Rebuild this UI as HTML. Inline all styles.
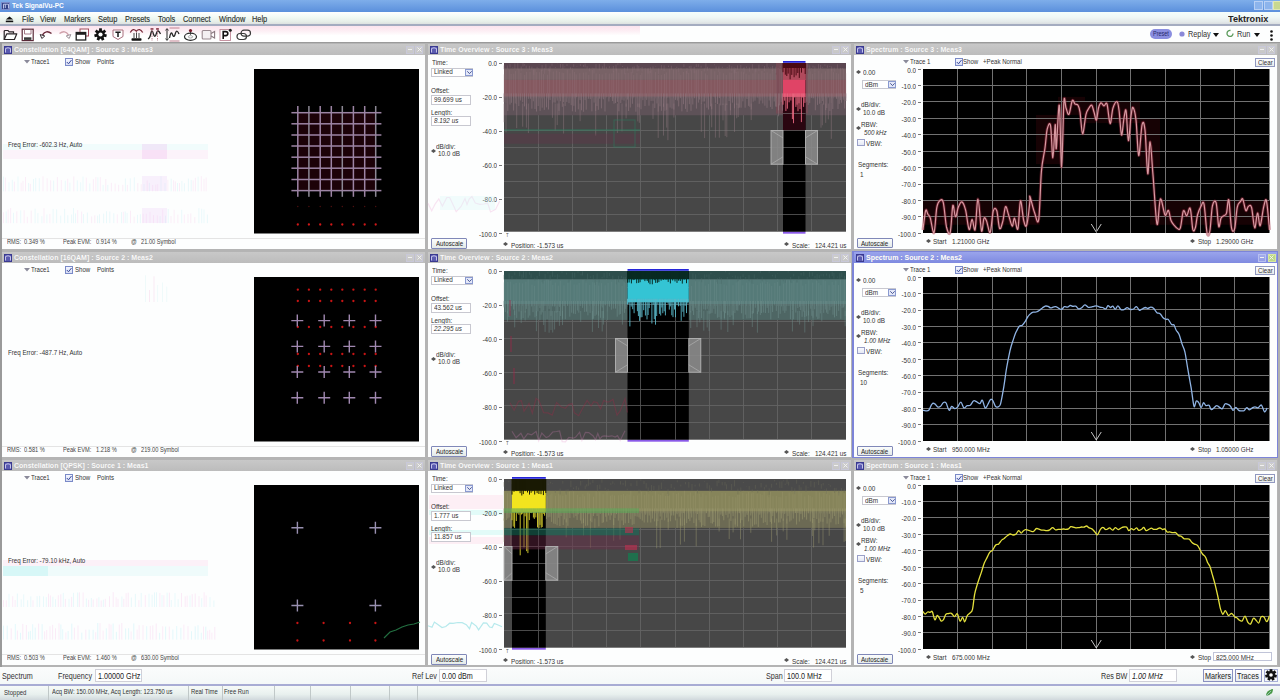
<!DOCTYPE html><html><head><meta charset="utf-8"><style>
*{margin:0;padding:0;box-sizing:border-box}
html,body{width:1280px;height:700px;overflow:hidden;background:#b4b4b4;font-family:"Liberation Sans", sans-serif}
.t{position:absolute;white-space:nowrap;line-height:1;transform:scaleX(.86);transform-origin:0 0}
.tr{transform-origin:100% 0 !important}
.b{position:absolute}
svg{position:absolute;overflow:visible}
</style></head><body><div class="b" style="left:0px;top:0px;width:1280px;height:12px;background:linear-gradient(#7eaeea,#5b90dc)"></div>
<div class="t" style="left:11.5px;top:1.8px;font-size:8px;color:#fff;font-weight:bold;transform:scaleX(.82)">Tek SignalVu-PC</div>
<div class="b" style="left:1px;top:1.5px;width:9px;height:8.5px;background:#34448a;border:1px solid #7a8ac8"></div>
<svg style="left:2.5px;top:3px" width="6" height="6"><path d="M0.5 5.5 V1.2 H5.5 V5.5 M2.3 1.2 V5" fill="none" stroke="#c8d0f0" stroke-width="0.9"/></svg>
<div class="b" style="left:1254px;top:1px;width:9px;height:9px;background:#8cb4ec;border:1px solid #b8d0f4"></div>
<div class="b" style="left:1264px;top:1px;width:9px;height:9px;background:#8cb4ec;border:1px solid #b8d0f4"></div>
<div class="b" style="left:1273px;top:1px;width:8px;height:9px;background:#c8d890;border:1px solid #e0e8b0"></div>
<div class="b" style="left:0px;top:12px;width:1280px;height:13px;background:linear-gradient(#f4fefc,#f0f8f6 40%,#e4eaea 75%,#d4d8dc)"></div>
<div class="b" style="left:0px;top:12px;width:640px;height:13px;background:linear-gradient(#ffffff,#f2faf4 40%,#e6eee8 75%,#d8dcdc)"></div>
<div class="b" style="left:0px;top:24px;width:1280px;height:2px;background:#a4acc0"></div>
<svg style="left:5px;top:15.5px" width="10" height="7"><path d="M0.8 3.6 L4.5 0.5 L8.2 3.6 Z" fill="#111"/><rect x="0.8" y="4.6" width="7.4" height="1.6" fill="#111"/></svg>
<div class="t" style="left:22px;top:14.5px;font-size:8.6px;color:#2e3430;-webkit-text-stroke:0.15px #2e3430">File</div>
<div class="t" style="left:40px;top:14.5px;font-size:8.6px;color:#2e3430;-webkit-text-stroke:0.15px #2e3430">View</div>
<div class="t" style="left:64px;top:14.5px;font-size:8.6px;color:#2e3430;-webkit-text-stroke:0.15px #2e3430">Markers</div>
<div class="t" style="left:98px;top:14.5px;font-size:8.6px;color:#2e3430;-webkit-text-stroke:0.15px #2e3430">Setup</div>
<div class="t" style="left:125px;top:14.5px;font-size:8.6px;color:#2e3430;-webkit-text-stroke:0.15px #2e3430">Presets</div>
<div class="t" style="left:158px;top:14.5px;font-size:8.6px;color:#2e3430;-webkit-text-stroke:0.15px #2e3430">Tools</div>
<div class="t" style="left:183px;top:14.5px;font-size:8.6px;color:#2e3430;-webkit-text-stroke:0.15px #2e3430">Connect</div>
<div class="t" style="left:219px;top:14.5px;font-size:8.6px;color:#2e3430;-webkit-text-stroke:0.15px #2e3430">Window</div>
<div class="t" style="left:252px;top:14.5px;font-size:8.6px;color:#2e3430;-webkit-text-stroke:0.15px #2e3430">Help</div>
<div class="t" style="left:1227.5px;top:13.6px;font-size:9.8px;color:#262626;font-weight:bold;transform:scaleX(.93)">Tektronix</div>
<div class="b" style="left:0px;top:26px;width:1280px;height:16px;background:#fdfefe"></div>
<div class="b" style="left:0px;top:26px;width:640px;height:16px;background:linear-gradient(#fbe4ee,#fdeef4 30%,#ffffff 60%,#ffffff)"></div>
<div class="b" style="left:0px;top:41.5px;width:1280px;height:1.8px;background:#9a9a9a"></div>
<svg style="left:3px;top:29px" width="15" height="12"><path d="M1.2 10.5 V2.5 Q1.2 1.5 2.2 1.5 H5 L6.2 2.8 H10.5 V4.8" fill="none" stroke="#2a2226" stroke-width="1.2"/><path d="M1.2 10.5 L3.8 4.8 H13.8 L11.4 10.5 Z" fill="#fff" stroke="#2a2226" stroke-width="1.2" stroke-linejoin="round"/></svg>
<svg style="left:21px;top:28px" width="14" height="14"><rect x="1.2" y="1.2" width="11" height="11.4" fill="#fff" stroke="#5a2a38" stroke-width="1.2"/><path d="M3.5 1.5 V6 H10 V1.5" fill="none" stroke="#9a6a78" stroke-width="0.9"/><rect x="3" y="9.3" width="7.4" height="2.6" fill="#3a3a3a"/></svg>
<svg style="left:39px;top:29px" width="15" height="11"><path d="M3.5 6 Q7 0.5 12.5 4.5" fill="none" stroke="#6a2a3a" stroke-width="1.5"/><path d="M1.2 5.5 L2.8 9.5 L5.8 7 Z" fill="#fff" stroke="#3a3036" stroke-width="1"/></svg>
<svg style="left:57px;top:29px" width="15" height="11"><path d="M2.5 4.5 Q8 0.5 11.5 6" fill="none" stroke="#d0a0aa" stroke-width="1.5"/><path d="M13.8 5.5 L12.2 9.5 L9.2 7 Z" fill="#fff" stroke="#9a9098" stroke-width="1"/></svg>
<svg style="left:75px;top:28px" width="15" height="13"><rect x="5" y="1" width="8.5" height="7" fill="#fff" stroke="#a04a5a" stroke-width="1"/><rect x="1.2" y="4.5" width="9.5" height="7.5" fill="#fff" stroke="#1e1e1e" stroke-width="1.3"/><rect x="1.2" y="4.5" width="9.5" height="2.3" fill="#1e1e1e"/></svg>
<svg style="left:93.5px;top:28px" width="13" height="13"><rect x="5.1" y="0.3" width="2.8" height="3" fill="#111" transform="rotate(0.0 6.5 6.5)"/><rect x="5.1" y="0.3" width="2.8" height="3" fill="#111" transform="rotate(51.4 6.5 6.5)"/><rect x="5.1" y="0.3" width="2.8" height="3" fill="#111" transform="rotate(102.9 6.5 6.5)"/><rect x="5.1" y="0.3" width="2.8" height="3" fill="#111" transform="rotate(154.3 6.5 6.5)"/><rect x="5.1" y="0.3" width="2.8" height="3" fill="#111" transform="rotate(205.7 6.5 6.5)"/><rect x="5.1" y="0.3" width="2.8" height="3" fill="#111" transform="rotate(257.1 6.5 6.5)"/><rect x="5.1" y="0.3" width="2.8" height="3" fill="#111" transform="rotate(308.6 6.5 6.5)"/><circle cx="6.5" cy="6.5" r="4.3" fill="#111"/><circle cx="6.5" cy="6.5" r="2.1" fill="#fff"/></svg>
<svg style="left:112px;top:28.5px" width="12" height="12"><path d="M1 1 H11 V7.5 L6 10.5 L1 7.5 Z" fill="#fff" stroke="#a06070" stroke-width="0.9"/><path d="M3.4 3.2 H8.6 M6 3.2 V8" stroke="#1a1a1a" stroke-width="1.5"/></svg>
<svg style="left:129px;top:27px" width="15" height="15"><path d="M1.3 5.5 Q4 0.3 7.3 4.2 Q10.6 0.3 13.7 5.5" fill="none" stroke="#7a2a3a" stroke-width="1.3"/><path d="M5 6 v5 M7.5 5.5 v5.5 M10 6 v5" stroke="#333" stroke-width="0.9"/><rect x="2.5" y="11.2" width="10" height="2.6" rx="0.8" fill="#111"/></svg>
<svg style="left:147px;top:27px" width="15" height="15"><path d="M1 12 Q3 11 4 6 Q5 1.5 6.5 7 Q8 12 9.5 6 Q11 1.5 13.5 7" fill="none" stroke="#262626" stroke-width="1.3"/><path d="M5 1 v13 M10.5 1 v13" stroke="#a05060" stroke-width="0.7" stroke-dasharray="1.5 1"/><rect x="3.5" y="1.2" width="3" height="1.5" fill="#8a3a4a"/><rect x="9" y="1.2" width="3" height="1.5" fill="#8a3a4a"/></svg>
<svg style="left:165px;top:27px" width="15" height="15"><path d="M4.5 11 Q6 3 7.5 7.5 Q9 12 10.5 6 Q12 2 14 7" fill="none" stroke="#262626" stroke-width="1.3"/><path d="M2 2 v11" stroke="#222" stroke-width="1"/><path d="M0.5 3.5 L2 1.5 L3.5 3.5 M0.5 11.5 L2 13.5 L3.5 11.5" fill="none" stroke="#222" stroke-width="0.8"/><path d="M4.5 1 h10 M4.5 14 h10" stroke="#c08090" stroke-width="1"/></svg>
<svg style="left:183px;top:28px" width="15" height="14"><ellipse cx="7.5" cy="8.8" rx="6" ry="3.6" fill="#fff" stroke="#2a2a2a" stroke-width="1.2"/><ellipse cx="7.5" cy="8.8" rx="2.2" ry="1.2" fill="none" stroke="#888" stroke-width="0.7"/><circle cx="7.5" cy="2.6" r="1.6" fill="#7a1a2a"/><path d="M7.5 3.8 v3" stroke="#333" stroke-width="0.9"/></svg>
<svg style="left:201px;top:29px" width="15" height="12"><rect x="1.2" y="1.5" width="8.8" height="8.5" rx="1" fill="#f4f0f2" stroke="#9a8a90" stroke-width="1.1"/><path d="M10 4.5 L13.6 2.5 V9 L10 7" fill="none" stroke="#8a7a80" stroke-width="1.1"/></svg>
<svg style="left:219px;top:28px" width="14" height="14"><rect x="1" y="1.5" width="10.5" height="11" fill="#fff" stroke="#c08898" stroke-width="0.9"/><path d="M4.2 11 V3.6 H6.8 Q8.8 3.6 8.8 5.6 Q8.8 7.6 6.8 7.6 H4.2" fill="none" stroke="#111" stroke-width="1.6"/><circle cx="11.3" cy="2.2" r="1.5" fill="#222"/></svg>
<svg style="left:236px;top:29px" width="16" height="12"><rect x="1" y="4.5" width="9.5" height="6" rx="3" fill="#fff" stroke="#3a3a3a" stroke-width="1.2"/><rect x="5" y="1.2" width="9.5" height="6" rx="3" fill="none" stroke="#3a3a3a" stroke-width="1.2"/></svg>
<div class="b" style="left:1150px;top:29px;width:22px;height:10px;background:#8a8ee0;border-radius:5px"></div>
<div class="t" style="left:1152.5px;top:30.8px;font-size:6.8px;color:#26286a;transform:scaleX(.8)">Preset</div>
<svg style="left:1179px;top:31px" width="6" height="6"><circle cx="3" cy="3" r="2.6" fill="#8a88d8"/></svg>
<div class="t" style="left:1188px;top:29.5px;font-size:8.5px;color:#333;">Replay</div>
<svg style="left:1213px;top:33px" width="6" height="4"><path d="M0 0 H6 L3 4 Z" fill="#111"/></svg>
<svg style="left:1226px;top:29px" width="9" height="9"><path d="M7 4.5 A3 3 0 1 1 4.5 1.5" fill="none" stroke="#5a9a5a" stroke-width="1.3"/></svg>
<div class="t" style="left:1237px;top:29.5px;font-size:8.5px;color:#333;">Run</div>
<svg style="left:1254px;top:33px" width="6" height="4"><path d="M0 0 H6 L3 4 Z" fill="#111"/></svg>
<svg style="left:1270px;top:30px" width="3" height="3"><circle cx="1.5" cy="1.5" r="1.3" fill="#111"/></svg>
<svg style="left:1270px;top:34px" width="3" height="3"><circle cx="1.5" cy="1.5" r="1.3" fill="#111"/></svg>
<svg style="left:1270px;top:38px" width="3" height="3"><circle cx="1.5" cy="1.5" r="1.3" fill="#111"/></svg>
<div class="b" style="left:2px;top:44px;width:423px;height:11px;background:linear-gradient(#c8c8c8,#bcbcbc)"></div>
<div class="b" style="left:2px;top:55px;width:423px;height:194px;background:#fdfefe"></div>
<div class="b" style="left:4px;top:45.5px;width:8px;height:8px;background:#5a5ab0;border:1px solid #3a3a90"></div>
<svg style="left:5px;top:47px" width="6" height="6"><path d="M0.5 5.5 V1.5 Q3 0 5.5 1.5 V5.5" fill="none" stroke="#d0d0f0" stroke-width="0.9"/></svg>
<div class="t" style="left:14px;top:46px;font-size:7.8px;color:#fbfbfb;font-weight:bold;transform:scaleX(.9);text-shadow:0 0 0.6px rgba(150,150,150,0.5)">Constellation [64QAM] : Source 3 : Meas3</div>
<div class="b" style="left:406px;top:45.5px;width:8px;height:8px;border:1px solid #c8c8d8;background:rgba(255,255,255,0.15)"></div>
<div class="b" style="left:408px;top:49px;width:4px;height:1.3px;background:#f0f0f0"></div>
<div class="b" style="left:415px;top:45.5px;width:8px;height:8px;border:1px solid #c8c8d8;background:rgba(255,255,255,0.15)"></div>
<svg style="left:416.5px;top:47px" width="5" height="5"><path d="M0.5 0.5 L4.5 4.5 M4.5 0.5 L0.5 4.5" stroke="#f4f4f4" stroke-width="0.9"/></svg>
<div class="b" style="left:428px;top:44px;width:423px;height:11px;background:linear-gradient(#c8c8c8,#bcbcbc)"></div>
<div class="b" style="left:428px;top:55px;width:423px;height:194px;background:#fdfefe"></div>
<div class="b" style="left:430px;top:45.5px;width:8px;height:8px;background:#5a5ab0;border:1px solid #3a3a90"></div>
<svg style="left:431px;top:47px" width="6" height="6"><path d="M0.5 5.5 V1.5 Q3 0 5.5 1.5 V5.5" fill="none" stroke="#d0d0f0" stroke-width="0.9"/></svg>
<div class="t" style="left:440px;top:46px;font-size:7.8px;color:#fbfbfb;font-weight:bold;transform:scaleX(.9);text-shadow:0 0 0.6px rgba(150,150,150,0.5)">Time Overview : Source 3 : Meas3</div>
<div class="b" style="left:832px;top:45.5px;width:8px;height:8px;border:1px solid #c8c8d8;background:rgba(255,255,255,0.15)"></div>
<div class="b" style="left:834px;top:49px;width:4px;height:1.3px;background:#f0f0f0"></div>
<div class="b" style="left:841px;top:45.5px;width:8px;height:8px;border:1px solid #c8c8d8;background:rgba(255,255,255,0.15)"></div>
<svg style="left:842.5px;top:47px" width="5" height="5"><path d="M0.5 0.5 L4.5 4.5 M4.5 0.5 L0.5 4.5" stroke="#f4f4f4" stroke-width="0.9"/></svg>
<div class="b" style="left:854px;top:44px;width:423px;height:11px;background:linear-gradient(#c8c8c8,#bcbcbc)"></div>
<div class="b" style="left:854px;top:55px;width:423px;height:194px;background:#fdfefe"></div>
<div class="b" style="left:856px;top:45.5px;width:8px;height:8px;background:#5a5ab0;border:1px solid #3a3a90"></div>
<svg style="left:857px;top:47px" width="6" height="6"><path d="M0.5 5.5 V1.5 Q3 0 5.5 1.5 V5.5" fill="none" stroke="#d0d0f0" stroke-width="0.9"/></svg>
<div class="t" style="left:866px;top:46px;font-size:7.8px;color:#fbfbfb;font-weight:bold;transform:scaleX(.9);text-shadow:0 0 0.6px rgba(150,150,150,0.5)">Spectrum : Source 3 : Meas3</div>
<div class="b" style="left:1258px;top:45.5px;width:8px;height:8px;border:1px solid #c8c8d8;background:rgba(255,255,255,0.15)"></div>
<div class="b" style="left:1260px;top:49px;width:4px;height:1.3px;background:#f0f0f0"></div>
<div class="b" style="left:1267px;top:45.5px;width:8px;height:8px;border:1px solid #c8c8d8;background:rgba(255,255,255,0.15)"></div>
<svg style="left:1268.5px;top:47px" width="5" height="5"><path d="M0.5 0.5 L4.5 4.5 M4.5 0.5 L0.5 4.5" stroke="#f4f4f4" stroke-width="0.9"/></svg>
<div class="b" style="left:2px;top:252px;width:423px;height:11px;background:linear-gradient(#c8c8c8,#bcbcbc)"></div>
<div class="b" style="left:2px;top:263px;width:423px;height:194px;background:#fdfefe"></div>
<div class="b" style="left:4px;top:253.5px;width:8px;height:8px;background:#5a5ab0;border:1px solid #3a3a90"></div>
<svg style="left:5px;top:255px" width="6" height="6"><path d="M0.5 5.5 V1.5 Q3 0 5.5 1.5 V5.5" fill="none" stroke="#d0d0f0" stroke-width="0.9"/></svg>
<div class="t" style="left:14px;top:254px;font-size:7.8px;color:#fbfbfb;font-weight:bold;transform:scaleX(.9);text-shadow:0 0 0.6px rgba(150,150,150,0.5)">Constellation [16QAM] : Source 2 : Meas2</div>
<div class="b" style="left:406px;top:253.5px;width:8px;height:8px;border:1px solid #c8c8d8;background:rgba(255,255,255,0.15)"></div>
<div class="b" style="left:408px;top:257px;width:4px;height:1.3px;background:#f0f0f0"></div>
<div class="b" style="left:415px;top:253.5px;width:8px;height:8px;border:1px solid #c8c8d8;background:rgba(255,255,255,0.15)"></div>
<svg style="left:416.5px;top:255px" width="5" height="5"><path d="M0.5 0.5 L4.5 4.5 M4.5 0.5 L0.5 4.5" stroke="#f4f4f4" stroke-width="0.9"/></svg>
<div class="b" style="left:428px;top:252px;width:423px;height:11px;background:linear-gradient(#c8c8c8,#bcbcbc)"></div>
<div class="b" style="left:428px;top:263px;width:423px;height:194px;background:#fdfefe"></div>
<div class="b" style="left:430px;top:253.5px;width:8px;height:8px;background:#5a5ab0;border:1px solid #3a3a90"></div>
<svg style="left:431px;top:255px" width="6" height="6"><path d="M0.5 5.5 V1.5 Q3 0 5.5 1.5 V5.5" fill="none" stroke="#d0d0f0" stroke-width="0.9"/></svg>
<div class="t" style="left:440px;top:254px;font-size:7.8px;color:#fbfbfb;font-weight:bold;transform:scaleX(.9);text-shadow:0 0 0.6px rgba(150,150,150,0.5)">Time Overview : Source 2 : Meas2</div>
<div class="b" style="left:832px;top:253.5px;width:8px;height:8px;border:1px solid #c8c8d8;background:rgba(255,255,255,0.15)"></div>
<div class="b" style="left:834px;top:257px;width:4px;height:1.3px;background:#f0f0f0"></div>
<div class="b" style="left:841px;top:253.5px;width:8px;height:8px;border:1px solid #c8c8d8;background:rgba(255,255,255,0.15)"></div>
<svg style="left:842.5px;top:255px" width="5" height="5"><path d="M0.5 0.5 L4.5 4.5 M4.5 0.5 L0.5 4.5" stroke="#f4f4f4" stroke-width="0.9"/></svg>
<div class="b" style="left:852px;top:251px;width:427px;height:207px;background:#7c84d8"></div>
<div class="b" style="left:854px;top:252px;width:423px;height:11px;background:linear-gradient(#9aa4ec,#7e8ae0)"></div>
<div class="b" style="left:854px;top:263px;width:423px;height:194px;background:#fdfefe"></div>
<div class="b" style="left:856px;top:253.5px;width:8px;height:8px;background:#5a5ab0;border:1px solid #3a3a90"></div>
<svg style="left:857px;top:255px" width="6" height="6"><path d="M0.5 5.5 V1.5 Q3 0 5.5 1.5 V5.5" fill="none" stroke="#d0d0f0" stroke-width="0.9"/></svg>
<div class="t" style="left:866px;top:254px;font-size:7.8px;color:#ffffff;font-weight:bold;transform:scaleX(.9);text-shadow:0 0 0.6px rgba(150,150,150,0.5)">Spectrum : Source 2 : Meas2</div>
<div class="b" style="left:1258px;top:253.5px;width:8px;height:8px;border:1px solid #b8c0f0;background:rgba(255,255,255,0.15)"></div>
<div class="b" style="left:1260px;top:257px;width:4px;height:1.3px;background:#f0f0f0"></div>
<div class="b" style="left:1267.5px;top:253.5px;width:8px;height:8px;border:1px solid #d8e8a0;background:#bcd888"></div>
<svg style="left:1268.5px;top:255px" width="5" height="5"><path d="M0.5 0.5 L4.5 4.5 M4.5 0.5 L0.5 4.5" stroke="#f4f4f4" stroke-width="0.9"/></svg>
<div class="b" style="left:2px;top:460px;width:423px;height:11px;background:linear-gradient(#c8c8c8,#bcbcbc)"></div>
<div class="b" style="left:2px;top:471px;width:423px;height:194px;background:#fdfefe"></div>
<div class="b" style="left:4px;top:461.5px;width:8px;height:8px;background:#5a5ab0;border:1px solid #3a3a90"></div>
<svg style="left:5px;top:463px" width="6" height="6"><path d="M0.5 5.5 V1.5 Q3 0 5.5 1.5 V5.5" fill="none" stroke="#d0d0f0" stroke-width="0.9"/></svg>
<div class="t" style="left:14px;top:462px;font-size:7.8px;color:#fbfbfb;font-weight:bold;transform:scaleX(.9);text-shadow:0 0 0.6px rgba(150,150,150,0.5)">Constellation [QPSK] : Source 1 : Meas1</div>
<div class="b" style="left:406px;top:461.5px;width:8px;height:8px;border:1px solid #c8c8d8;background:rgba(255,255,255,0.15)"></div>
<div class="b" style="left:408px;top:465px;width:4px;height:1.3px;background:#f0f0f0"></div>
<div class="b" style="left:415px;top:461.5px;width:8px;height:8px;border:1px solid #c8c8d8;background:rgba(255,255,255,0.15)"></div>
<svg style="left:416.5px;top:463px" width="5" height="5"><path d="M0.5 0.5 L4.5 4.5 M4.5 0.5 L0.5 4.5" stroke="#f4f4f4" stroke-width="0.9"/></svg>
<div class="b" style="left:428px;top:460px;width:423px;height:11px;background:linear-gradient(#c8c8c8,#bcbcbc)"></div>
<div class="b" style="left:428px;top:471px;width:423px;height:194px;background:#fdfefe"></div>
<div class="b" style="left:430px;top:461.5px;width:8px;height:8px;background:#5a5ab0;border:1px solid #3a3a90"></div>
<svg style="left:431px;top:463px" width="6" height="6"><path d="M0.5 5.5 V1.5 Q3 0 5.5 1.5 V5.5" fill="none" stroke="#d0d0f0" stroke-width="0.9"/></svg>
<div class="t" style="left:440px;top:462px;font-size:7.8px;color:#fbfbfb;font-weight:bold;transform:scaleX(.9);text-shadow:0 0 0.6px rgba(150,150,150,0.5)">Time Overview : Source 1 : Meas1</div>
<div class="b" style="left:832px;top:461.5px;width:8px;height:8px;border:1px solid #c8c8d8;background:rgba(255,255,255,0.15)"></div>
<div class="b" style="left:834px;top:465px;width:4px;height:1.3px;background:#f0f0f0"></div>
<div class="b" style="left:841px;top:461.5px;width:8px;height:8px;border:1px solid #c8c8d8;background:rgba(255,255,255,0.15)"></div>
<svg style="left:842.5px;top:463px" width="5" height="5"><path d="M0.5 0.5 L4.5 4.5 M4.5 0.5 L0.5 4.5" stroke="#f4f4f4" stroke-width="0.9"/></svg>
<div class="b" style="left:854px;top:460px;width:423px;height:11px;background:linear-gradient(#c8c8c8,#bcbcbc)"></div>
<div class="b" style="left:854px;top:471px;width:423px;height:194px;background:#fdfefe"></div>
<div class="b" style="left:856px;top:461.5px;width:8px;height:8px;background:#5a5ab0;border:1px solid #3a3a90"></div>
<svg style="left:857px;top:463px" width="6" height="6"><path d="M0.5 5.5 V1.5 Q3 0 5.5 1.5 V5.5" fill="none" stroke="#d0d0f0" stroke-width="0.9"/></svg>
<div class="t" style="left:866px;top:462px;font-size:7.8px;color:#fbfbfb;font-weight:bold;transform:scaleX(.9);text-shadow:0 0 0.6px rgba(150,150,150,0.5)">Spectrum : Source 1 : Meas1</div>
<div class="b" style="left:1258px;top:461.5px;width:8px;height:8px;border:1px solid #c8c8d8;background:rgba(255,255,255,0.15)"></div>
<div class="b" style="left:1260px;top:465px;width:4px;height:1.3px;background:#f0f0f0"></div>
<div class="b" style="left:1267px;top:461.5px;width:8px;height:8px;border:1px solid #c8c8d8;background:rgba(255,255,255,0.15)"></div>
<svg style="left:1268.5px;top:463px" width="5" height="5"><path d="M0.5 0.5 L4.5 4.5 M4.5 0.5 L0.5 4.5" stroke="#f4f4f4" stroke-width="0.9"/></svg>
<div class="b" style="left:3px;top:143.5px;width:205px;height:6.5px;background:#c8f4f4;opacity:0.22"></div>
<div class="b" style="left:3px;top:150px;width:205px;height:9px;background:#fbd4ee;opacity:0.25"></div>
<div class="b" style="left:142px;top:143.5px;width:25px;height:15.5px;background:#f0b8f0;opacity:0.3"></div>
<svg style="left:3px;top:175.7px" width="205" height="15.3"><rect x="0.0" y="0.5" width="1" height="14.8" fill="#c0f0f4" opacity="0.3"/><rect x="1.9" y="1.5" width="1" height="13.8" fill="#f8c8ec" opacity="0.3"/><rect x="5.5" y="6.4" width="1" height="8.9" fill="#c0f0f4" opacity="0.3"/><rect x="8.8" y="3.8" width="1" height="11.5" fill="#c0f0f4" opacity="0.3"/><rect x="10.9" y="5.6" width="1" height="9.7" fill="#f8c8ec" opacity="0.3"/><rect x="14.5" y="0.5" width="1" height="14.8" fill="#c0f0f4" opacity="0.3"/><rect x="17.6" y="6.7" width="1" height="8.6" fill="#f8c8ec" opacity="0.3"/><rect x="19.5" y="4.9" width="1" height="10.4" fill="#f8c8ec" opacity="0.3"/><rect x="22.0" y="1.0" width="1" height="14.3" fill="#f8c8ec" opacity="0.3"/><rect x="25.1" y="7.0" width="1" height="8.3" fill="#c0f0f4" opacity="0.3"/><rect x="26.9" y="7.9" width="1" height="7.4" fill="#f8c8ec" opacity="0.3"/><rect x="30.0" y="3.0" width="1" height="12.3" fill="#c0f0f4" opacity="0.3"/><rect x="32.2" y="1.9" width="1" height="13.4" fill="#c0f0f4" opacity="0.3"/><rect x="35.8" y="2.2" width="1" height="13.1" fill="#c0f0f4" opacity="0.3"/><rect x="39.5" y="0.2" width="1" height="15.1" fill="#f8c8ec" opacity="0.3"/><rect x="43.6" y="2.3" width="1" height="13.0" fill="#f8c8ec" opacity="0.3"/><rect x="47.1" y="4.3" width="1" height="11.0" fill="#f8c8ec" opacity="0.3"/><rect x="50.1" y="4.6" width="1" height="10.7" fill="#c0f0f4" opacity="0.3"/><rect x="53.9" y="1.1" width="1" height="14.2" fill="#f8c8ec" opacity="0.3"/><rect x="57.8" y="4.0" width="1" height="11.3" fill="#f8c8ec" opacity="0.3"/><rect x="61.8" y="4.7" width="1" height="10.6" fill="#c0f0f4" opacity="0.3"/><rect x="64.2" y="2.8" width="1" height="12.5" fill="#f8c8ec" opacity="0.3"/><rect x="66.4" y="6.7" width="1" height="8.6" fill="#c0f0f4" opacity="0.3"/><rect x="70.3" y="0.4" width="1" height="14.9" fill="#f8c8ec" opacity="0.3"/><rect x="73.8" y="4.4" width="1" height="10.9" fill="#c0f0f4" opacity="0.3"/><rect x="77.2" y="6.3" width="1" height="9.0" fill="#c0f0f4" opacity="0.3"/><rect x="79.5" y="0.6" width="1" height="14.7" fill="#c0f0f4" opacity="0.3"/><rect x="82.8" y="1.6" width="1" height="13.7" fill="#f8c8ec" opacity="0.3"/><rect x="86.3" y="7.4" width="1" height="7.9" fill="#c0f0f4" opacity="0.3"/><rect x="89.9" y="3.2" width="1" height="12.1" fill="#f8c8ec" opacity="0.3"/><rect x="92.4" y="1.1" width="1" height="14.2" fill="#f8c8ec" opacity="0.3"/><rect x="94.4" y="1.3" width="1" height="14.0" fill="#c0f0f4" opacity="0.3"/><rect x="96.8" y="1.1" width="1" height="14.2" fill="#f8c8ec" opacity="0.3"/><rect x="99.6" y="8.9" width="1" height="6.4" fill="#c0f0f4" opacity="0.3"/><rect x="102.3" y="3.0" width="1" height="12.3" fill="#f8c8ec" opacity="0.3"/><rect x="104.3" y="8.9" width="1" height="6.4" fill="#c0f0f4" opacity="0.3"/><rect x="107.9" y="6.8" width="1" height="8.5" fill="#f8c8ec" opacity="0.3"/><rect x="111.6" y="7.5" width="1" height="7.8" fill="#f8c8ec" opacity="0.3"/><rect x="115.1" y="8.8" width="1" height="6.5" fill="#f8c8ec" opacity="0.3"/><rect x="119.3" y="8.8" width="1" height="6.5" fill="#f8c8ec" opacity="0.3"/><rect x="121.9" y="2.4" width="1" height="12.9" fill="#c0f0f4" opacity="0.3"/><rect x="123.9" y="8.9" width="1" height="6.4" fill="#f8c8ec" opacity="0.3"/><rect x="126.8" y="2.4" width="1" height="12.9" fill="#c0f0f4" opacity="0.3"/><rect x="130.8" y="1.3" width="1" height="14.0" fill="#c0f0f4" opacity="0.3"/><rect x="134.3" y="7.1" width="1" height="8.2" fill="#f8c8ec" opacity="0.3"/><rect x="137.7" y="8.2" width="1" height="7.1" fill="#f8c8ec" opacity="0.3"/><rect x="140.5" y="8.0" width="1" height="7.3" fill="#c0f0f4" opacity="0.3"/><rect x="143.7" y="4.5" width="1" height="10.8" fill="#f8c8ec" opacity="0.3"/><rect x="145.9" y="6.8" width="1" height="8.5" fill="#c0f0f4" opacity="0.3"/><rect x="149.1" y="9.0" width="1" height="6.3" fill="#f8c8ec" opacity="0.3"/><rect x="152.3" y="8.7" width="1" height="6.6" fill="#f8c8ec" opacity="0.3"/><rect x="154.2" y="8.3" width="1" height="7.0" fill="#f8c8ec" opacity="0.3"/><rect x="157.5" y="0.2" width="1" height="15.1" fill="#c0f0f4" opacity="0.3"/><rect x="161.5" y="7.0" width="1" height="8.3" fill="#c0f0f4" opacity="0.3"/><rect x="164.4" y="3.8" width="1" height="11.5" fill="#f8c8ec" opacity="0.3"/><rect x="167.7" y="2.7" width="1" height="12.6" fill="#c0f0f4" opacity="0.3"/><rect x="170.1" y="4.3" width="1" height="11.0" fill="#f8c8ec" opacity="0.3"/><rect x="171.9" y="5.4" width="1" height="9.9" fill="#f8c8ec" opacity="0.3"/><rect x="174.0" y="7.0" width="1" height="8.3" fill="#c0f0f4" opacity="0.3"/><rect x="176.0" y="7.1" width="1" height="8.2" fill="#f8c8ec" opacity="0.3"/><rect x="178.4" y="4.9" width="1" height="10.4" fill="#c0f0f4" opacity="0.3"/><rect x="180.9" y="7.2" width="1" height="8.1" fill="#c0f0f4" opacity="0.3"/><rect x="184.9" y="2.5" width="1" height="12.8" fill="#c0f0f4" opacity="0.3"/><rect x="187.7" y="3.8" width="1" height="11.5" fill="#c0f0f4" opacity="0.3"/><rect x="189.6" y="4.4" width="1" height="10.9" fill="#f8c8ec" opacity="0.3"/><rect x="191.9" y="1.8" width="1" height="13.5" fill="#f8c8ec" opacity="0.3"/><rect x="194.6" y="0.7" width="1" height="14.6" fill="#c0f0f4" opacity="0.3"/><rect x="197.8" y="0.2" width="1" height="15.1" fill="#f8c8ec" opacity="0.3"/><rect x="200.5" y="2.9" width="1" height="12.4" fill="#f8c8ec" opacity="0.3"/><rect x="202.6" y="1.5" width="1" height="13.8" fill="#f8c8ec" opacity="0.3"/></svg>
<div class="b" style="left:142px;top:175.7px;width:25px;height:15.3px;background:#e8c0f4;opacity:0.22"></div>
<svg style="left:3px;top:207.8px" width="205" height="15.2"><rect x="0.0" y="4.2" width="1" height="11.0" fill="#f8c8ec" opacity="0.3"/><rect x="2.7" y="3.4" width="1" height="11.8" fill="#c0f0f4" opacity="0.3"/><rect x="4.6" y="1.5" width="1" height="13.7" fill="#f8c8ec" opacity="0.3"/><rect x="7.1" y="0.0" width="1" height="15.2" fill="#f8c8ec" opacity="0.3"/><rect x="10.0" y="4.8" width="1" height="10.4" fill="#c0f0f4" opacity="0.3"/><rect x="13.3" y="3.3" width="1" height="11.9" fill="#f8c8ec" opacity="0.3"/><rect x="17.2" y="2.4" width="1" height="12.8" fill="#c0f0f4" opacity="0.3"/><rect x="20.6" y="2.2" width="1" height="13.0" fill="#f8c8ec" opacity="0.3"/><rect x="23.8" y="8.8" width="1" height="6.4" fill="#f8c8ec" opacity="0.3"/><rect x="27.7" y="2.6" width="1" height="12.6" fill="#f8c8ec" opacity="0.3"/><rect x="31.6" y="0.7" width="1" height="14.5" fill="#c0f0f4" opacity="0.3"/><rect x="34.4" y="5.1" width="1" height="10.1" fill="#c0f0f4" opacity="0.3"/><rect x="38.4" y="8.2" width="1" height="7.0" fill="#c0f0f4" opacity="0.3"/><rect x="40.5" y="0.3" width="1" height="14.9" fill="#f8c8ec" opacity="0.3"/><rect x="43.4" y="6.4" width="1" height="8.8" fill="#c0f0f4" opacity="0.3"/><rect x="46.4" y="5.9" width="1" height="9.3" fill="#f8c8ec" opacity="0.3"/><rect x="49.6" y="0.9" width="1" height="14.3" fill="#c0f0f4" opacity="0.3"/><rect x="53.1" y="1.3" width="1" height="13.9" fill="#c0f0f4" opacity="0.3"/><rect x="57.2" y="7.6" width="1" height="7.6" fill="#c0f0f4" opacity="0.3"/><rect x="61.1" y="0.9" width="1" height="14.3" fill="#c0f0f4" opacity="0.3"/><rect x="64.3" y="7.2" width="1" height="8.0" fill="#c0f0f4" opacity="0.3"/><rect x="68.1" y="6.5" width="1" height="8.7" fill="#c0f0f4" opacity="0.3"/><rect x="70.0" y="0.1" width="1" height="15.1" fill="#c0f0f4" opacity="0.3"/><rect x="72.0" y="5.4" width="1" height="9.8" fill="#c0f0f4" opacity="0.3"/><rect x="74.2" y="2.1" width="1" height="13.1" fill="#f8c8ec" opacity="0.3"/><rect x="78.1" y="3.5" width="1" height="11.7" fill="#f8c8ec" opacity="0.3"/><rect x="80.0" y="6.1" width="1" height="9.1" fill="#c0f0f4" opacity="0.3"/><rect x="83.9" y="4.5" width="1" height="10.7" fill="#c0f0f4" opacity="0.3"/><rect x="88.1" y="8.4" width="1" height="6.8" fill="#f8c8ec" opacity="0.3"/><rect x="91.3" y="7.3" width="1" height="7.9" fill="#f8c8ec" opacity="0.3"/><rect x="94.1" y="7.7" width="1" height="7.5" fill="#c0f0f4" opacity="0.3"/><rect x="96.0" y="6.3" width="1" height="8.9" fill="#c0f0f4" opacity="0.3"/><rect x="100.1" y="5.7" width="1" height="9.5" fill="#c0f0f4" opacity="0.3"/><rect x="103.0" y="3.2" width="1" height="12.0" fill="#c0f0f4" opacity="0.3"/><rect x="106.3" y="3.5" width="1" height="11.7" fill="#c0f0f4" opacity="0.3"/><rect x="110.3" y="5.2" width="1" height="10.0" fill="#c0f0f4" opacity="0.3"/><rect x="113.8" y="6.4" width="1" height="8.8" fill="#f8c8ec" opacity="0.3"/><rect x="118.0" y="4.1" width="1" height="11.1" fill="#c0f0f4" opacity="0.3"/><rect x="119.8" y="3.8" width="1" height="11.4" fill="#f8c8ec" opacity="0.3"/><rect x="121.7" y="3.4" width="1" height="11.8" fill="#c0f0f4" opacity="0.3"/><rect x="123.6" y="4.9" width="1" height="10.3" fill="#c0f0f4" opacity="0.3"/><rect x="127.0" y="2.7" width="1" height="12.5" fill="#f8c8ec" opacity="0.3"/><rect x="130.6" y="8.6" width="1" height="6.6" fill="#f8c8ec" opacity="0.3"/><rect x="134.0" y="6.8" width="1" height="8.4" fill="#c0f0f4" opacity="0.3"/><rect x="136.9" y="6.2" width="1" height="9.0" fill="#c0f0f4" opacity="0.3"/><rect x="139.6" y="5.8" width="1" height="9.4" fill="#f8c8ec" opacity="0.3"/><rect x="142.8" y="5.7" width="1" height="9.5" fill="#f8c8ec" opacity="0.3"/><rect x="146.5" y="3.9" width="1" height="11.3" fill="#f8c8ec" opacity="0.3"/><rect x="150.0" y="7.1" width="1" height="8.1" fill="#f8c8ec" opacity="0.3"/><rect x="153.8" y="7.4" width="1" height="7.8" fill="#f8c8ec" opacity="0.3"/><rect x="156.6" y="8.2" width="1" height="7.0" fill="#c0f0f4" opacity="0.3"/><rect x="159.2" y="1.5" width="1" height="13.7" fill="#f8c8ec" opacity="0.3"/><rect x="162.0" y="7.6" width="1" height="7.6" fill="#c0f0f4" opacity="0.3"/><rect x="164.7" y="1.0" width="1" height="14.2" fill="#c0f0f4" opacity="0.3"/><rect x="167.5" y="8.0" width="1" height="7.2" fill="#f8c8ec" opacity="0.3"/><rect x="170.6" y="1.8" width="1" height="13.4" fill="#f8c8ec" opacity="0.3"/><rect x="174.4" y="6.6" width="1" height="8.6" fill="#f8c8ec" opacity="0.3"/><rect x="178.2" y="1.8" width="1" height="13.4" fill="#c0f0f4" opacity="0.3"/><rect x="180.8" y="6.5" width="1" height="8.7" fill="#f8c8ec" opacity="0.3"/><rect x="184.5" y="6.0" width="1" height="9.2" fill="#f8c8ec" opacity="0.3"/><rect x="187.3" y="5.4" width="1" height="9.8" fill="#f8c8ec" opacity="0.3"/><rect x="191.3" y="9.1" width="1" height="6.1" fill="#f8c8ec" opacity="0.3"/><rect x="195.4" y="0.1" width="1" height="15.1" fill="#c0f0f4" opacity="0.3"/><rect x="198.2" y="0.7" width="1" height="14.5" fill="#c0f0f4" opacity="0.3"/><rect x="200.5" y="1.5" width="1" height="13.7" fill="#c0f0f4" opacity="0.3"/><rect x="203.9" y="6.5" width="1" height="8.7" fill="#c0f0f4" opacity="0.3"/></svg>
<div class="b" style="left:142px;top:207.8px;width:25px;height:15.2px;background:#e8c0f4;opacity:0.22"></div>
<div class="b" style="left:3px;top:559.5px;width:205px;height:6.8px;background:#fcd4ec;opacity:0.3"></div>
<div class="b" style="left:3px;top:566.3px;width:205px;height:9.5px;background:#d0f6f6;opacity:0.3"></div>
<div class="b" style="left:3px;top:566.3px;width:45px;height:9.5px;background:#a0eeee;opacity:0.3"></div>
<svg style="left:3px;top:592px" width="212" height="15"><rect x="0.0" y="8.1" width="1" height="6.9" fill="#f8c0e8" opacity="0.3"/><rect x="2.8" y="8.4" width="1" height="6.6" fill="#f8c0e8" opacity="0.3"/><rect x="5.5" y="1.8" width="1" height="13.2" fill="#b8f0f4" opacity="0.3"/><rect x="9.2" y="4.2" width="1" height="10.8" fill="#f8c0e8" opacity="0.3"/><rect x="11.6" y="8.0" width="1" height="7.0" fill="#f8c0e8" opacity="0.3"/><rect x="13.9" y="1.5" width="1" height="13.5" fill="#b8f0f4" opacity="0.3"/><rect x="17.7" y="7.3" width="1" height="7.7" fill="#b8f0f4" opacity="0.3"/><rect x="20.2" y="2.4" width="1" height="12.6" fill="#b8f0f4" opacity="0.3"/><rect x="24.1" y="8.2" width="1" height="6.8" fill="#b8f0f4" opacity="0.3"/><rect x="27.3" y="4.4" width="1" height="10.6" fill="#b8f0f4" opacity="0.3"/><rect x="29.5" y="8.2" width="1" height="6.8" fill="#f8c0e8" opacity="0.3"/><rect x="33.6" y="4.1" width="1" height="10.9" fill="#b8f0f4" opacity="0.3"/><rect x="36.1" y="3.8" width="1" height="11.2" fill="#b8f0f4" opacity="0.3"/><rect x="40.0" y="4.4" width="1" height="10.6" fill="#b8f0f4" opacity="0.3"/><rect x="42.8" y="5.1" width="1" height="9.9" fill="#b8f0f4" opacity="0.3"/><rect x="45.0" y="1.7" width="1" height="13.3" fill="#f8c0e8" opacity="0.3"/><rect x="46.9" y="3.4" width="1" height="11.6" fill="#f8c0e8" opacity="0.3"/><rect x="49.4" y="4.8" width="1" height="10.2" fill="#b8f0f4" opacity="0.3"/><rect x="52.0" y="7.2" width="1" height="7.8" fill="#b8f0f4" opacity="0.3"/><rect x="54.8" y="3.3" width="1" height="11.7" fill="#f8c0e8" opacity="0.3"/><rect x="57.3" y="2.3" width="1" height="12.7" fill="#f8c0e8" opacity="0.3"/><rect x="59.8" y="0.9" width="1" height="14.1" fill="#b8f0f4" opacity="0.3"/><rect x="61.9" y="6.9" width="1" height="8.1" fill="#f8c0e8" opacity="0.3"/><rect x="65.5" y="6.9" width="1" height="8.1" fill="#b8f0f4" opacity="0.3"/><rect x="68.1" y="4.9" width="1" height="10.1" fill="#f8c0e8" opacity="0.3"/><rect x="70.0" y="0.9" width="1" height="14.1" fill="#b8f0f4" opacity="0.3"/><rect x="74.1" y="0.4" width="1" height="14.6" fill="#b8f0f4" opacity="0.3"/><rect x="75.9" y="0.3" width="1" height="14.7" fill="#f8c0e8" opacity="0.3"/><rect x="79.6" y="0.5" width="1" height="14.5" fill="#f8c0e8" opacity="0.3"/><rect x="82.9" y="6.4" width="1" height="8.6" fill="#b8f0f4" opacity="0.3"/><rect x="85.1" y="7.8" width="1" height="7.2" fill="#f8c0e8" opacity="0.3"/><rect x="87.9" y="6.0" width="1" height="9.0" fill="#b8f0f4" opacity="0.3"/><rect x="89.7" y="7.5" width="1" height="7.5" fill="#f8c0e8" opacity="0.3"/><rect x="93.4" y="6.4" width="1" height="8.6" fill="#f8c0e8" opacity="0.3"/><rect x="95.4" y="5.2" width="1" height="9.8" fill="#b8f0f4" opacity="0.3"/><rect x="97.7" y="8.5" width="1" height="6.5" fill="#f8c0e8" opacity="0.3"/><rect x="99.9" y="7.7" width="1" height="7.3" fill="#b8f0f4" opacity="0.3"/><rect x="101.8" y="6.8" width="1" height="8.2" fill="#f8c0e8" opacity="0.3"/><rect x="106.0" y="4.2" width="1" height="10.8" fill="#f8c0e8" opacity="0.3"/><rect x="109.7" y="0.1" width="1" height="14.9" fill="#f8c0e8" opacity="0.3"/><rect x="112.6" y="5.3" width="1" height="9.7" fill="#f8c0e8" opacity="0.3"/><rect x="114.5" y="6.8" width="1" height="8.2" fill="#f8c0e8" opacity="0.3"/><rect x="118.4" y="4.5" width="1" height="10.5" fill="#b8f0f4" opacity="0.3"/><rect x="120.3" y="6.8" width="1" height="8.2" fill="#f8c0e8" opacity="0.3"/><rect x="122.6" y="1.2" width="1" height="13.8" fill="#f8c0e8" opacity="0.3"/><rect x="124.7" y="0.6" width="1" height="14.4" fill="#f8c0e8" opacity="0.3"/><rect x="127.9" y="5.4" width="1" height="9.6" fill="#b8f0f4" opacity="0.3"/><rect x="131.9" y="1.9" width="1" height="13.1" fill="#b8f0f4" opacity="0.3"/><rect x="135.4" y="8.2" width="1" height="6.8" fill="#f8c0e8" opacity="0.3"/><rect x="137.7" y="0.9" width="1" height="14.1" fill="#b8f0f4" opacity="0.3"/><rect x="141.8" y="3.1" width="1" height="11.9" fill="#f8c0e8" opacity="0.3"/><rect x="145.5" y="1.7" width="1" height="13.3" fill="#b8f0f4" opacity="0.3"/><rect x="148.6" y="2.8" width="1" height="12.2" fill="#b8f0f4" opacity="0.3"/><rect x="151.0" y="0.4" width="1" height="14.6" fill="#b8f0f4" opacity="0.3"/><rect x="153.0" y="0.3" width="1" height="14.7" fill="#b8f0f4" opacity="0.3"/><rect x="156.4" y="0.9" width="1" height="14.1" fill="#f8c0e8" opacity="0.3"/><rect x="158.5" y="3.0" width="1" height="12.0" fill="#b8f0f4" opacity="0.3"/><rect x="160.4" y="3.3" width="1" height="11.7" fill="#f8c0e8" opacity="0.3"/><rect x="163.6" y="0.7" width="1" height="14.3" fill="#b8f0f4" opacity="0.3"/><rect x="165.9" y="0.7" width="1" height="14.3" fill="#f8c0e8" opacity="0.3"/><rect x="167.8" y="8.0" width="1" height="7.0" fill="#b8f0f4" opacity="0.3"/><rect x="171.5" y="1.1" width="1" height="13.9" fill="#b8f0f4" opacity="0.3"/><rect x="174.6" y="7.2" width="1" height="7.8" fill="#b8f0f4" opacity="0.3"/><rect x="178.0" y="1.0" width="1" height="14.0" fill="#f8c0e8" opacity="0.3"/><rect x="181.7" y="4.3" width="1" height="10.7" fill="#f8c0e8" opacity="0.3"/><rect x="183.6" y="3.6" width="1" height="11.4" fill="#f8c0e8" opacity="0.3"/><rect x="186.5" y="3.5" width="1" height="11.5" fill="#b8f0f4" opacity="0.3"/><rect x="188.7" y="2.1" width="1" height="12.9" fill="#f8c0e8" opacity="0.3"/><rect x="191.7" y="1.5" width="1" height="13.5" fill="#f8c0e8" opacity="0.3"/><rect x="195.5" y="4.1" width="1" height="10.9" fill="#f8c0e8" opacity="0.3"/><rect x="198.2" y="6.2" width="1" height="8.8" fill="#b8f0f4" opacity="0.3"/><rect x="200.6" y="0.3" width="1" height="14.7" fill="#f8c0e8" opacity="0.3"/><rect x="202.6" y="3.4" width="1" height="11.6" fill="#f8c0e8" opacity="0.3"/><rect x="206.5" y="5.1" width="1" height="9.9" fill="#b8f0f4" opacity="0.3"/><rect x="210.4" y="8.4" width="1" height="6.6" fill="#b8f0f4" opacity="0.3"/></svg>
<svg style="left:3px;top:623px" width="212" height="16.6"><rect x="0.0" y="2.6" width="1" height="14.0" fill="#a8ecf4" opacity="0.3"/><rect x="3.7" y="2.6" width="1" height="14.0" fill="#a8ecf4" opacity="0.3"/><rect x="7.7" y="5.3" width="1" height="11.3" fill="#f8c0e8" opacity="0.3"/><rect x="11.8" y="1.0" width="1" height="15.6" fill="#a8ecf4" opacity="0.3"/><rect x="13.9" y="7.5" width="1" height="9.1" fill="#f8c0e8" opacity="0.3"/><rect x="17.0" y="9.8" width="1" height="6.8" fill="#a8ecf4" opacity="0.3"/><rect x="19.3" y="0.8" width="1" height="15.8" fill="#f8c0e8" opacity="0.3"/><rect x="22.9" y="2.0" width="1" height="14.6" fill="#f8c0e8" opacity="0.3"/><rect x="25.1" y="8.7" width="1" height="7.9" fill="#a8ecf4" opacity="0.3"/><rect x="26.9" y="7.9" width="1" height="8.7" fill="#a8ecf4" opacity="0.3"/><rect x="29.2" y="1.3" width="1" height="15.3" fill="#a8ecf4" opacity="0.3"/><rect x="31.7" y="4.6" width="1" height="12.0" fill="#a8ecf4" opacity="0.3"/><rect x="35.1" y="0.6" width="1" height="16.0" fill="#f8c0e8" opacity="0.3"/><rect x="38.6" y="1.1" width="1" height="15.5" fill="#a8ecf4" opacity="0.3"/><rect x="41.1" y="8.3" width="1" height="8.3" fill="#f8c0e8" opacity="0.3"/><rect x="43.2" y="7.0" width="1" height="9.6" fill="#f8c0e8" opacity="0.3"/><rect x="46.5" y="3.2" width="1" height="13.4" fill="#f8c0e8" opacity="0.3"/><rect x="49.1" y="1.8" width="1" height="14.8" fill="#f8c0e8" opacity="0.3"/><rect x="52.0" y="5.2" width="1" height="11.4" fill="#f8c0e8" opacity="0.3"/><rect x="55.5" y="0.2" width="1" height="16.4" fill="#f8c0e8" opacity="0.3"/><rect x="57.4" y="1.5" width="1" height="15.1" fill="#a8ecf4" opacity="0.3"/><rect x="59.2" y="6.3" width="1" height="10.3" fill="#a8ecf4" opacity="0.3"/><rect x="62.4" y="9.5" width="1" height="7.1" fill="#f8c0e8" opacity="0.3"/><rect x="64.6" y="8.0" width="1" height="8.6" fill="#a8ecf4" opacity="0.3"/><rect x="68.3" y="0.6" width="1" height="16.0" fill="#a8ecf4" opacity="0.3"/><rect x="70.9" y="4.7" width="1" height="11.9" fill="#f8c0e8" opacity="0.3"/><rect x="74.5" y="2.5" width="1" height="14.1" fill="#f8c0e8" opacity="0.3"/><rect x="78.3" y="9.6" width="1" height="7.0" fill="#a8ecf4" opacity="0.3"/><rect x="82.3" y="6.6" width="1" height="10.0" fill="#f8c0e8" opacity="0.3"/><rect x="85.6" y="6.6" width="1" height="10.0" fill="#a8ecf4" opacity="0.3"/><rect x="89.6" y="6.8" width="1" height="9.8" fill="#a8ecf4" opacity="0.3"/><rect x="92.2" y="9.2" width="1" height="7.4" fill="#f8c0e8" opacity="0.3"/><rect x="94.3" y="0.0" width="1" height="16.6" fill="#a8ecf4" opacity="0.3"/><rect x="96.5" y="0.1" width="1" height="16.5" fill="#f8c0e8" opacity="0.3"/><rect x="99.6" y="7.6" width="1" height="9.0" fill="#f8c0e8" opacity="0.3"/><rect x="102.8" y="5.4" width="1" height="11.2" fill="#a8ecf4" opacity="0.3"/><rect x="105.6" y="0.8" width="1" height="15.8" fill="#f8c0e8" opacity="0.3"/><rect x="107.5" y="1.6" width="1" height="15.0" fill="#f8c0e8" opacity="0.3"/><rect x="109.6" y="0.5" width="1" height="16.1" fill="#a8ecf4" opacity="0.3"/><rect x="112.9" y="8.9" width="1" height="7.7" fill="#a8ecf4" opacity="0.3"/><rect x="115.8" y="1.5" width="1" height="15.1" fill="#f8c0e8" opacity="0.3"/><rect x="118.3" y="0.0" width="1" height="16.6" fill="#f8c0e8" opacity="0.3"/><rect x="122.1" y="5.4" width="1" height="11.2" fill="#a8ecf4" opacity="0.3"/><rect x="125.1" y="5.2" width="1" height="11.4" fill="#a8ecf4" opacity="0.3"/><rect x="127.6" y="8.5" width="1" height="8.1" fill="#f8c0e8" opacity="0.3"/><rect x="130.3" y="0.4" width="1" height="16.2" fill="#a8ecf4" opacity="0.3"/><rect x="133.6" y="6.6" width="1" height="10.0" fill="#f8c0e8" opacity="0.3"/><rect x="135.6" y="2.2" width="1" height="14.4" fill="#f8c0e8" opacity="0.3"/><rect x="139.5" y="2.1" width="1" height="14.5" fill="#f8c0e8" opacity="0.3"/><rect x="143.2" y="3.3" width="1" height="13.3" fill="#a8ecf4" opacity="0.3"/><rect x="146.8" y="2.9" width="1" height="13.7" fill="#f8c0e8" opacity="0.3"/><rect x="149.3" y="2.3" width="1" height="14.3" fill="#f8c0e8" opacity="0.3"/><rect x="152.7" y="0.5" width="1" height="16.1" fill="#f8c0e8" opacity="0.3"/><rect x="156.1" y="9.8" width="1" height="6.8" fill="#a8ecf4" opacity="0.3"/><rect x="159.2" y="3.3" width="1" height="13.3" fill="#f8c0e8" opacity="0.3"/><rect x="162.1" y="3.5" width="1" height="13.1" fill="#a8ecf4" opacity="0.3"/><rect x="165.8" y="3.5" width="1" height="13.1" fill="#f8c0e8" opacity="0.3"/><rect x="169.4" y="6.5" width="1" height="10.1" fill="#a8ecf4" opacity="0.3"/><rect x="173.2" y="3.1" width="1" height="13.5" fill="#a8ecf4" opacity="0.3"/><rect x="177.4" y="4.8" width="1" height="11.8" fill="#a8ecf4" opacity="0.3"/><rect x="180.4" y="1.6" width="1" height="15.0" fill="#f8c0e8" opacity="0.3"/><rect x="184.5" y="3.1" width="1" height="13.5" fill="#f8c0e8" opacity="0.3"/><rect x="188.0" y="8.2" width="1" height="8.4" fill="#a8ecf4" opacity="0.3"/><rect x="191.7" y="3.3" width="1" height="13.3" fill="#a8ecf4" opacity="0.3"/><rect x="194.5" y="2.2" width="1" height="14.4" fill="#a8ecf4" opacity="0.3"/><rect x="197.8" y="9.7" width="1" height="6.9" fill="#a8ecf4" opacity="0.3"/><rect x="200.0" y="3.5" width="1" height="13.1" fill="#f8c0e8" opacity="0.3"/><rect x="202.3" y="3.7" width="1" height="12.9" fill="#a8ecf4" opacity="0.3"/><rect x="204.2" y="7.7" width="1" height="8.9" fill="#f8c0e8" opacity="0.3"/><rect x="206.2" y="6.8" width="1" height="9.8" fill="#f8c0e8" opacity="0.3"/><rect x="208.4" y="9.6" width="1" height="7.0" fill="#f8c0e8" opacity="0.3"/><rect x="211.3" y="3.9" width="1" height="12.7" fill="#f8c0e8" opacity="0.3"/></svg>
<svg style="left:145px;top:272px" width="25" height="30"><rect x="0.0" y="3.2" width="1" height="26.8" fill="#c8f0f0" opacity="0.25"/><rect x="4.0" y="18.0" width="1" height="12.0" fill="#f4b0d8" opacity="0.25"/><rect x="8.5" y="4.3" width="1" height="25.7" fill="#f4b0d8" opacity="0.25"/><rect x="12.1" y="13.1" width="1" height="16.9" fill="#c8f0f0" opacity="0.25"/><rect x="17.0" y="10.5" width="1" height="19.5" fill="#c8f0f0" opacity="0.25"/><rect x="21.2" y="14.5" width="1" height="15.5" fill="#c8f0f0" opacity="0.25"/></svg>
<div class="b" style="left:429px;top:495px;width:74px;height:14px;background:#fde0ec;opacity:0.5"></div>
<div class="b" style="left:429px;top:510px;width:74px;height:5px;background:#d0f8f4;opacity:0.6"></div>
<div class="b" style="left:429px;top:530px;width:74px;height:5px;background:#d0f8f4;opacity:0.6"></div>
<div class="b" style="left:429px;top:537px;width:74px;height:7px;background:#fde0ec;opacity:0.5"></div>
<div class="t" style="left:31px;top:59.3px;font-size:7.1px;color:#333;">Trace1</div>
<svg style="left:24px;top:60px" width="6" height="4"><path d="M0 0 H6 L3 3.5 Z" fill="#8a8a9a"/></svg>
<div class="b" style="left:65px;top:58px;width:8px;height:8px;border:1px solid #7a8ac8;background:linear-gradient(#f4f6ff,#d8def4)"></div>
<svg style="left:66px;top:59px" width="6" height="6"><path d="M0.8 3 L2.5 4.8 L5.5 1" fill="none" stroke="#3a4a9a" stroke-width="1"/></svg>
<div class="t" style="left:74.5px;top:59.3px;font-size:7.1px;color:#333;">Show</div>
<div class="t" style="left:97px;top:59.3px;font-size:7.1px;color:#333;">Points</div>
<div class="t" style="left:8px;top:141px;font-size:7.2px;color:#333;">Freq Error: -602.3 Hz, Auto</div>
<div class="b" style="left:2px;top:238px;width:423px;height:1px;background:#e4e4e4"></div>
<div class="t" style="left:6.5px;top:239px;font-size:6.6px;color:#444;">RMS:</div>
<div class="t" style="left:24px;top:239px;font-size:6.6px;color:#444;">0.349 %</div>
<div class="t" style="left:63px;top:239px;font-size:6.6px;color:#444;">Peak EVM:</div>
<div class="t" style="left:96px;top:239px;font-size:6.6px;color:#444;">0.914 %</div>
<div class="t" style="left:130.5px;top:239px;font-size:6.6px;color:#444;">@</div>
<div class="t" style="left:141px;top:239px;font-size:6.6px;color:#444;">21.00 Symbol</div>
<svg style="left:254px;top:69px" width="165" height="164.5"><rect width="165" height="164.5" fill="#000"/><rect x="43.80000000000001" y="43.7" width="77.89999999999998" height="77.89999999999999" fill="#1c0208"/><rect x="43.05000000000001" y="37" width="1.5" height="90.80000000000001" fill="#9c84a4"/><rect x="54.14999999999998" y="37" width="1.5" height="90.80000000000001" fill="#8c8894"/><rect x="65.44999999999999" y="37" width="1.5" height="90.80000000000001" fill="#9c84a4"/><rect x="76.55000000000001" y="37" width="1.5" height="90.80000000000001" fill="#9c84a4"/><rect x="87.55000000000001" y="37" width="1.5" height="90.80000000000001" fill="#8c8894"/><rect x="98.64999999999998" y="37" width="1.5" height="90.80000000000001" fill="#9c84a4"/><rect x="109.94999999999999" y="37" width="1.5" height="90.80000000000001" fill="#9c84a4"/><rect x="120.94999999999999" y="37" width="1.5" height="90.80000000000001" fill="#8c8894"/><rect x="37.39999999999998" y="42.95" width="90.0" height="1.5" fill="#9c84a4"/><rect x="37.39999999999998" y="54.05" width="90.0" height="1.5" fill="#9c84a4"/><rect x="37.39999999999998" y="65.25" width="90.0" height="1.5" fill="#9c84a4"/><rect x="37.39999999999998" y="76.25" width="90.0" height="1.5" fill="#9c84a4"/><rect x="37.39999999999998" y="87.44999999999999" width="90.0" height="1.5" fill="#9c84a4"/><rect x="37.39999999999998" y="98.44999999999999" width="90.0" height="1.5" fill="#9c84a4"/><rect x="37.39999999999998" y="109.75" width="90.0" height="1.5" fill="#9c84a4"/><rect x="37.39999999999998" y="120.85" width="90.0" height="1.5" fill="#9c84a4"/><circle cx="43.80000000000001" cy="155.5" r="1.15" fill="#d01818"/><circle cx="43.80000000000001" cy="137.5" r="0.7" fill="#501010"/><circle cx="54.89999999999998" cy="155.5" r="1.15" fill="#d01818"/><circle cx="54.89999999999998" cy="137.5" r="0.7" fill="#501010"/><circle cx="66.19999999999999" cy="155.5" r="1.15" fill="#d01818"/><circle cx="66.19999999999999" cy="137.5" r="0.7" fill="#501010"/><circle cx="77.30000000000001" cy="155.5" r="1.15" fill="#d01818"/><circle cx="77.30000000000001" cy="137.5" r="0.7" fill="#501010"/><circle cx="88.30000000000001" cy="155.5" r="1.15" fill="#d01818"/><circle cx="88.30000000000001" cy="137.5" r="0.7" fill="#501010"/><circle cx="99.39999999999998" cy="155.5" r="1.15" fill="#d01818"/><circle cx="99.39999999999998" cy="137.5" r="0.7" fill="#501010"/><circle cx="110.69999999999999" cy="155.5" r="1.15" fill="#d01818"/><circle cx="110.69999999999999" cy="137.5" r="0.7" fill="#501010"/><circle cx="121.69999999999999" cy="155.5" r="1.15" fill="#d01818"/><circle cx="121.69999999999999" cy="137.5" r="0.7" fill="#501010"/></svg>
<div class="t" style="left:31px;top:267.3px;font-size:7.1px;color:#333;">Trace1</div>
<svg style="left:24px;top:268px" width="6" height="4"><path d="M0 0 H6 L3 3.5 Z" fill="#8a8a9a"/></svg>
<div class="b" style="left:65px;top:266px;width:8px;height:8px;border:1px solid #7a8ac8;background:linear-gradient(#f4f6ff,#d8def4)"></div>
<svg style="left:66px;top:267px" width="6" height="6"><path d="M0.8 3 L2.5 4.8 L5.5 1" fill="none" stroke="#3a4a9a" stroke-width="1"/></svg>
<div class="t" style="left:74.5px;top:267.3px;font-size:7.1px;color:#333;">Show</div>
<div class="t" style="left:97px;top:267.3px;font-size:7.1px;color:#333;">Points</div>
<div class="t" style="left:8px;top:349px;font-size:7.2px;color:#333;">Freq Error: -487.7 Hz, Auto</div>
<div class="b" style="left:2px;top:446px;width:423px;height:1px;background:#e4e4e4"></div>
<div class="t" style="left:6.5px;top:447px;font-size:6.6px;color:#444;">RMS:</div>
<div class="t" style="left:24px;top:447px;font-size:6.6px;color:#444;">0.581 %</div>
<div class="t" style="left:63px;top:447px;font-size:6.6px;color:#444;">Peak EVM:</div>
<div class="t" style="left:96px;top:447px;font-size:6.6px;color:#444;">1.218 %</div>
<div class="t" style="left:130.5px;top:447px;font-size:6.6px;color:#444;">@</div>
<div class="t" style="left:141px;top:447px;font-size:6.6px;color:#444;">219.00 Symbol</div>
<svg style="left:254px;top:277px" width="165" height="164.5"><rect width="165" height="164.5" fill="#000"/><circle cx="43.80000000000001" cy="12.699999999999989" r="1.15" fill="#c81414"/><circle cx="43.80000000000001" cy="24" r="1.15" fill="#c81414"/><circle cx="43.80000000000001" cy="50" r="1.15" fill="#c81414"/><circle cx="43.80000000000001" cy="77" r="1.15" fill="#c81414"/><circle cx="43.80000000000001" cy="89" r="1.15" fill="#c81414"/><circle cx="54.89999999999998" cy="12.699999999999989" r="1.15" fill="#c81414"/><circle cx="54.89999999999998" cy="24" r="1.15" fill="#c81414"/><circle cx="54.89999999999998" cy="50" r="1.15" fill="#c81414"/><circle cx="54.89999999999998" cy="77" r="1.15" fill="#c81414"/><circle cx="54.89999999999998" cy="89" r="1.15" fill="#c81414"/><circle cx="66.19999999999999" cy="12.699999999999989" r="1.15" fill="#c81414"/><circle cx="66.19999999999999" cy="24" r="1.15" fill="#c81414"/><circle cx="66.19999999999999" cy="50" r="1.15" fill="#c81414"/><circle cx="66.19999999999999" cy="77" r="1.15" fill="#c81414"/><circle cx="66.19999999999999" cy="89" r="1.15" fill="#c81414"/><circle cx="77.30000000000001" cy="12.699999999999989" r="1.15" fill="#c81414"/><circle cx="77.30000000000001" cy="24" r="1.15" fill="#c81414"/><circle cx="77.30000000000001" cy="50" r="1.15" fill="#c81414"/><circle cx="77.30000000000001" cy="77" r="1.15" fill="#c81414"/><circle cx="77.30000000000001" cy="89" r="1.15" fill="#c81414"/><circle cx="88.30000000000001" cy="12.699999999999989" r="1.15" fill="#c81414"/><circle cx="88.30000000000001" cy="24" r="1.15" fill="#c81414"/><circle cx="88.30000000000001" cy="50" r="1.15" fill="#c81414"/><circle cx="88.30000000000001" cy="77" r="1.15" fill="#c81414"/><circle cx="88.30000000000001" cy="89" r="1.15" fill="#c81414"/><circle cx="99.39999999999998" cy="12.699999999999989" r="1.15" fill="#c81414"/><circle cx="99.39999999999998" cy="24" r="1.15" fill="#c81414"/><circle cx="99.39999999999998" cy="50" r="1.15" fill="#c81414"/><circle cx="99.39999999999998" cy="77" r="1.15" fill="#c81414"/><circle cx="99.39999999999998" cy="89" r="1.15" fill="#c81414"/><circle cx="110.69999999999999" cy="12.699999999999989" r="1.15" fill="#c81414"/><circle cx="110.69999999999999" cy="24" r="1.15" fill="#c81414"/><circle cx="110.69999999999999" cy="50" r="1.15" fill="#c81414"/><circle cx="110.69999999999999" cy="77" r="1.15" fill="#c81414"/><circle cx="110.69999999999999" cy="89" r="1.15" fill="#c81414"/><circle cx="121.69999999999999" cy="12.699999999999989" r="1.15" fill="#c81414"/><circle cx="121.69999999999999" cy="24" r="1.15" fill="#c81414"/><circle cx="121.69999999999999" cy="50" r="1.15" fill="#c81414"/><circle cx="121.69999999999999" cy="77" r="1.15" fill="#c81414"/><circle cx="121.69999999999999" cy="89" r="1.15" fill="#c81414"/><path d="M37.30000000000001 43.60000000000002 h12 M43.30000000000001 37.60000000000002 v12" stroke="#a088b0" stroke-width="1.4"/><path d="M37.30000000000001 69.39999999999998 h12 M43.30000000000001 63.39999999999998 v12" stroke="#a088b0" stroke-width="1.4"/><path d="M37.30000000000001 95 h12 M43.30000000000001 89 v12" stroke="#a088b0" stroke-width="1.4"/><path d="M37.30000000000001 120.80000000000001 h12 M43.30000000000001 114.80000000000001 v12" stroke="#a088b0" stroke-width="1.4"/><path d="M64.19999999999999 43.60000000000002 h12 M70.19999999999999 37.60000000000002 v12" stroke="#a088b0" stroke-width="1.4"/><path d="M64.19999999999999 69.39999999999998 h12 M70.19999999999999 63.39999999999998 v12" stroke="#a088b0" stroke-width="1.4"/><path d="M64.19999999999999 95 h12 M70.19999999999999 89 v12" stroke="#a088b0" stroke-width="1.4"/><path d="M64.19999999999999 120.80000000000001 h12 M70.19999999999999 114.80000000000001 v12" stroke="#a088b0" stroke-width="1.4"/><path d="M89.30000000000001 43.60000000000002 h12 M95.30000000000001 37.60000000000002 v12" stroke="#a088b0" stroke-width="1.4"/><path d="M89.30000000000001 69.39999999999998 h12 M95.30000000000001 63.39999999999998 v12" stroke="#a088b0" stroke-width="1.4"/><path d="M89.30000000000001 95 h12 M95.30000000000001 89 v12" stroke="#a088b0" stroke-width="1.4"/><path d="M89.30000000000001 120.80000000000001 h12 M95.30000000000001 114.80000000000001 v12" stroke="#a088b0" stroke-width="1.4"/><path d="M115.5 43.60000000000002 h12 M121.5 37.60000000000002 v12" stroke="#a088b0" stroke-width="1.4"/><path d="M115.5 69.39999999999998 h12 M121.5 63.39999999999998 v12" stroke="#a088b0" stroke-width="1.4"/><path d="M115.5 95 h12 M121.5 89 v12" stroke="#a088b0" stroke-width="1.4"/><path d="M115.5 120.80000000000001 h12 M121.5 114.80000000000001 v12" stroke="#a088b0" stroke-width="1.4"/></svg>
<div class="t" style="left:31px;top:475.3px;font-size:7.1px;color:#333;">Trace1</div>
<svg style="left:24px;top:476px" width="6" height="4"><path d="M0 0 H6 L3 3.5 Z" fill="#8a8a9a"/></svg>
<div class="b" style="left:65px;top:474px;width:8px;height:8px;border:1px solid #7a8ac8;background:linear-gradient(#f4f6ff,#d8def4)"></div>
<svg style="left:66px;top:475px" width="6" height="6"><path d="M0.8 3 L2.5 4.8 L5.5 1" fill="none" stroke="#3a4a9a" stroke-width="1"/></svg>
<div class="t" style="left:74.5px;top:475.3px;font-size:7.1px;color:#333;">Show</div>
<div class="t" style="left:97px;top:475.3px;font-size:7.1px;color:#333;">Points</div>
<div class="t" style="left:8px;top:557px;font-size:7.2px;color:#333;">Freq Error: -79.10 kHz, Auto</div>
<div class="b" style="left:2px;top:654px;width:423px;height:1px;background:#e4e4e4"></div>
<div class="t" style="left:6.5px;top:655px;font-size:6.6px;color:#444;">RMS:</div>
<div class="t" style="left:24px;top:655px;font-size:6.6px;color:#444;">0.503 %</div>
<div class="t" style="left:63px;top:655px;font-size:6.6px;color:#444;">Peak EVM:</div>
<div class="t" style="left:96px;top:655px;font-size:6.6px;color:#444;">1.460 %</div>
<div class="t" style="left:130.5px;top:655px;font-size:6.6px;color:#444;">@</div>
<div class="t" style="left:141px;top:655px;font-size:6.6px;color:#444;">630.00 Symbol</div>
<svg style="left:254px;top:485px" width="165" height="164.5"><rect width="165" height="164.5" fill="#000"/><path d="M37.39999999999998 42.799999999999955 h12 M43.39999999999998 36.799999999999955 v12" stroke="#9890b0" stroke-width="1.4"/><path d="M37.39999999999998 120.5 h12 M43.39999999999998 114.5 v12" stroke="#9890b0" stroke-width="1.4"/><path d="M115.39999999999998 42.799999999999955 h12 M121.39999999999998 36.799999999999955 v12" stroke="#9890b0" stroke-width="1.4"/><path d="M115.39999999999998 120.5 h12 M121.39999999999998 114.5 v12" stroke="#9890b0" stroke-width="1.4"/><circle cx="43.39999999999998" cy="138" r="1.15" fill="#c81414"/><circle cx="43.39999999999998" cy="155.5" r="1.15" fill="#c81414"/><circle cx="69.60000000000002" cy="138" r="1.15" fill="#c81414"/><circle cx="69.60000000000002" cy="155.5" r="1.15" fill="#c81414"/><circle cx="96" cy="138" r="1.15" fill="#c81414"/><circle cx="96" cy="155.5" r="1.15" fill="#c81414"/><circle cx="121.39999999999998" cy="138" r="1.15" fill="#c81414"/><circle cx="121.39999999999998" cy="155.5" r="1.15" fill="#c81414"/></svg>
<div class="t" style="left:432px;top:59px;font-size:7.4px;color:#333;">Time:</div>
<div class="b" style="left:431px;top:67.5px;width:42px;height:9.5px;background:#fff;border:1px solid #c8c8d0"></div>
<div class="t" style="left:434px;top:68.3px;font-size:7.4px;color:#333;">Linked</div>
<div class="b" style="left:465px;top:68.5px;width:7.5px;height:7.5px;border:1px solid #8a9ad0;background:#e4e8f8"></div>
<svg style="left:466.5px;top:71px" width="5" height="3"><path d="M0.3 0.3 L2.5 2.6 L4.7 0.3" fill="none" stroke="#3a4a8a" stroke-width="0.9"/></svg>
<div class="t" style="left:431px;top:87px;font-size:7.4px;color:#333;">Offset:</div>
<div class="b" style="left:431px;top:94.5px;width:40px;height:10px;background:#fff;border:1px solid #c8c8d0"></div>
<div class="t" style="left:434px;top:95.5px;font-size:7.4px;color:#333;">99.699 us</div>
<div class="t" style="left:431px;top:109px;font-size:7.4px;color:#333;">Length:</div>
<div class="b" style="left:431px;top:115.5px;width:40px;height:10px;background:#fff;border:1px solid #c8c8d0"></div>
<div class="t" style="left:434px;top:116.5px;font-size:7.4px;color:#333;font-style:italic;">8.192 us</div>
<svg style="left:431px;top:148.5px" width="5" height="4"><path d="M0 2 L2.5 0 L5 2 L2.5 4Z" fill="#555"/></svg>
<div class="t" style="left:436px;top:142.5px;font-size:7.4px;color:#333;">dB/div:</div>
<div class="t" style="left:438px;top:150px;font-size:7.4px;color:#333;">10.0 dB</div>
<div class="b" style="left:431px;top:237.5px;width:36px;height:11px;border:1px solid #8088b8;background:linear-gradient(#fbfdfd,#e4eae8);border-radius:1px"></div>
<div class="t" style="left:435.5px;top:240px;font-size:7.2px;color:#222;">Autoscale</div>
<div class="t tr" style="left:440px;top:60.0px;width:57px;text-align:right;font-size:7.4px;color:#333">0.0</div>
<div class="b" style="left:499px;top:62.7px;width:2.5px;height:0.8px;background:#777"></div>
<div class="t tr" style="left:440px;top:94.1px;width:57px;text-align:right;font-size:7.4px;color:#333">-20.0</div>
<div class="b" style="left:499px;top:96.8px;width:2.5px;height:0.8px;background:#777"></div>
<div class="t tr" style="left:440px;top:128.2px;width:57px;text-align:right;font-size:7.4px;color:#333">-40.0</div>
<div class="b" style="left:499px;top:130.89999999999998px;width:2.5px;height:0.8px;background:#777"></div>
<div class="t tr" style="left:440px;top:162.3px;width:57px;text-align:right;font-size:7.4px;color:#333">-60.0</div>
<div class="b" style="left:499px;top:165.0px;width:2.5px;height:0.8px;background:#777"></div>
<div class="t tr" style="left:440px;top:196.4px;width:57px;text-align:right;font-size:7.4px;color:#333">-80.0</div>
<div class="b" style="left:499px;top:199.1px;width:2.5px;height:0.8px;background:#777"></div>
<div class="t tr" style="left:440px;top:230.5px;width:57px;text-align:right;font-size:7.4px;color:#333">-100.0</div>
<div class="b" style="left:499px;top:233.2px;width:2.5px;height:0.8px;background:#777"></div>
<svg style="left:503px;top:242px" width="5" height="4"><path d="M0 2 L2.5 0 L5 2 L2.5 4Z" fill="#555"/></svg>
<div class="t" style="left:511px;top:241.5px;font-size:7.4px;color:#333;">Position:</div>
<div class="t" style="left:537px;top:241.5px;font-size:7.4px;color:#333;">-1.573 us</div>
<svg style="left:784px;top:242px" width="5" height="4"><path d="M0 2 L2.5 0 L5 2 L2.5 4Z" fill="#555"/></svg>
<div class="t" style="left:792px;top:241.5px;font-size:7.4px;color:#333;">Scale:</div>
<div class="t" style="left:815px;top:241.5px;font-size:7.4px;color:#333;">124.421 us</div>
<div class="t" style="left:506px;top:233px;font-size:5px;color:#555;">T</div>
<svg style="left:504px;top:63px" width="342" height="168.7"><rect width="342" height="168.7" fill="#474747"/><path d="M34.50 0V168.7M0 16.50H342M68.50 0V168.7M0 33.50H342M102.50 0V168.7M0 50.50H342M136.50 0V168.7M0 67.50H342M171.50 0V168.7M0 84.50H342M205.50 0V168.7M0 101.50H342M239.50 0V168.7M0 118.50H342M273.50 0V168.7M0 134.50H342M307.50 0V168.7M0 151.50H342" stroke="#7a7a7a" stroke-width="0.9" opacity="0.55"/><rect x="0" y="0.00" width="342" height="5.40" fill="#5a4650"/><rect x="0" y="5.40" width="342" height="11.47" fill="#786266"/><rect x="0" y="16.87" width="342" height="16.87" fill="#84585f"/><rect x="0" y="33.74" width="342" height="18.56" fill="#5e5258"/><rect x="272" y="0" width="32" height="50.60999999999999" fill="#7a4a56" opacity="0.7"/><path d="M0.0 2.4V6.2M3.3 2.5V5.9M6.0 1.0V4.5M8.8 4.3V4.9M10.9 0.5V6.0M13.8 0.2V6.9M17.2 3.5V7.7M19.0 0.1V3.6M20.6 1.0V2.7M22.2 2.5V5.5M25.4 2.8V7.1M27.9 3.6V6.7M29.9 5.4V12.1M33.1 3.8V5.9M35.1 1.6V2.0M38.1 2.2V7.9M40.4 5.2V10.9M41.9 1.1V7.3M44.3 5.3V8.0M46.0 3.4V8.7M48.0 0.5V2.7M51.4 4.1V4.9M53.4 0.5V0.9M56.5 1.0V4.7M58.9 1.0V6.0M60.7 3.5V4.3M63.0 1.1V3.0M66.5 4.3V6.4M69.7 1.1V3.8M72.9 3.5V4.1M76.4 1.2V2.9M79.5 1.8V3.8M81.1 0.5V4.4M83.1 3.2V5.8M85.5 5.2V8.4M88.2 4.7V5.9M90.0 4.9V10.4M92.0 1.0V6.0M95.3 1.1V7.5M98.6 3.3V6.1M100.3 0.2V6.7M102.3 3.8V5.5M105.4 3.2V5.2M107.3 3.9V4.4M109.3 3.0V8.8M112.0 1.5V7.7M113.9 0.1V1.9M116.3 0.3V1.5M118.5 3.1V4.0M120.7 4.8V11.4M123.6 3.7V7.7M125.3 0.2V0.3M128.7 3.8V10.3M130.2 3.4V6.7M133.2 1.7V8.5M134.8 2.9V7.9M138.1 4.0V8.7M141.2 4.9V7.3M144.1 4.9V10.7M146.4 4.3V10.1M149.0 3.4V6.0M151.7 3.3V3.8M154.5 5.4V11.3M157.4 2.1V7.1M160.1 2.4V8.0M161.8 4.0V4.3M164.5 2.6V4.1M167.4 2.7V6.8M170.7 1.4V1.5M172.8 3.7V5.0M174.7 4.9V9.3M177.0 4.8V7.0M179.9 1.1V4.0M183.0 4.9V10.9M185.3 3.1V5.3M187.0 2.7V8.3M190.2 3.8V10.3M192.3 0.9V4.0M194.3 1.2V3.9M197.1 2.7V4.8M200.3 5.3V8.4M201.9 0.2V6.1M203.5 3.8V7.7M205.6 4.3V4.4M207.4 2.5V2.6M210.5 1.3V2.2M212.1 3.4V6.4M214.9 3.5V9.0M218.3 3.7V5.0M220.8 1.0V1.0M223.2 3.9V5.1M225.3 1.9V6.6M227.8 3.3V8.4M230.1 4.3V10.4M231.8 5.0V9.9M233.5 2.4V6.7M236.8 2.0V5.9M240.1 4.3V10.7M242.5 3.5V4.9M245.5 4.4V8.7M248.4 1.2V7.2M251.9 5.3V8.9M254.9 1.7V7.9M258.2 1.9V2.4M260.5 3.0V8.2M263.0 0.2V5.6M264.6 4.3V5.5M266.8 4.3V5.2M268.6 2.8V7.7M271.8 3.7V10.1M274.3 5.1V5.7M276.2 2.8V4.8M279.2 3.4V7.0M282.4 3.0V5.1M284.6 4.6V10.6M286.5 4.6V11.1M289.1 3.1V4.4M291.7 2.7V6.8M293.2 5.2V8.7M295.5 4.3V8.1M298.0 3.7V4.2M300.6 2.2V8.7M303.9 1.5V4.6M305.7 2.3V7.8M309.0 2.6V4.7M310.9 3.3V9.6M312.6 4.2V4.4M314.5 1.2V5.9M316.6 1.9V6.1M318.4 3.9V4.8M320.9 1.4V2.7M323.4 2.4V4.9M325.8 2.9V3.9M327.7 3.4V7.7M330.2 4.6V8.7M333.4 1.3V6.3M336.6 4.9V7.0M338.7 5.0V6.5" stroke="#8a7078" stroke-width="0.8" opacity="0.5"/><path d="M0.0 11.4V35.4M1.9 7.0V35.4M5.3 7.1V35.4M7.1 11.0V35.4M9.7 10.7V35.4M11.6 8.1V35.4M14.9 5.5V35.4M16.9 10.0V35.4M20.7 11.9V35.4M22.6 8.8V35.4M26.0 8.8V35.4M29.3 6.7V35.4M31.0 6.1V35.4M32.7 9.1V35.4M35.6 9.2V35.4M37.5 6.6V35.4M39.6 11.1V35.4M43.6 11.7V35.4M45.4 5.8V35.4M49.3 8.5V35.4M52.7 7.6V35.4M55.4 8.9V35.4M58.1 9.5V35.4M59.7 10.1V35.4M63.3 6.6V35.4M66.0 10.4V35.4M68.6 6.7V35.4M70.6 8.9V35.4M72.2 11.4V35.4M75.8 10.2V35.4M79.4 9.6V35.4M82.0 9.4V35.4M84.8 12.0V35.4M88.3 7.1V35.4M92.1 10.4V35.4M95.6 10.9V35.4M98.2 11.4V35.4M101.9 10.1V35.4M105.3 10.6V35.4M107.9 10.3V35.4M109.7 7.7V35.4M112.4 5.5V35.4M114.8 9.7V35.4M117.9 7.0V35.4M121.8 9.9V35.4M124.2 9.9V35.4M127.2 9.0V35.4M129.7 12.1V35.4M132.9 10.1V35.4M136.3 12.0V35.4M137.9 9.6V35.4M141.3 7.1V35.4M143.9 5.7V35.4M145.9 7.9V35.4M147.8 7.1V35.4M151.6 9.1V35.4M154.4 11.9V35.4M157.3 12.1V35.4M160.5 10.9V35.4M162.3 9.4V35.4M165.7 5.7V35.4M169.5 6.5V35.4M172.2 6.5V35.4M175.0 9.5V35.4M176.8 11.8V35.4M179.4 9.0V35.4M182.4 7.9V35.4M184.7 9.8V35.4M187.6 7.3V35.4M191.0 7.4V35.4M192.6 7.1V35.4M194.3 6.5V35.4M197.7 8.0V35.4M201.5 10.4V35.4M203.2 12.1V35.4M207.1 5.9V35.4M210.8 8.3V35.4M213.6 12.0V35.4M215.8 8.9V35.4M219.6 10.3V35.4M222.3 12.0V35.4M225.9 9.5V35.4M227.8 9.6V35.4M230.5 6.8V35.4M232.2 9.0V35.4M234.1 8.4V35.4M237.3 8.5V35.4M239.5 9.3V35.4M242.1 10.6V35.4M245.0 12.1V35.4M248.9 10.4V35.4M251.1 6.2V35.4M254.8 10.7V35.4M257.9 7.8V35.4M260.2 10.0V35.4M263.1 9.4V35.4M266.2 10.5V35.4M268.3 7.1V35.4M272.2 11.6V35.4M275.9 5.7V35.4M277.7 7.2V35.4M280.3 9.6V35.4M282.2 9.1V35.4M283.9 6.0V35.4M287.2 9.1V35.4M290.3 7.9V35.4M293.0 6.8V35.4M295.4 10.4V35.4M299.1 5.9V35.4M300.9 10.9V35.4M304.0 10.6V35.4M306.1 8.3V35.4M308.4 10.9V35.4M310.9 9.8V35.4M314.8 7.6V35.4M317.7 10.4V35.4M321.6 8.3V35.4M324.0 6.1V35.4M327.7 5.9V35.4M329.5 9.2V35.4M332.3 10.0V35.4M334.6 10.6V35.4M336.4 6.8V35.4M339.6 5.9V35.4M341.9 10.3V35.4" stroke="#a08088" stroke-width="0.7" opacity="0.35"/><path d="M0.0 30.4V39.3M2.0 30.4V40.5M3.8 30.4V47.9M6.0 30.4V41.6M7.4 30.4V39.8M9.6 30.4V47.6M11.2 30.4V40.5M12.7 30.4V40.9M14.8 30.4V43.0M16.6 30.4V37.5M18.7 30.4V39.2M20.5 30.4V43.4M22.4 30.4V46.5M24.4 30.4V35.8M26.6 30.4V35.8M27.9 30.4V45.7M29.3 30.4V38.3M31.0 30.4V46.0M32.5 30.4V48.5M34.2 30.4V43.0M36.1 30.4V47.9M38.2 30.4V44.7M40.3 30.4V46.9M42.5 30.4V44.4M44.5 30.4V46.5M46.1 30.4V37.0M48.4 30.4V40.7M50.0 30.4V39.4M51.2 30.4V39.7M53.2 30.4V37.6M55.0 30.4V47.8M56.3 30.4V38.2M58.3 30.4V43.8M59.6 30.4V39.2M61.1 30.4V43.1M62.8 30.4V38.9M65.0 30.4V40.2M67.2 30.4V42.2M68.4 30.4V48.3M69.9 30.4V42.8M71.4 30.4V48.8M72.7 30.4V34.1M74.3 30.4V46.4M76.1 30.4V37.2M77.5 30.4V47.3M79.4 30.4V48.8M81.1 30.4V37.1M82.2 30.4V46.7M84.3 30.4V35.8M86.3 30.4V36.1M87.9 30.4V48.4M90.1 30.4V39.6M91.7 30.4V47.9M93.0 30.4V43.1M94.3 30.4V46.8M95.8 30.4V35.7M97.4 30.4V45.4M99.4 30.4V36.3M101.0 30.4V48.5M102.9 30.4V34.2M104.9 30.4V38.5M106.5 30.4V34.1M108.6 30.4V38.0M110.0 30.4V40.7M111.5 30.4V40.1M113.4 30.4V38.9M114.9 30.4V48.3M116.8 30.4V40.0M118.0 30.4V36.9M120.0 30.4V37.6M122.1 30.4V43.7M123.4 30.4V36.6M124.6 30.4V48.0M126.3 30.4V44.5M128.4 30.4V40.8M130.0 30.4V34.3M131.9 30.4V48.7M133.8 30.4V43.9M135.3 30.4V44.5M137.0 30.4V46.3M138.9 30.4V37.2M141.0 30.4V43.1M142.7 30.4V36.9M145.0 30.4V42.7M147.1 30.4V37.9M149.0 30.4V37.9M150.8 30.4V45.1M153.0 30.4V40.5M154.2 30.4V48.6M156.0 30.4V43.3M157.4 30.4V47.8M159.5 30.4V43.8M160.9 30.4V47.7M162.7 30.4V46.8M163.9 30.4V34.7M166.1 30.4V44.6M168.0 30.4V45.6M169.9 30.4V46.5M171.5 30.4V36.9M173.3 30.4V37.5M174.7 30.4V43.4M176.6 30.4V34.8M177.9 30.4V48.4M179.5 30.4V41.2M181.5 30.4V45.9M183.1 30.4V48.9M185.3 30.4V41.2M187.0 30.4V47.8M188.8 30.4V41.5M190.3 30.4V35.2M192.4 30.4V45.6M194.4 30.4V39.6M195.6 30.4V36.6M197.3 30.4V41.0M199.1 30.4V38.6M200.6 30.4V38.5M202.9 30.4V44.7M204.5 30.4V46.5M206.5 30.4V43.4M207.7 30.4V46.3M210.0 30.4V33.8M211.4 30.4V39.9M213.5 30.4V41.0M215.3 30.4V35.0M216.8 30.4V42.4M219.0 30.4V42.1M221.2 30.4V47.7M222.8 30.4V42.1M225.1 30.4V38.0M226.4 30.4V47.4M228.4 30.4V39.7M230.5 30.4V45.3M232.7 30.4V41.7M234.2 30.4V45.3M235.6 30.4V44.7M237.1 30.4V44.7M238.9 30.4V38.4M241.1 30.4V44.7M243.0 30.4V36.0M244.6 30.4V42.9M245.8 30.4V43.8M247.2 30.4V46.5M249.2 30.4V38.7M251.0 30.4V37.7M253.2 30.4V34.7M255.2 30.4V40.8M256.9 30.4V37.6M258.8 30.4V40.4M260.9 30.4V42.7M263.0 30.4V44.9M265.2 30.4V37.5M266.5 30.4V43.9M268.1 30.4V46.1M270.2 30.4V38.5M271.6 30.4V43.6M272.7 30.4V43.8M274.5 30.4V47.4M275.6 30.4V42.4M277.2 30.4V39.0M278.4 30.4V47.8M280.2 30.4V46.3M281.5 30.4V39.7M283.3 30.4V42.8M285.1 30.4V35.9M286.4 30.4V38.8M288.5 30.4V46.3M290.0 30.4V38.2M291.2 30.4V42.3M293.5 30.4V37.0M295.5 30.4V34.9M297.6 30.4V36.9M299.1 30.4V41.4M301.4 30.4V46.0M302.8 30.4V38.8M304.2 30.4V41.9M305.7 30.4V40.1M307.5 30.4V34.9M309.4 30.4V35.3M311.3 30.4V47.3M313.5 30.4V41.9M315.6 30.4V40.8M317.0 30.4V40.3M318.3 30.4V38.0M319.7 30.4V41.7M321.7 30.4V47.2M322.8 30.4V45.0M324.3 30.4V34.4M325.9 30.4V48.0M327.3 30.4V40.5M328.8 30.4V46.0M331.0 30.4V34.4M332.6 30.4V35.8M334.0 30.4V46.1M335.2 30.4V40.9M336.4 30.4V37.1M337.5 30.4V39.7M339.3 30.4V36.8M340.7 30.4V45.5M341.9 30.4V38.0" stroke="#907880" stroke-width="0.8" opacity="0.75"/><path d="M0.0 40.5V59.2M2.0 40.5V69.3M12.7 40.5V65.1M18.7 40.5V63.7M22.4 40.5V64.6M24.4 40.5V70.1M48.4 40.5V54.8M51.2 40.5V67.5M53.2 40.5V62.1M55.0 40.5V52.0M59.6 40.5V70.6M76.1 40.5V58.2M91.7 40.5V72.6M113.4 40.5V69.9M118.0 40.5V68.4M122.1 40.5V55.4M133.8 40.5V58.4M135.3 40.5V59.8M149.0 40.5V55.9M154.2 40.5V74.9M159.5 40.5V72.6M162.7 40.5V64.6M163.9 40.5V77.2M169.9 40.5V54.6M197.3 40.5V68.9M200.6 40.5V75.1M207.7 40.5V64.3M211.4 40.5V74.6M215.3 40.5V74.7M219.0 40.5V57.4M221.2 40.5V73.0M222.8 40.5V74.2M226.4 40.5V52.0M230.5 40.5V68.9M232.7 40.5V55.3M234.2 40.5V54.1M247.2 40.5V57.1M274.5 40.5V53.3M281.5 40.5V57.9M286.4 40.5V68.7M288.5 40.5V60.7M299.1 40.5V49.9M317.0 40.5V64.7M318.3 40.5V62.3M321.7 40.5V59.9M324.3 40.5V56.4M327.3 40.5V75.8" stroke="#907880" stroke-width="0.8" opacity="0.6"/><rect x="279" y="0" width="22.5" height="168.7" fill="#000"/><rect x="279" y="0" width="22.5" height="67.47999999999999" fill="#2a0610"/><path d="M279 16.50H301.5M279 33.50H301.5M279 50.50H301.5M279 67.50H301.5M279 84.50H301.5M279 101.50H301.5M279 118.50H301.5M279 134.50H301.5M279 151.50H301.5" stroke="#8a8a8a" stroke-width="0.9" opacity="0.6"/><rect x="279" y="0" width="22.5" height="5.061" fill="#4a0a14"/><rect x="279" y="5.061" width="22.5" height="28.679" fill="#e04466"/><rect x="279" y="5.061" width="22.5" height="11.809" fill="#b04a5c"/><path d="M279.0 30.4V41.7M280.7 30.4V37.7M281.9 30.4V48.0M283.4 30.4V45.7M285.1 30.4V39.3M286.9 30.4V37.5M288.4 30.4V56.1M289.5 30.4V60.2M290.7 30.4V34.5M291.9 30.4V43.9M293.0 30.4V41.7M294.0 30.4V48.2M295.0 30.4V40.3M296.0 30.4V46.1M297.4 30.4V59.1M298.7 30.4V34.6M299.6 30.4V43.9M300.9 30.4V39.9" stroke="#e86880" stroke-width="0.9"/><path d="M279.0 0V9.2M281.3 0V11.7M282.8 0V13.0M284.2 0V10.6M286.1 0V16.3M287.8 0V11.9M290.1 0V14.2M292.1 0V12.4M293.8 0V10.0M295.3 0V14.9M297.5 0V9.6M299.8 0V5.5M301.2 0V11.0" stroke="#4a0a14" stroke-width="1"/><rect x="279" y="-2" width="22.5" height="1.8" fill="#2424d8"/><rect x="279" y="168.89999999999998" width="22.5" height="1.8" fill="#8a5ae8"/><rect x="267" y="67.47999999999999" width="12" height="33.739999999999995" fill="#8c8c8c" fill-opacity="0.85" stroke="#b4b4b4" stroke-width="0.9"/><path d="M267 67.47999999999999 L279 74.90279999999998 M267 101.21999999999998 L279 93.79719999999999" stroke="#b0b0b0" stroke-width="0.7"/><rect x="301.5" y="67.47999999999999" width="12.0" height="33.739999999999995" fill="#8c8c8c" fill-opacity="0.85" stroke="#b4b4b4" stroke-width="0.9"/><path d="M313.5 67.47999999999999 L301.5 74.90279999999998 M313.5 101.21999999999998 L301.5 93.79719999999999" stroke="#b0b0b0" stroke-width="0.7"/></svg>
<div class="t" style="left:432px;top:267px;font-size:7.4px;color:#333;">Time:</div>
<div class="b" style="left:431px;top:275.5px;width:42px;height:9.5px;background:#fff;border:1px solid #c8c8d0"></div>
<div class="t" style="left:434px;top:276.3px;font-size:7.4px;color:#333;">Linked</div>
<div class="b" style="left:465px;top:276.5px;width:7.5px;height:7.5px;border:1px solid #8a9ad0;background:#e4e8f8"></div>
<svg style="left:466.5px;top:279px" width="5" height="3"><path d="M0.3 0.3 L2.5 2.6 L4.7 0.3" fill="none" stroke="#3a4a8a" stroke-width="0.9"/></svg>
<div class="t" style="left:431px;top:295px;font-size:7.4px;color:#333;">Offset:</div>
<div class="b" style="left:431px;top:302.5px;width:40px;height:10px;background:#fff;border:1px solid #c8c8d0"></div>
<div class="t" style="left:434px;top:303.5px;font-size:7.4px;color:#333;">43.562 us</div>
<div class="t" style="left:431px;top:317px;font-size:7.4px;color:#333;">Length:</div>
<div class="b" style="left:431px;top:323.5px;width:40px;height:10px;background:#fff;border:1px solid #c8c8d0"></div>
<div class="t" style="left:434px;top:324.5px;font-size:7.4px;color:#333;font-style:italic;">22.295 us</div>
<svg style="left:431px;top:356.5px" width="5" height="4"><path d="M0 2 L2.5 0 L5 2 L2.5 4Z" fill="#555"/></svg>
<div class="t" style="left:436px;top:350.5px;font-size:7.4px;color:#333;">dB/div:</div>
<div class="t" style="left:438px;top:358px;font-size:7.4px;color:#333;">10.0 dB</div>
<div class="b" style="left:431px;top:445.5px;width:36px;height:11px;border:1px solid #8088b8;background:linear-gradient(#fbfdfd,#e4eae8);border-radius:1px"></div>
<div class="t" style="left:435.5px;top:448px;font-size:7.2px;color:#222;">Autoscale</div>
<div class="t tr" style="left:440px;top:268.0px;width:57px;text-align:right;font-size:7.4px;color:#333">0.0</div>
<div class="b" style="left:499px;top:270.7px;width:2.5px;height:0.8px;background:#777"></div>
<div class="t tr" style="left:440px;top:302.1px;width:57px;text-align:right;font-size:7.4px;color:#333">-20.0</div>
<div class="b" style="left:499px;top:304.8px;width:2.5px;height:0.8px;background:#777"></div>
<div class="t tr" style="left:440px;top:336.2px;width:57px;text-align:right;font-size:7.4px;color:#333">-40.0</div>
<div class="b" style="left:499px;top:338.9px;width:2.5px;height:0.8px;background:#777"></div>
<div class="t tr" style="left:440px;top:370.3px;width:57px;text-align:right;font-size:7.4px;color:#333">-60.0</div>
<div class="b" style="left:499px;top:373.0px;width:2.5px;height:0.8px;background:#777"></div>
<div class="t tr" style="left:440px;top:404.4px;width:57px;text-align:right;font-size:7.4px;color:#333">-80.0</div>
<div class="b" style="left:499px;top:407.09999999999997px;width:2.5px;height:0.8px;background:#777"></div>
<div class="t tr" style="left:440px;top:438.5px;width:57px;text-align:right;font-size:7.4px;color:#333">-100.0</div>
<div class="b" style="left:499px;top:441.2px;width:2.5px;height:0.8px;background:#777"></div>
<svg style="left:503px;top:450px" width="5" height="4"><path d="M0 2 L2.5 0 L5 2 L2.5 4Z" fill="#555"/></svg>
<div class="t" style="left:511px;top:449.5px;font-size:7.4px;color:#333;">Position:</div>
<div class="t" style="left:537px;top:449.5px;font-size:7.4px;color:#333;">-1.573 us</div>
<svg style="left:784px;top:450px" width="5" height="4"><path d="M0 2 L2.5 0 L5 2 L2.5 4Z" fill="#555"/></svg>
<div class="t" style="left:792px;top:449.5px;font-size:7.4px;color:#333;">Scale:</div>
<div class="t" style="left:815px;top:449.5px;font-size:7.4px;color:#333;">124.421 us</div>
<div class="t" style="left:506px;top:441px;font-size:5px;color:#555;">T</div>
<svg style="left:504px;top:271px" width="342" height="168.7"><rect width="342" height="168.7" fill="#474747"/><path d="M34.50 0V168.7M0 16.50H342M68.50 0V168.7M0 33.50H342M102.50 0V168.7M0 50.50H342M136.50 0V168.7M0 67.50H342M171.50 0V168.7M0 84.50H342M205.50 0V168.7M0 101.50H342M239.50 0V168.7M0 118.50H342M273.50 0V168.7M0 134.50H342M307.50 0V168.7M0 151.50H342" stroke="#7a7a7a" stroke-width="0.9" opacity="0.55"/><rect x="0" y="0.00" width="342" height="8.27" fill="#2e4e4c"/><rect x="0" y="8.27" width="342" height="24.97" fill="#557a78"/><rect x="0" y="33.23" width="342" height="15.69" fill="#4e6664"/><path d="M0.0 3.9V8.4M2.8 1.2V1.3M5.1 2.3V7.7M8.0 5.0V8.7M10.8 1.2V4.2M12.6 7.5V7.9M15.7 0.6V5.3M17.9 3.3V9.0M19.5 0.5V6.7M22.0 0.8V7.4M25.4 0.9V3.8M27.1 2.6V6.8M29.0 5.8V6.1M30.8 6.7V9.4M33.1 4.9V8.1M35.4 0.3V5.2M38.9 8.1V12.5M41.1 3.0V7.7M43.9 0.9V2.5M46.1 4.2V9.7M48.6 0.2V5.8M51.0 4.3V5.8M53.4 3.2V8.4M55.1 4.5V5.7M58.0 0.3V2.2M60.1 5.3V5.6M62.6 1.7V3.6M65.0 7.9V11.2M68.4 1.4V7.6M70.7 1.6V6.6M74.0 0.1V1.9M77.0 2.8V4.5M78.5 0.3V4.5M82.0 8.3V11.7M83.5 2.7V8.0M86.7 5.3V6.8M89.3 3.9V8.2M91.3 7.8V13.9M93.1 2.4V8.3M95.2 7.8V11.3M98.1 5.8V7.3M100.1 2.1V6.7M103.0 1.1V7.1M105.4 2.0V4.9M108.8 4.6V8.8M112.2 8.0V13.1M114.5 4.9V10.9M117.6 4.8V7.1M119.8 6.1V9.9M121.3 5.9V12.0M124.4 7.4V13.6M127.0 6.5V9.1M128.7 2.9V5.0M132.1 5.7V9.4M134.8 1.0V4.6M137.7 3.3V4.9M140.0 2.7V7.3M141.8 0.7V2.9M144.7 6.3V10.7M148.1 3.0V3.2M150.6 3.7V4.9M153.4 2.8V4.4M155.5 7.8V7.9M157.8 2.3V3.7M160.1 1.8V8.0M162.6 5.8V6.9M165.1 5.0V10.7M167.1 3.8V9.6M170.2 1.9V5.5M173.2 3.3V7.8M176.1 8.0V11.8M178.9 2.9V7.8M181.1 4.1V6.6M183.2 1.1V2.6M185.8 2.1V2.4M188.9 2.4V8.7M191.6 3.2V9.1M194.9 2.7V3.5M197.7 7.0V11.1M200.7 3.4V7.6M202.8 3.4V5.9M205.0 3.3V8.7M206.9 1.7V3.4M210.3 4.3V4.7M213.5 7.2V12.8M215.7 6.1V8.1M217.5 7.2V12.8M219.4 7.3V7.4M221.5 0.1V1.3M223.3 5.9V7.9M225.2 1.5V3.6M228.4 5.0V5.7M231.3 4.4V7.5M233.9 5.4V10.8M236.4 5.3V8.4M239.1 3.2V6.0M241.7 5.9V7.8M245.0 4.1V9.8M247.9 7.9V12.5M250.3 3.4V7.5M253.3 6.9V7.8M254.9 0.9V1.5M256.5 0.1V1.8M258.2 5.7V9.8M261.7 7.9V13.0M265.1 0.2V1.8M268.4 3.9V5.3M271.4 3.5V7.2M273.6 2.0V2.6M276.3 7.9V14.5M279.3 7.7V10.2M281.4 7.6V11.7M284.2 0.1V1.6M286.7 6.0V11.6M289.7 2.8V5.4M292.9 8.2V11.5M294.8 5.2V8.8M297.1 1.9V4.5M299.8 1.0V4.7M303.2 6.2V7.9M305.5 0.8V5.8M308.3 1.4V5.1M311.0 4.8V7.3M313.1 2.9V9.7M315.3 4.2V7.3M317.1 3.3V4.7M319.3 3.0V5.4M322.6 2.5V4.7M325.4 3.3V6.8M328.2 0.6V5.1M329.9 2.1V7.5M333.4 5.6V6.7M335.8 2.3V8.0M337.8 1.6V5.9M340.5 4.9V8.1" stroke="#4a6a68" stroke-width="0.8" opacity="0.5"/><path d="M0.0 11.4V34.9M3.8 10.9V34.9M6.6 10.7V34.9M9.9 13.3V34.9M12.1 11.8V34.9M15.4 11.7V34.9M18.6 12.4V34.9M21.9 10.7V34.9M24.2 8.4V34.9M28.0 13.6V34.9M30.5 14.8V34.9M34.3 9.3V34.9M37.9 11.1V34.9M40.2 10.0V34.9M42.8 8.6V34.9M44.6 9.1V34.9M46.9 9.3V34.9M48.8 13.9V34.9M51.3 11.6V34.9M54.3 14.6V34.9M56.3 9.8V34.9M60.0 14.4V34.9M63.8 11.8V34.9M66.3 9.5V34.9M70.1 13.4V34.9M73.0 13.6V34.9M75.2 11.9V34.9M79.0 9.0V34.9M82.1 9.5V34.9M85.7 13.9V34.9M88.8 11.2V34.9M90.5 11.6V34.9M92.9 11.0V34.9M94.7 14.5V34.9M97.6 12.1V34.9M101.2 14.3V34.9M104.1 11.9V34.9M107.7 10.8V34.9M111.5 8.4V34.9M115.0 11.8V34.9M118.1 14.9V34.9M120.2 11.0V34.9M123.8 13.3V34.9M126.6 13.5V34.9M129.8 14.1V34.9M133.0 10.7V34.9M135.3 8.8V34.9M137.2 8.6V34.9M141.1 9.2V34.9M144.2 9.2V34.9M148.1 11.9V34.9M150.1 13.8V34.9M153.8 14.9V34.9M155.9 11.0V34.9M159.1 10.2V34.9M162.1 13.0V34.9M165.5 13.8V34.9M168.9 10.2V34.9M172.3 11.2V34.9M174.3 8.4V34.9M177.4 10.7V34.9M179.2 11.6V34.9M181.8 10.5V34.9M184.8 11.9V34.9M187.6 14.9V34.9M191.4 10.3V34.9M195.1 10.4V34.9M199.0 8.7V34.9M201.3 14.6V34.9M204.5 13.0V34.9M206.6 9.1V34.9M210.5 8.7V34.9M212.5 11.2V34.9M216.1 12.8V34.9M220.1 13.5V34.9M222.7 14.4V34.9M225.1 8.6V34.9M229.0 14.2V34.9M232.2 11.5V34.9M234.3 9.7V34.9M236.0 8.9V34.9M238.8 14.3V34.9M242.6 11.7V34.9M245.8 11.4V34.9M249.3 13.0V34.9M253.3 14.0V34.9M256.5 12.3V34.9M258.5 11.4V34.9M261.2 9.3V34.9M263.3 11.0V34.9M265.3 12.5V34.9M267.7 14.9V34.9M270.9 11.8V34.9M273.5 10.9V34.9M275.6 14.8V34.9M279.4 12.7V34.9M282.6 9.2V34.9M285.5 9.4V34.9M287.9 12.2V34.9M289.9 9.8V34.9M293.2 11.5V34.9M297.0 9.3V34.9M298.8 14.6V34.9M301.8 12.9V34.9M304.8 9.3V34.9M308.7 11.6V34.9M312.5 9.3V34.9M314.8 12.0V34.9M316.9 14.1V34.9M319.2 8.8V34.9M321.2 10.1V34.9M325.0 14.2V34.9M328.2 11.1V34.9M329.9 13.9V34.9M331.8 9.6V34.9M334.5 14.1V34.9M336.5 8.7V34.9M340.3 8.3V34.9" stroke="#7a9a98" stroke-width="0.7" opacity="0.35"/><path d="M0.0 29.9V36.4M1.3 29.9V41.1M3.5 29.9V42.5M4.9 29.9V45.9M6.0 29.9V39.6M7.3 29.9V35.2M9.5 29.9V38.5M10.7 29.9V44.1M12.7 29.9V46.9M15.0 29.9V40.6M17.2 29.9V48.4M19.1 29.9V47.0M21.2 29.9V41.6M22.3 29.9V37.9M24.2 29.9V46.7M25.8 29.9V44.6M27.7 29.9V35.5M29.0 29.9V41.2M31.0 29.9V46.3M32.4 29.9V45.0M33.9 29.9V40.4M35.9 29.9V37.0M37.1 29.9V43.6M38.2 29.9V41.4M39.7 29.9V39.7M41.1 29.9V34.8M43.1 29.9V48.2M45.1 29.9V37.9M47.0 29.9V44.9M48.7 29.9V35.4M50.6 29.9V35.5M52.1 29.9V41.6M53.8 29.9V40.9M55.4 29.9V35.9M56.6 29.9V45.1M58.5 29.9V47.8M60.1 29.9V35.1M61.3 29.9V48.2M63.6 29.9V34.8M65.8 29.9V45.7M67.7 29.9V41.7M69.5 29.9V42.6M71.3 29.9V43.1M73.4 29.9V39.5M74.8 29.9V41.7M76.7 29.9V35.1M78.6 29.9V36.9M80.7 29.9V40.9M82.5 29.9V40.7M83.9 29.9V44.4M86.1 29.9V41.9M88.4 29.9V48.2M89.6 29.9V47.8M91.0 29.9V44.8M92.6 29.9V43.7M94.5 29.9V44.6M96.5 29.9V46.8M98.2 29.9V36.5M99.4 29.9V47.2M101.2 29.9V34.1M103.3 29.9V40.3M105.5 29.9V35.7M107.4 29.9V38.7M109.3 29.9V37.6M111.5 29.9V37.6M113.2 29.9V45.7M115.2 29.9V43.7M116.4 29.9V43.0M118.4 29.9V40.2M120.5 29.9V41.9M121.7 29.9V37.8M123.3 29.9V36.0M124.8 29.9V33.3M126.5 29.9V43.5M127.8 29.9V48.1M129.5 29.9V44.0M130.7 29.9V33.6M132.9 29.9V41.2M134.6 29.9V44.5M135.9 29.9V43.2M138.0 29.9V43.5M139.6 29.9V42.8M141.8 29.9V35.7M143.3 29.9V46.5M145.5 29.9V45.9M147.5 29.9V44.4M148.8 29.9V46.3M150.2 29.9V44.9M151.5 29.9V44.5M153.6 29.9V45.2M155.4 29.9V36.1M156.6 29.9V43.1M158.0 29.9V41.7M159.9 29.9V39.4M162.1 29.9V44.9M164.2 29.9V43.3M165.6 29.9V38.9M167.0 29.9V36.1M169.1 29.9V37.4M170.4 29.9V43.6M172.4 29.9V42.0M173.7 29.9V41.4M175.2 29.9V45.2M177.3 29.9V45.2M179.4 29.9V46.1M181.3 29.9V40.7M182.8 29.9V41.4M185.0 29.9V43.5M186.7 29.9V41.5M188.4 29.9V39.7M189.6 29.9V44.0M191.2 29.9V36.8M193.0 29.9V39.3M194.4 29.9V47.2M195.8 29.9V40.6M197.6 29.9V47.0M199.8 29.9V38.3M201.4 29.9V38.7M203.2 29.9V37.8M205.1 29.9V42.8M206.7 29.9V42.5M208.0 29.9V41.9M209.9 29.9V37.8M211.2 29.9V42.8M213.4 29.9V46.8M215.0 29.9V46.2M217.1 29.9V47.9M219.3 29.9V40.6M220.4 29.9V47.1M221.6 29.9V42.2M223.8 29.9V44.2M225.9 29.9V46.0M228.0 29.9V44.4M229.2 29.9V48.3M230.9 29.9V42.1M232.7 29.9V39.3M233.8 29.9V39.7M235.4 29.9V33.9M237.6 29.9V42.3M239.2 29.9V48.2M241.3 29.9V43.7M242.9 29.9V47.5M245.0 29.9V47.3M246.5 29.9V47.1M248.3 29.9V42.8M249.5 29.9V42.3M251.3 29.9V36.7M253.4 29.9V43.0M254.5 29.9V40.7M256.3 29.9V44.0M257.5 29.9V42.1M259.3 29.9V41.5M261.4 29.9V42.0M263.2 29.9V36.9M264.7 29.9V41.9M266.8 29.9V48.4M268.6 29.9V41.0M270.4 29.9V33.6M272.3 29.9V39.9M274.3 29.9V47.0M276.2 29.9V42.8M277.6 29.9V35.4M279.1 29.9V39.7M280.8 29.9V41.9M282.0 29.9V39.7M284.1 29.9V34.9M286.4 29.9V48.2M288.4 29.9V39.5M289.6 29.9V48.3M291.8 29.9V41.6M293.8 29.9V37.0M295.6 29.9V35.8M296.7 29.9V39.1M298.1 29.9V45.8M299.7 29.9V40.6M300.8 29.9V46.1M302.6 29.9V45.3M304.5 29.9V44.5M306.7 29.9V37.7M307.8 29.9V44.8M309.0 29.9V46.7M310.7 29.9V38.3M312.4 29.9V45.7M313.8 29.9V48.1M315.0 29.9V47.6M316.3 29.9V42.4M317.8 29.9V39.7M319.7 29.9V41.9M321.3 29.9V38.6M322.6 29.9V41.7M323.9 29.9V43.1M325.8 29.9V39.3M327.1 29.9V35.8M329.0 29.9V43.7M330.5 29.9V46.4M332.6 29.9V45.1M334.7 29.9V39.8M336.8 29.9V47.8M338.1 29.9V36.8M339.6 29.9V36.5M341.2 29.9V45.2" stroke="#6e8e8c" stroke-width="0.8" opacity="0.75"/><path d="M3.5 40.0V50.8M10.7 40.0V56.4M17.2 40.0V52.1M21.2 40.0V49.6M32.4 40.0V60.2M35.9 40.0V49.3M39.7 40.0V54.1M41.1 40.0V60.9M45.1 40.0V61.7M47.0 40.0V59.1M48.7 40.0V61.5M50.6 40.0V58.5M52.1 40.0V50.8M53.8 40.0V50.4M55.4 40.0V54.8M58.5 40.0V54.1M76.7 40.0V50.9M88.4 40.0V60.9M94.5 40.0V57.0M98.2 40.0V60.5M99.4 40.0V53.6M103.3 40.0V49.2M118.4 40.0V53.6M134.6 40.0V58.6M138.0 40.0V59.4M147.5 40.0V52.4M162.1 40.0V57.6M167.0 40.0V60.3M170.4 40.0V56.2M186.7 40.0V57.1M193.0 40.0V56.2M195.8 40.0V51.4M199.8 40.0V59.7M203.2 40.0V56.5M205.1 40.0V60.0M217.1 40.0V58.7M220.4 40.0V48.5M223.8 40.0V61.0M229.2 40.0V54.2M248.3 40.0V56.0M253.4 40.0V61.7M288.4 40.0V60.5M293.8 40.0V50.7M295.6 40.0V53.6M300.8 40.0V61.5M304.5 40.0V51.0M309.0 40.0V55.1M317.8 40.0V50.2M341.2 40.0V55.3" stroke="#6e8e8c" stroke-width="0.8" opacity="0.6"/><rect x="123.5" y="0" width="61.299999999999955" height="168.7" fill="#000"/><path d="M123.5 16.50H184.79999999999995M123.5 33.50H184.79999999999995M123.5 50.50H184.79999999999995M123.5 67.50H184.79999999999995M123.5 84.50H184.79999999999995M123.5 101.50H184.79999999999995M123.5 118.50H184.79999999999995M123.5 134.50H184.79999999999995M123.5 151.50H184.79999999999995M136.5 0V168.7M171.5 0V168.7" stroke="#8a8a8a" stroke-width="0.9" opacity="0.6"/><rect x="123.5" y="0" width="61.299999999999955" height="8.2663" fill="#082a22"/><rect x="123.5" y="8.2663" width="61.299999999999955" height="22.943199999999997" fill="#34c4d4"/><path d="M123.5 27.8V33.5M124.8 27.8V32.8M125.9 27.8V55.4M127.2 27.8V35.6M128.7 27.8V38.2M130.1 27.8V42.2M131.6 27.8V31.2M133.4 27.8V40.2M134.4 27.8V45.1M135.6 27.8V49.9M136.9 27.8V46.4M138.0 27.8V46.1M139.7 27.8V39.2M141.4 27.8V44.5M143.0 27.8V48.4M144.1 27.8V44.0M145.2 27.8V37.1M146.8 27.8V31.7M147.9 27.8V52.5M149.2 27.8V33.7M150.3 27.8V48.2M151.5 27.8V53.7M152.7 27.8V45.0M153.9 27.8V33.3M155.4 27.8V42.9M156.7 27.8V44.5M157.9 27.8V36.5M158.8 27.8V42.2M160.2 27.8V40.3M161.4 27.8V44.4M163.0 27.8V31.9M164.2 27.8V32.8M165.3 27.8V38.6M166.3 27.8V35.4M167.8 27.8V44.3M169.0 27.8V46.1M170.5 27.8V38.5M171.5 27.8V46.3M173.0 27.8V34.2M174.5 27.8V35.3M176.2 27.8V34.9M177.2 27.8V49.8M178.9 27.8V40.8M179.9 27.8V45.8M181.1 27.8V34.9M182.5 27.8V42.1M183.8 27.8V32.6" stroke="#5ab8c8" stroke-width="0.9"/><path d="M123.5 0V11.7M125.1 0V11.5M127.4 0V12.4M129.2 0V9.1M130.5 0V8.6M132.7 0V12.2M134.7 0V11.9M136.1 0V11.2M137.3 0V8.4M139.2 0V8.3M140.9 0V10.1M143.2 0V10.0M144.6 0V11.7M146.0 0V13.2M148.3 0V13.3M150.3 0V9.2M151.7 0V11.9M153.4 0V11.8M154.9 0V11.1M157.1 0V9.7M159.3 0V9.0M161.3 0V8.5M162.8 0V8.6M164.2 0V10.9M166.4 0V12.4M168.7 0V9.5M171.0 0V10.4M173.0 0V11.9M174.6 0V9.7M176.3 0V10.0M178.3 0V12.6M180.3 0V8.5M182.5 0V12.2" stroke="#082a22" stroke-width="1"/><rect x="123.5" y="-2" width="61.299999999999955" height="1.8" fill="#2424d8"/><rect x="123.5" y="168.89999999999998" width="61.299999999999955" height="1.8" fill="#8a5ae8"/><rect x="111.5" y="67.47999999999999" width="12.0" height="33.739999999999995" fill="#8c8c8c" fill-opacity="0.85" stroke="#b4b4b4" stroke-width="0.9"/><path d="M111.5 67.47999999999999 L123.5 74.90279999999998 M111.5 101.21999999999998 L123.5 93.79719999999999" stroke="#b0b0b0" stroke-width="0.7"/><rect x="184.79999999999995" y="67.47999999999999" width="12.0" height="33.739999999999995" fill="#8c8c8c" fill-opacity="0.85" stroke="#b4b4b4" stroke-width="0.9"/><path d="M196.79999999999995 67.47999999999999 L184.79999999999995 74.90279999999998 M196.79999999999995 101.21999999999998 L184.79999999999995 93.79719999999999" stroke="#b0b0b0" stroke-width="0.7"/></svg>
<div class="t" style="left:432px;top:475px;font-size:7.4px;color:#333;">Time:</div>
<div class="b" style="left:431px;top:483.5px;width:42px;height:9.5px;background:#fff;border:1px solid #c8c8d0"></div>
<div class="t" style="left:434px;top:484.3px;font-size:7.4px;color:#333;">Linked</div>
<div class="b" style="left:465px;top:484.5px;width:7.5px;height:7.5px;border:1px solid #8a9ad0;background:#e4e8f8"></div>
<svg style="left:466.5px;top:487px" width="5" height="3"><path d="M0.3 0.3 L2.5 2.6 L4.7 0.3" fill="none" stroke="#3a4a8a" stroke-width="0.9"/></svg>
<div class="t" style="left:431px;top:503px;font-size:7.4px;color:#333;">Offset:</div>
<div class="b" style="left:431px;top:510.5px;width:40px;height:10px;background:#fff;border:1px solid #c8c8d0"></div>
<div class="t" style="left:434px;top:511.5px;font-size:7.4px;color:#333;">1.777 us</div>
<div class="t" style="left:431px;top:525px;font-size:7.4px;color:#333;">Length:</div>
<div class="b" style="left:431px;top:531.5px;width:40px;height:10px;background:#fff;border:1px solid #c8c8d0"></div>
<div class="t" style="left:434px;top:532.5px;font-size:7.4px;color:#333;">11.857 us</div>
<svg style="left:431px;top:564.5px" width="5" height="4"><path d="M0 2 L2.5 0 L5 2 L2.5 4Z" fill="#555"/></svg>
<div class="t" style="left:436px;top:558.5px;font-size:7.4px;color:#333;">dB/div:</div>
<div class="t" style="left:438px;top:566px;font-size:7.4px;color:#333;">10.0 dB</div>
<div class="b" style="left:431px;top:653.5px;width:36px;height:11px;border:1px solid #8088b8;background:linear-gradient(#fbfdfd,#e4eae8);border-radius:1px"></div>
<div class="t" style="left:435.5px;top:656px;font-size:7.2px;color:#222;">Autoscale</div>
<div class="t tr" style="left:440px;top:476.0px;width:57px;text-align:right;font-size:7.4px;color:#333">0.0</div>
<div class="b" style="left:499px;top:478.7px;width:2.5px;height:0.8px;background:#777"></div>
<div class="t tr" style="left:440px;top:510.1px;width:57px;text-align:right;font-size:7.4px;color:#333">-20.0</div>
<div class="b" style="left:499px;top:512.8000000000001px;width:2.5px;height:0.8px;background:#777"></div>
<div class="t tr" style="left:440px;top:544.2px;width:57px;text-align:right;font-size:7.4px;color:#333">-40.0</div>
<div class="b" style="left:499px;top:546.9000000000001px;width:2.5px;height:0.8px;background:#777"></div>
<div class="t tr" style="left:440px;top:578.3px;width:57px;text-align:right;font-size:7.4px;color:#333">-60.0</div>
<div class="b" style="left:499px;top:581.0px;width:2.5px;height:0.8px;background:#777"></div>
<div class="t tr" style="left:440px;top:612.4px;width:57px;text-align:right;font-size:7.4px;color:#333">-80.0</div>
<div class="b" style="left:499px;top:615.1px;width:2.5px;height:0.8px;background:#777"></div>
<div class="t tr" style="left:440px;top:646.5px;width:57px;text-align:right;font-size:7.4px;color:#333">-100.0</div>
<div class="b" style="left:499px;top:649.2px;width:2.5px;height:0.8px;background:#777"></div>
<svg style="left:503px;top:658px" width="5" height="4"><path d="M0 2 L2.5 0 L5 2 L2.5 4Z" fill="#555"/></svg>
<div class="t" style="left:511px;top:657.5px;font-size:7.4px;color:#333;">Position:</div>
<div class="t" style="left:537px;top:657.5px;font-size:7.4px;color:#333;">-1.573 us</div>
<svg style="left:784px;top:658px" width="5" height="4"><path d="M0 2 L2.5 0 L5 2 L2.5 4Z" fill="#555"/></svg>
<div class="t" style="left:792px;top:657.5px;font-size:7.4px;color:#333;">Scale:</div>
<div class="t" style="left:815px;top:657.5px;font-size:7.4px;color:#333;">124.421 us</div>
<div class="t" style="left:506px;top:649px;font-size:5px;color:#555;">T</div>
<svg style="left:504px;top:479px" width="342" height="168.7"><rect width="342" height="168.7" fill="#474747"/><path d="M34.50 0V168.7M0 16.50H342M68.50 0V168.7M0 33.50H342M102.50 0V168.7M0 50.50H342M136.50 0V168.7M0 67.50H342M171.50 0V168.7M0 84.50H342M205.50 0V168.7M0 101.50H342M239.50 0V168.7M0 118.50H342M273.50 0V168.7M0 134.50H342M307.50 0V168.7M0 151.50H342" stroke="#7a7a7a" stroke-width="0.9" opacity="0.55"/><rect x="0" y="0.00" width="342" height="11.81" fill="#4a4a4a"/><rect x="0" y="11.81" width="342" height="20.92" fill="#86845a"/><rect x="0" y="32.73" width="342" height="16.20" fill="#6c6a54"/><path d="M0.0 3.1V7.7M2.9 10.0V11.3M4.8 1.7V3.3M7.8 1.5V5.1M9.7 3.5V6.4M12.9 7.2V7.3M15.0 1.7V7.6M18.1 9.5V15.1M21.1 11.2V16.6M23.1 10.0V13.3M26.1 6.7V9.6M28.3 5.1V7.2M30.0 9.7V15.1M33.5 8.2V11.9M36.5 1.6V6.2M38.9 2.1V3.5M41.4 3.0V6.1M44.2 4.7V5.6M46.6 2.8V4.4M48.5 4.3V4.8M51.3 11.3V13.9M54.3 11.0V11.3M56.1 9.5V15.2M58.8 1.9V4.7M62.1 10.5V15.9M64.0 10.1V12.6M66.9 1.6V8.2M69.6 8.5V10.0M72.3 6.9V10.8M74.6 8.6V10.9M76.7 1.9V6.6M78.4 2.7V3.1M81.2 6.6V10.2M82.7 5.2V7.5M84.4 0.0V6.8M86.2 3.6V5.4M88.9 0.9V4.1M91.1 9.9V9.9M93.3 5.9V12.4M95.8 5.6V10.1M97.9 0.4V3.8M101.2 8.7V10.5M104.1 10.0V11.8M106.8 4.2V5.8M108.8 2.4V4.8M110.4 4.7V5.3M113.4 7.1V7.1M116.5 2.2V5.5M119.1 3.9V5.9M121.5 1.6V7.4M123.2 9.7V11.2M125.3 4.6V4.8M127.0 4.3V7.2M130.3 11.7V12.0M132.9 1.5V7.0M135.0 10.5V14.2M136.8 0.1V1.7M140.0 1.8V5.0M142.2 4.1V9.5M144.2 8.5V13.0M147.5 6.1V12.4M149.9 6.8V11.0M153.1 10.6V11.4M154.9 6.3V11.8M157.4 3.5V10.0M159.5 1.0V1.4M161.1 8.6V9.3M164.0 10.2V17.0M167.2 5.0V9.2M170.3 8.5V10.4M173.3 1.3V3.4M176.8 5.6V7.4M179.9 5.3V5.3M181.5 3.1V5.3M184.8 2.9V8.7M188.0 4.9V11.6M191.1 5.7V7.5M193.5 10.7V14.3M195.4 4.4V7.6M197.3 6.8V7.0M200.4 2.1V2.8M203.1 3.6V9.6M205.6 6.2V11.8M207.5 8.8V13.2M209.9 11.3V11.5M213.1 1.7V7.4M214.9 0.6V4.0M218.2 3.0V6.3M221.0 2.9V6.5M222.5 5.3V10.4M224.7 2.6V2.9M227.6 5.0V11.2M230.5 1.2V7.4M233.9 9.6V15.3M236.8 8.5V13.0M239.4 3.0V3.9M242.4 7.0V7.4M245.2 7.2V10.7M248.2 10.3V12.9M251.4 5.9V9.8M253.7 11.0V14.0M257.1 4.0V8.5M260.4 8.1V10.6M262.1 5.6V8.4M265.2 9.3V15.9M267.6 4.8V8.7M270.6 0.9V2.4M272.4 3.8V5.9M275.8 2.5V8.8M277.9 2.4V9.0M279.6 1.3V2.2M281.2 4.6V6.0M283.0 0.2V4.9M284.6 2.7V6.5M287.9 7.8V12.6M290.8 9.4V15.2M292.6 0.6V4.8M295.2 6.2V11.4M297.0 8.3V11.2M299.4 2.9V4.8M302.0 6.5V12.7M304.1 8.5V9.1M306.9 1.9V7.7M310.3 3.0V8.5M312.2 3.6V4.3M314.6 1.2V6.0M317.3 5.0V9.8M319.2 3.9V6.4M320.7 10.5V11.1M322.5 9.4V14.9M324.8 5.0V5.9M326.3 6.1V7.8M328.2 10.7V10.8M330.4 8.9V13.9M332.1 8.8V12.6M334.8 11.1V16.5M337.5 9.1V12.4M340.2 9.7V13.8" stroke="#6a6a58" stroke-width="0.8" opacity="0.5"/><path d="M0.0 11.9V34.4M3.5 14.1V34.4M6.1 13.7V34.4M9.1 14.5V34.4M12.7 15.8V34.4M15.6 17.1V34.4M18.3 15.4V34.4M21.7 16.7V34.4M25.0 17.8V34.4M28.0 15.6V34.4M30.0 13.4V34.4M32.7 15.2V34.4M36.4 12.1V34.4M38.9 16.8V34.4M41.6 17.5V34.4M43.6 17.0V34.4M46.2 15.6V34.4M47.9 14.5V34.4M51.5 16.8V34.4M54.4 14.7V34.4M56.1 16.5V34.4M58.8 16.7V34.4M61.8 14.5V34.4M65.5 12.7V34.4M69.4 12.4V34.4M73.4 15.8V34.4M76.0 18.1V34.4M78.9 15.2V34.4M80.6 17.2V34.4M83.8 13.4V34.4M85.6 14.6V34.4M89.5 17.7V34.4M92.2 12.1V34.4M95.8 13.2V34.4M99.1 15.2V34.4M103.0 12.8V34.4M106.5 16.7V34.4M108.2 15.6V34.4M110.5 16.5V34.4M114.4 16.3V34.4M117.2 15.9V34.4M119.4 15.0V34.4M121.3 16.7V34.4M123.0 15.4V34.4M125.1 15.6V34.4M126.8 12.0V34.4M129.9 16.7V34.4M133.6 16.4V34.4M137.6 12.8V34.4M140.7 16.1V34.4M142.7 12.8V34.4M144.9 15.3V34.4M148.4 16.6V34.4M151.4 12.3V34.4M154.7 15.3V34.4M156.7 16.0V34.4M158.9 13.9V34.4M161.6 16.9V34.4M163.4 14.8V34.4M165.6 16.3V34.4M169.2 13.6V34.4M172.5 14.9V34.4M174.6 13.7V34.4M177.5 17.3V34.4M180.6 11.8V34.4M184.0 15.7V34.4M186.6 13.4V34.4M189.3 16.5V34.4M191.6 12.7V34.4M195.3 14.8V34.4M197.0 17.8V34.4M198.9 14.3V34.4M202.0 16.3V34.4M205.7 13.0V34.4M208.7 17.7V34.4M211.4 16.6V34.4M214.1 16.6V34.4M218.0 14.1V34.4M221.4 14.1V34.4M225.1 17.0V34.4M228.8 17.7V34.4M231.8 18.2V34.4M233.8 15.7V34.4M235.6 15.7V34.4M238.8 13.7V34.4M242.4 14.6V34.4M244.5 13.1V34.4M247.4 14.4V34.4M249.2 13.9V34.4M253.1 15.0V34.4M256.3 14.7V34.4M258.1 15.9V34.4M260.2 12.6V34.4M263.3 16.4V34.4M264.9 18.2V34.4M266.6 12.9V34.4M269.0 17.2V34.4M272.3 16.8V34.4M275.0 18.0V34.4M276.9 18.3V34.4M278.6 12.8V34.4M282.0 17.0V34.4M285.2 13.5V34.4M288.9 15.3V34.4M291.0 12.5V34.4M295.0 12.2V34.4M297.1 14.2V34.4M300.8 17.4V34.4M304.5 16.1V34.4M306.1 16.8V34.4M308.2 18.2V34.4M312.1 12.3V34.4M315.4 13.4V34.4M317.3 17.7V34.4M319.9 13.8V34.4M322.9 12.2V34.4M325.5 16.2V34.4M329.2 12.6V34.4M332.9 12.5V34.4M335.0 14.1V34.4M337.0 12.4V34.4M340.2 14.5V34.4" stroke="#a8a478" stroke-width="0.7" opacity="0.35"/><path d="M0.0 29.4V41.7M2.3 29.4V41.0M3.8 29.4V39.5M5.1 29.4V38.5M6.8 29.4V34.5M8.3 29.4V45.8M10.2 29.4V39.4M11.8 29.4V41.7M13.0 29.4V37.1M15.2 29.4V45.6M16.5 29.4V44.4M18.0 29.4V41.3M19.4 29.4V42.4M21.0 29.4V40.6M22.4 29.4V38.3M24.6 29.4V39.7M26.1 29.4V46.2M27.4 29.4V38.8M28.8 29.4V43.5M30.2 29.4V38.4M31.4 29.4V34.9M33.0 29.4V39.3M34.1 29.4V37.9M35.3 29.4V45.6M36.6 29.4V37.0M38.9 29.4V47.5M40.6 29.4V40.5M42.5 29.4V40.0M44.1 29.4V38.4M45.9 29.4V37.8M47.6 29.4V42.9M49.7 29.4V44.6M51.2 29.4V45.1M53.1 29.4V46.3M54.7 29.4V38.8M55.9 29.4V47.0M57.1 29.4V37.1M59.2 29.4V46.1M60.7 29.4V40.4M62.2 29.4V43.5M63.9 29.4V46.8M65.9 29.4V39.0M68.1 29.4V34.7M69.9 29.4V38.6M71.9 29.4V37.1M73.1 29.4V40.9M74.2 29.4V35.3M76.4 29.4V41.5M77.8 29.4V44.6M79.5 29.4V44.0M81.6 29.4V46.8M83.6 29.4V46.5M84.9 29.4V35.2M86.4 29.4V41.8M87.9 29.4V43.3M89.4 29.4V37.1M90.9 29.4V34.7M93.1 29.4V37.0M94.9 29.4V47.4M96.3 29.4V34.8M98.2 29.4V43.9M99.5 29.4V43.4M101.7 29.4V37.7M102.8 29.4V42.7M104.5 29.4V36.5M106.1 29.4V40.9M107.4 29.4V36.4M109.7 29.4V46.0M111.0 29.4V38.9M112.5 29.4V35.2M114.3 29.4V41.6M116.0 29.4V39.5M118.0 29.4V41.5M119.4 29.4V46.0M121.2 29.4V44.3M122.5 29.4V34.3M124.7 29.4V44.0M126.8 29.4V40.2M128.2 29.4V45.8M130.0 29.4V45.2M131.1 29.4V37.2M133.1 29.4V37.6M135.0 29.4V38.4M136.2 29.4V40.2M138.3 29.4V41.6M140.2 29.4V43.5M141.7 29.4V35.7M143.7 29.4V43.5M145.2 29.4V36.5M146.8 29.4V43.5M148.4 29.4V39.6M150.6 29.4V42.4M152.7 29.4V46.9M153.9 29.4V42.2M156.2 29.4V37.5M157.9 29.4V40.9M159.3 29.4V33.6M160.7 29.4V41.4M162.9 29.4V38.7M164.2 29.4V42.9M166.4 29.4V42.3M167.7 29.4V36.5M169.7 29.4V36.5M171.4 29.4V41.4M173.1 29.4V35.3M175.2 29.4V37.7M176.4 29.4V46.5M178.2 29.4V46.8M179.3 29.4V34.1M180.4 29.4V46.2M182.7 29.4V44.2M184.5 29.4V39.9M185.9 29.4V42.2M187.7 29.4V38.5M189.9 29.4V44.1M192.2 29.4V47.3M193.4 29.4V35.0M195.0 29.4V41.2M196.2 29.4V43.4M197.5 29.4V47.9M199.0 29.4V46.3M200.9 29.4V47.0M202.4 29.4V34.2M204.2 29.4V38.1M205.4 29.4V37.8M207.0 29.4V44.2M208.5 29.4V44.6M209.8 29.4V43.1M211.6 29.4V47.5M213.6 29.4V47.6M215.1 29.4V47.1M216.9 29.4V35.6M218.6 29.4V37.1M219.8 29.4V41.3M222.0 29.4V36.0M224.0 29.4V38.6M225.2 29.4V34.7M226.9 29.4V41.9M229.1 29.4V37.2M231.2 29.4V45.6M233.4 29.4V47.5M235.2 29.4V34.0M236.5 29.4V43.9M238.0 29.4V41.2M239.7 29.4V47.6M241.1 29.4V37.8M243.1 29.4V35.9M244.6 29.4V42.4M246.8 29.4V36.5M248.6 29.4V47.5M250.6 29.4V45.7M252.2 29.4V45.4M254.3 29.4V47.9M255.8 29.4V35.7M257.3 29.4V38.8M259.3 29.4V43.9M261.2 29.4V43.2M263.1 29.4V46.0M265.2 29.4V33.0M266.3 29.4V42.9M267.6 29.4V44.7M268.8 29.4V37.1M270.6 29.4V43.6M272.7 29.4V33.6M274.6 29.4V43.5M276.1 29.4V43.4M277.4 29.4V39.5M279.2 29.4V41.8M280.7 29.4V34.9M282.9 29.4V44.6M284.0 29.4V37.1M285.8 29.4V42.6M287.1 29.4V41.5M289.3 29.4V39.6M291.4 29.4V34.0M292.6 29.4V45.5M293.8 29.4V34.0M295.3 29.4V42.6M296.9 29.4V35.1M298.4 29.4V40.4M300.6 29.4V38.3M302.6 29.4V40.7M304.2 29.4V34.2M306.3 29.4V42.5M308.4 29.4V43.9M309.6 29.4V39.0M310.8 29.4V39.2M312.8 29.4V40.1M314.9 29.4V44.1M316.8 29.4V42.7M319.0 29.4V42.8M320.9 29.4V38.0M323.1 29.4V44.6M325.2 29.4V34.8M326.9 29.4V43.4M328.6 29.4V39.6M330.4 29.4V37.0M332.0 29.4V45.4M334.3 29.4V45.0M336.2 29.4V38.4M338.5 29.4V35.5M340.1 29.4V44.3M341.4 29.4V47.5" stroke="#9a9870" stroke-width="0.8" opacity="0.75"/><path d="M0.0 39.5V62.9M6.8 39.5V66.4M16.5 39.5V66.5M27.4 39.5V51.1M34.1 39.5V53.1M35.3 39.5V57.0M40.6 39.5V57.2M62.2 39.5V58.4M79.5 39.5V56.4M86.4 39.5V68.7M90.9 39.5V48.8M109.7 39.5V61.8M116.0 39.5V60.7M152.7 39.5V69.3M156.2 39.5V68.9M164.2 39.5V50.7M173.1 39.5V49.2M176.4 39.5V65.6M180.4 39.5V62.7M192.2 39.5V67.3M215.1 39.5V52.5M225.2 39.5V60.1M229.1 39.5V53.4M231.2 39.5V47.9M236.5 39.5V60.3M246.8 39.5V53.8M267.6 39.5V62.8M272.7 39.5V56.5M279.2 39.5V52.4M282.9 39.5V60.8M308.4 39.5V57.0M309.6 39.5V68.5M310.8 39.5V51.3M314.9 39.5V64.3M319.0 39.5V66.3M325.2 39.5V56.8M340.1 39.5V62.9M341.4 39.5V62.1" stroke="#9a9870" stroke-width="0.8" opacity="0.6"/><rect x="8" y="0" width="33.799999999999955" height="168.7" fill="#000"/><path d="M8 16.50H41.799999999999955M8 33.50H41.799999999999955M8 50.50H41.799999999999955M8 67.50H41.799999999999955M8 84.50H41.799999999999955M8 101.50H41.799999999999955M8 118.50H41.799999999999955M8 134.50H41.799999999999955M8 151.50H41.799999999999955M34.5 0V168.7" stroke="#8a8a8a" stroke-width="0.9" opacity="0.6"/><rect x="8" y="0" width="33.799999999999955" height="11.809" fill="#1a1a04"/><rect x="8" y="11.809" width="33.799999999999955" height="21.0875" fill="#f2e41e"/><path d="M8.0 29.5V41.2M9.2 29.5V47.6M10.6 29.5V48.9M12.3 29.5V42.0M13.7 29.5V34.4M14.9 29.5V35.7M16.2 29.5V76.3M17.5 29.5V35.5M18.5 29.5V34.6M20.0 29.5V68.4M21.1 29.5V37.3M22.6 29.5V72.2M23.9 29.5V74.1M25.3 29.5V41.1M26.2 29.5V34.0M27.7 29.5V34.1M29.4 29.5V38.5M30.3 29.5V39.9M31.8 29.5V38.4M33.5 29.5V48.4M35.0 29.5V49.0M36.0 29.5V45.9M37.2 29.5V48.7M38.2 29.5V48.0M39.7 29.5V34.9M40.6 29.5V36.7" stroke="#d8d030" stroke-width="0.9"/><path d="M8.0 0V15.6M10.0 0V12.8M12.2 0V12.1M14.0 0V12.1M16.1 0V14.2M17.8 0V16.5M19.3 0V15.1M21.3 0V12.2M23.5 0V13.5M25.5 0V15.6M27.1 0V13.8M28.8 0V12.3M30.7 0V15.5M33.1 0V14.1M34.9 0V15.0M37.0 0V15.2M39.4 0V16.1M41.8 0V14.0" stroke="#1a1a04" stroke-width="1"/><rect x="0" y="29.3" width="135" height="4.7" fill="#58a858" opacity="0.55"/><rect x="0" y="49.3" width="135" height="7.1" fill="#1a6a58" opacity="0.6"/><rect x="0" y="56.4" width="135" height="14" fill="#6a2a48" opacity="0.45"/><rect x="121" y="48.0" width="8" height="6" fill="#c03050" opacity="0.6"/><rect x="124" y="74.0" width="10" height="8" fill="#108050" opacity="0.7"/><rect x="121" y="66.0" width="12" height="5" fill="#c03050" opacity="0.6"/><rect x="8" y="-2" width="33.799999999999955" height="1.8" fill="#2424d8"/><rect x="8" y="168.89999999999998" width="33.799999999999955" height="1.8" fill="#8a5ae8"/><rect x="0" y="67.47999999999999" width="8" height="33.739999999999995" fill="#8c8c8c" fill-opacity="0.85" stroke="#b4b4b4" stroke-width="0.9"/><path d="M0 67.47999999999999 L8 74.90279999999998 M0 101.21999999999998 L8 93.79719999999999" stroke="#b0b0b0" stroke-width="0.7"/><rect x="41.799999999999955" y="67.47999999999999" width="12.0" height="33.739999999999995" fill="#8c8c8c" fill-opacity="0.85" stroke="#b4b4b4" stroke-width="0.9"/><path d="M53.799999999999955 67.47999999999999 L41.799999999999955 74.90279999999998 M53.799999999999955 101.21999999999998 L41.799999999999955 93.79719999999999" stroke="#b0b0b0" stroke-width="0.7"/></svg>
<svg style="left:903px;top:60px" width="6" height="4"><path d="M0 0 H6 L3 3.5 Z" fill="#8a8a9a"/></svg>
<div class="t" style="left:910px;top:59.3px;font-size:7.1px;color:#333;">Trace 1</div>
<div class="b" style="left:955px;top:58px;width:8px;height:8px;border:1px solid #7a8ac8;background:linear-gradient(#f4f6ff,#d8def4)"></div>
<svg style="left:956px;top:59px" width="6" height="6"><path d="M0.8 3 L2.5 4.8 L5.5 1" fill="none" stroke="#3a4a9a" stroke-width="1"/></svg>
<div class="t" style="left:963px;top:59.3px;font-size:7.1px;color:#333;">Show</div>
<div class="t" style="left:983px;top:59.3px;font-size:7.1px;color:#333;">+Peak Normal</div>
<div class="b" style="left:1255px;top:57.5px;width:20px;height:9.5px;border:1px solid #9098c0;background:linear-gradient(#ffffff,#e8ecec)"></div>
<div class="t" style="left:1258px;top:59px;font-size:7.2px;color:#333;">Clear</div>
<svg style="left:856px;top:70px" width="5" height="4"><path d="M0 2 L2.5 0 L5 2 L2.5 4Z" fill="#555"/></svg>
<div class="t" style="left:863px;top:68.5px;font-size:7.4px;color:#333;">0.00</div>
<div class="b" style="left:862px;top:79.5px;width:34px;height:9.5px;background:#fff;border:1px solid #c8c8d0"></div>
<div class="t" style="left:865px;top:80.5px;font-size:7.4px;color:#333;">dBm</div>
<div class="b" style="left:888px;top:80.5px;width:7.5px;height:7.5px;border:1px solid #8a9ad0;background:#e4e8f8"></div>
<svg style="left:889.5px;top:83px" width="5" height="3"><path d="M0.3 0.3 L2.5 2.6 L4.7 0.3" fill="none" stroke="#3a4a8a" stroke-width="0.9"/></svg>
<svg style="left:856px;top:107px" width="5" height="4"><path d="M0 2 L2.5 0 L5 2 L2.5 4Z" fill="#555"/></svg>
<div class="t" style="left:861px;top:101px;font-size:7.4px;color:#333;">dB/div:</div>
<div class="t" style="left:863px;top:109px;font-size:7.4px;color:#333;">10.0 dB</div>
<svg style="left:856px;top:126px" width="5" height="4"><path d="M0 2 L2.5 0 L5 2 L2.5 4Z" fill="#555"/></svg>
<div class="t" style="left:861px;top:121px;font-size:7.4px;color:#333;">RBW:</div>
<div class="t" style="left:864px;top:129px;font-size:7.2px;color:#333;font-style:italic;">500 kHz</div>
<div class="b" style="left:857px;top:138.5px;width:7.5px;height:7.5px;border:1px solid #9aa0c8;background:linear-gradient(#fafbff,#e4e8f4)"></div>
<div class="t" style="left:866px;top:139.5px;font-size:7.4px;color:#333;">VBW:</div>
<div class="t" style="left:858px;top:161px;font-size:7.4px;color:#333;">Segments:</div>
<div class="t" style="left:860px;top:171px;font-size:7.4px;color:#333;">1</div>
<div class="b" style="left:857px;top:237.5px;width:36px;height:10.5px;border:1px solid #8088b8;background:linear-gradient(#fbfdfd,#e4eae8);border-radius:1px"></div>
<div class="t" style="left:861px;top:240px;font-size:7.2px;color:#222;">Autoscale</div>
<div class="t tr" style="left:860px;top:66.5px;width:56px;text-align:right;font-size:7.4px;color:#333">0.0</div>
<div class="b" style="left:918px;top:68.7px;width:2.5px;height:0.8px;background:#777"></div>
<div class="t tr" style="left:860px;top:82.9px;width:56px;text-align:right;font-size:7.4px;color:#333">-10.0</div>
<div class="b" style="left:918px;top:85.10000000000001px;width:2.5px;height:0.8px;background:#777"></div>
<div class="t tr" style="left:860px;top:99.3px;width:56px;text-align:right;font-size:7.4px;color:#333">-20.0</div>
<div class="b" style="left:918px;top:101.5px;width:2.5px;height:0.8px;background:#777"></div>
<div class="t tr" style="left:860px;top:115.7px;width:56px;text-align:right;font-size:7.4px;color:#333">-30.0</div>
<div class="b" style="left:918px;top:117.9px;width:2.5px;height:0.8px;background:#777"></div>
<div class="t tr" style="left:860px;top:132.1px;width:56px;text-align:right;font-size:7.4px;color:#333">-40.0</div>
<div class="b" style="left:918px;top:134.29999999999998px;width:2.5px;height:0.8px;background:#777"></div>
<div class="t tr" style="left:860px;top:148.5px;width:56px;text-align:right;font-size:7.4px;color:#333">-50.0</div>
<div class="b" style="left:918px;top:150.7px;width:2.5px;height:0.8px;background:#777"></div>
<div class="t tr" style="left:860px;top:164.9px;width:56px;text-align:right;font-size:7.4px;color:#333">-60.0</div>
<div class="b" style="left:918px;top:167.1px;width:2.5px;height:0.8px;background:#777"></div>
<div class="t tr" style="left:860px;top:181.3px;width:56px;text-align:right;font-size:7.4px;color:#333">-70.0</div>
<div class="b" style="left:918px;top:183.5px;width:2.5px;height:0.8px;background:#777"></div>
<div class="t tr" style="left:860px;top:197.7px;width:56px;text-align:right;font-size:7.4px;color:#333">-80.0</div>
<div class="b" style="left:918px;top:199.89999999999998px;width:2.5px;height:0.8px;background:#777"></div>
<div class="t tr" style="left:860px;top:214.1px;width:56px;text-align:right;font-size:7.4px;color:#333">-90.0</div>
<div class="b" style="left:918px;top:216.29999999999998px;width:2.5px;height:0.8px;background:#777"></div>
<div class="t tr" style="left:860px;top:230.5px;width:56px;text-align:right;font-size:7.4px;color:#333">-100.0</div>
<div class="b" style="left:918px;top:232.7px;width:2.5px;height:0.8px;background:#777"></div>
<svg style="left:926px;top:239px" width="5" height="4"><path d="M0 2 L2.5 0 L5 2 L2.5 4Z" fill="#555"/></svg>
<div class="t" style="left:933px;top:238.3px;font-size:7.4px;color:#333;">Start</div>
<div class="t" style="left:952px;top:238.3px;font-size:7.4px;color:#333;">1.21000 GHz</div>
<svg style="left:1190px;top:239px" width="5" height="4"><path d="M0 2 L2.5 0 L5 2 L2.5 4Z" fill="#555"/></svg>
<div class="t" style="left:1198px;top:238.3px;font-size:7.4px;color:#333;">Stop</div>
<div class="t" style="left:1215.5px;top:238.3px;font-size:7.4px;color:#333;">1.29000 GHz</div>
<svg style="left:923px;top:69px" width="346.5" height="164"><rect width="346.5" height="164" fill="#000"/><path d="M34.50 0V164M0 16.50H346.5M69.50 0V164M0 32.50H346.5M103.50 0V164M0 49.50H346.5M138.50 0V164M0 65.50H346.5M173.50 0V164M0 82.50H346.5M207.50 0V164M0 98.50H346.5M242.50 0V164M0 114.50H346.5M277.50 0V164M0 131.50H346.5M311.50 0V164M0 147.50H346.5" stroke="#727272" stroke-width="1"/><path d="M168.25 155 L173.25 163 L178.25 155" fill="none" stroke="#ddd" stroke-width="0.9"/><rect x="135" y="27.88" width="27" height="18.04" fill="#160204"/><rect x="162" y="32.8" width="55" height="21.32" fill="#160204"/><rect x="113" y="45.919999999999995" width="24" height="49.199999999999996" fill="#160204"/><rect x="0" y="131.2" width="117" height="24.599999999999998" fill="#160204"/><rect x="227" y="131.2" width="120" height="24.599999999999998" fill="#160204"/><rect x="217" y="49.199999999999996" width="20" height="49.199999999999996" fill="#160204"/><path d="M34.50 0V164M0 16.50H346.5M69.50 0V164M0 32.50H346.5M103.50 0V164M0 49.50H346.5M138.50 0V164M0 65.50H346.5M173.50 0V164M0 82.50H346.5M207.50 0V164M0 98.50H346.5M242.50 0V164M0 114.50H346.5M277.50 0V164M0 131.50H346.5M311.50 0V164M0 147.50H346.5" stroke="#727272" stroke-width="1"/><path d="M0.0 161.0C0.4 157.8 1.8 144.3 2.6 141.7C3.4 139.0 4.1 144.0 4.9 145.2C5.7 146.5 6.2 145.9 7.3 149.0C8.3 152.1 9.9 165.5 11.0 163.8C12.1 162.0 12.8 144.0 13.8 138.7C14.7 133.3 15.9 132.3 17.0 131.5C18.1 130.7 19.2 129.2 20.3 133.6C21.4 138.0 22.4 153.0 23.5 158.0C24.7 162.9 26.1 166.8 27.2 163.3C28.3 159.7 29.0 139.2 29.8 136.6C30.7 134.0 31.5 147.5 32.5 147.7C33.4 148.0 34.3 140.6 35.3 138.2C36.4 135.7 37.6 132.4 38.8 132.9C40.0 133.4 41.4 136.5 42.6 141.1C43.8 145.7 45.0 158.9 46.1 160.5C47.2 162.0 48.1 150.4 49.1 150.4C50.1 150.4 51.2 164.0 52.1 160.6C53.1 157.2 53.9 129.9 55.0 130.1C56.1 130.2 57.5 158.5 58.5 161.8C59.5 165.0 60.1 151.0 60.9 149.4C61.7 147.7 62.4 149.4 63.5 151.8C64.5 154.1 66.1 165.0 67.2 163.4C68.3 161.7 69.2 145.5 70.3 141.8C71.4 138.2 72.7 138.8 73.8 141.7C74.8 144.7 75.6 157.7 76.6 159.4C77.6 161.2 78.8 155.9 79.8 152.3C80.8 148.7 81.6 138.8 82.5 137.7C83.5 136.6 84.4 142.4 85.5 145.6C86.6 148.8 88.2 156.5 89.2 157.1C90.2 157.7 90.5 148.8 91.5 149.2C92.4 149.7 93.9 162.8 94.9 159.9C95.9 157.0 96.5 133.2 97.5 131.9C98.4 130.5 99.7 147.9 100.8 151.9C101.8 155.9 102.7 159.1 103.7 156.0C104.7 153.0 106.3 138.3 106.8 133.5C107.4 128.8 106.2 126.0 107.0 127.7C107.8 129.4 110.1 139.9 111.6 143.7C113.0 147.5 114.6 157.5 115.7 150.6C116.8 143.7 117.4 114.3 118.4 102.5C119.4 90.7 120.9 86.6 121.9 79.6C122.9 72.5 123.3 64.0 124.2 60.2C125.2 56.4 126.6 52.0 127.6 56.8C128.5 61.6 129.1 89.0 129.9 88.8C130.7 88.6 131.6 57.1 132.2 55.6C132.8 54.1 132.6 82.8 133.3 79.6C134.0 76.4 135.4 33.1 136.3 36.2C137.2 39.3 137.8 98.6 138.6 98.0C139.4 97.4 140.2 42.5 140.9 32.7C141.6 22.9 142.2 36.9 143.0 39.0C143.8 41.1 144.9 46.5 145.9 45.3C147.0 44.1 148.3 33.3 149.3 31.6C150.3 29.9 151.0 34.2 152.0 35.0C153.0 35.8 154.2 34.9 155.0 36.2C155.8 37.5 156.2 38.2 157.0 43.0C157.8 47.8 158.6 64.4 159.6 64.8C160.6 65.2 161.9 49.6 163.0 45.3C164.1 41.0 165.0 40.5 166.0 39.0C167.0 37.5 168.0 35.5 168.8 36.2C169.6 36.9 170.2 40.5 171.0 43.0C171.8 45.5 172.7 51.7 173.4 51.0C174.2 50.3 174.7 41.9 175.5 39.0C176.3 36.1 177.1 34.2 178.0 33.9C178.9 33.6 180.0 36.8 181.0 37.0C182.0 37.2 183.0 32.1 184.0 35.0C185.0 37.9 186.1 53.8 187.1 54.5C188.1 55.2 188.8 42.6 190.0 39.0C191.2 35.4 193.0 32.4 194.0 32.7C195.0 33.0 195.2 35.5 196.0 41.0C196.8 46.5 197.7 64.7 198.5 66.0C199.3 67.3 200.2 53.0 201.0 49.0C201.8 45.0 202.4 38.1 203.1 41.9C203.8 45.7 204.6 70.8 205.4 71.6C206.2 72.4 207.2 52.5 208.0 47.0C208.8 41.5 209.2 37.8 210.0 38.5C210.8 39.2 212.0 43.0 213.0 51.0C214.0 59.0 214.7 85.7 215.7 86.5C216.7 87.3 218.0 59.8 219.1 55.6C220.1 51.3 221.0 52.8 222.0 61.0C223.0 69.2 223.9 102.8 224.8 104.8C225.6 106.8 226.2 72.6 227.1 72.8C228.0 73.0 228.8 92.3 230.0 106.0C231.2 119.7 232.8 151.2 234.0 155.2C235.2 159.2 236.1 131.5 237.4 130.0C238.7 128.5 240.7 144.1 242.0 146.0C243.3 147.9 244.4 140.5 245.4 141.4C246.4 142.3 247.0 148.9 248.0 151.5C249.0 154.1 250.3 155.3 251.5 156.7C252.7 158.2 254.1 159.8 255.1 160.0C256.1 160.3 256.6 161.3 257.5 158.3C258.4 155.2 259.4 143.7 260.4 141.8C261.5 139.9 262.6 147.2 263.7 146.8C264.8 146.4 266.2 137.1 267.2 139.4C268.3 141.6 269.0 157.1 269.8 160.4C270.7 163.7 271.5 161.3 272.3 158.9C273.1 156.5 273.6 149.7 274.5 146.0C275.5 142.4 276.9 139.0 278.0 137.2C279.1 135.4 280.0 130.7 281.0 135.1C282.0 139.5 283.1 159.0 284.0 163.5C285.0 168.0 285.9 166.6 286.8 162.2C287.7 157.8 288.4 141.8 289.4 137.0C290.5 132.3 292.1 130.4 293.1 133.8C294.2 137.2 294.9 154.8 295.7 157.4C296.5 160.0 297.1 151.0 298.0 149.2C298.9 147.4 300.0 147.4 300.9 146.6C301.8 145.8 302.7 146.9 303.5 144.2C304.3 141.6 304.9 128.4 305.8 130.9C306.6 133.3 307.5 154.1 308.5 158.9C309.5 163.7 310.7 163.2 311.7 159.7C312.6 156.3 313.3 142.6 314.3 138.1C315.2 133.6 316.4 134.1 317.4 132.7C318.3 131.4 318.8 128.6 319.7 130.0C320.7 131.5 321.8 140.5 322.8 141.6C323.8 142.8 324.5 137.7 325.5 137.2C326.4 136.7 327.5 135.0 328.6 138.6C329.6 142.3 330.7 158.1 331.7 158.9C332.7 159.8 333.6 144.3 334.5 144.0C335.4 143.6 336.1 157.8 337.2 156.7C338.2 155.6 339.7 141.5 340.8 137.4C341.9 133.3 342.6 128.1 343.5 132.1C344.5 136.0 346.0 156.2 346.5 161.0" fill="none" stroke="#a02a40" stroke-width="3" opacity="0.45" stroke-linejoin="round"/><path d="M0.0 161.0C0.4 157.8 1.8 144.3 2.6 141.7C3.4 139.0 4.1 144.0 4.9 145.2C5.7 146.5 6.2 145.9 7.3 149.0C8.3 152.1 9.9 165.5 11.0 163.8C12.1 162.0 12.8 144.0 13.8 138.7C14.7 133.3 15.9 132.3 17.0 131.5C18.1 130.7 19.2 129.2 20.3 133.6C21.4 138.0 22.4 153.0 23.5 158.0C24.7 162.9 26.1 166.8 27.2 163.3C28.3 159.7 29.0 139.2 29.8 136.6C30.7 134.0 31.5 147.5 32.5 147.7C33.4 148.0 34.3 140.6 35.3 138.2C36.4 135.7 37.6 132.4 38.8 132.9C40.0 133.4 41.4 136.5 42.6 141.1C43.8 145.7 45.0 158.9 46.1 160.5C47.2 162.0 48.1 150.4 49.1 150.4C50.1 150.4 51.2 164.0 52.1 160.6C53.1 157.2 53.9 129.9 55.0 130.1C56.1 130.2 57.5 158.5 58.5 161.8C59.5 165.0 60.1 151.0 60.9 149.4C61.7 147.7 62.4 149.4 63.5 151.8C64.5 154.1 66.1 165.0 67.2 163.4C68.3 161.7 69.2 145.5 70.3 141.8C71.4 138.2 72.7 138.8 73.8 141.7C74.8 144.7 75.6 157.7 76.6 159.4C77.6 161.2 78.8 155.9 79.8 152.3C80.8 148.7 81.6 138.8 82.5 137.7C83.5 136.6 84.4 142.4 85.5 145.6C86.6 148.8 88.2 156.5 89.2 157.1C90.2 157.7 90.5 148.8 91.5 149.2C92.4 149.7 93.9 162.8 94.9 159.9C95.9 157.0 96.5 133.2 97.5 131.9C98.4 130.5 99.7 147.9 100.8 151.9C101.8 155.9 102.7 159.1 103.7 156.0C104.7 153.0 106.3 138.3 106.8 133.5C107.4 128.8 106.2 126.0 107.0 127.7C107.8 129.4 110.1 139.9 111.6 143.7C113.0 147.5 114.6 157.5 115.7 150.6C116.8 143.7 117.4 114.3 118.4 102.5C119.4 90.7 120.9 86.6 121.9 79.6C122.9 72.5 123.3 64.0 124.2 60.2C125.2 56.4 126.6 52.0 127.6 56.8C128.5 61.6 129.1 89.0 129.9 88.8C130.7 88.6 131.6 57.1 132.2 55.6C132.8 54.1 132.6 82.8 133.3 79.6C134.0 76.4 135.4 33.1 136.3 36.2C137.2 39.3 137.8 98.6 138.6 98.0C139.4 97.4 140.2 42.5 140.9 32.7C141.6 22.9 142.2 36.9 143.0 39.0C143.8 41.1 144.9 46.5 145.9 45.3C147.0 44.1 148.3 33.3 149.3 31.6C150.3 29.9 151.0 34.2 152.0 35.0C153.0 35.8 154.2 34.9 155.0 36.2C155.8 37.5 156.2 38.2 157.0 43.0C157.8 47.8 158.6 64.4 159.6 64.8C160.6 65.2 161.9 49.6 163.0 45.3C164.1 41.0 165.0 40.5 166.0 39.0C167.0 37.5 168.0 35.5 168.8 36.2C169.6 36.9 170.2 40.5 171.0 43.0C171.8 45.5 172.7 51.7 173.4 51.0C174.2 50.3 174.7 41.9 175.5 39.0C176.3 36.1 177.1 34.2 178.0 33.9C178.9 33.6 180.0 36.8 181.0 37.0C182.0 37.2 183.0 32.1 184.0 35.0C185.0 37.9 186.1 53.8 187.1 54.5C188.1 55.2 188.8 42.6 190.0 39.0C191.2 35.4 193.0 32.4 194.0 32.7C195.0 33.0 195.2 35.5 196.0 41.0C196.8 46.5 197.7 64.7 198.5 66.0C199.3 67.3 200.2 53.0 201.0 49.0C201.8 45.0 202.4 38.1 203.1 41.9C203.8 45.7 204.6 70.8 205.4 71.6C206.2 72.4 207.2 52.5 208.0 47.0C208.8 41.5 209.2 37.8 210.0 38.5C210.8 39.2 212.0 43.0 213.0 51.0C214.0 59.0 214.7 85.7 215.7 86.5C216.7 87.3 218.0 59.8 219.1 55.6C220.1 51.3 221.0 52.8 222.0 61.0C223.0 69.2 223.9 102.8 224.8 104.8C225.6 106.8 226.2 72.6 227.1 72.8C228.0 73.0 228.8 92.3 230.0 106.0C231.2 119.7 232.8 151.2 234.0 155.2C235.2 159.2 236.1 131.5 237.4 130.0C238.7 128.5 240.7 144.1 242.0 146.0C243.3 147.9 244.4 140.5 245.4 141.4C246.4 142.3 247.0 148.9 248.0 151.5C249.0 154.1 250.3 155.3 251.5 156.7C252.7 158.2 254.1 159.8 255.1 160.0C256.1 160.3 256.6 161.3 257.5 158.3C258.4 155.2 259.4 143.7 260.4 141.8C261.5 139.9 262.6 147.2 263.7 146.8C264.8 146.4 266.2 137.1 267.2 139.4C268.3 141.6 269.0 157.1 269.8 160.4C270.7 163.7 271.5 161.3 272.3 158.9C273.1 156.5 273.6 149.7 274.5 146.0C275.5 142.4 276.9 139.0 278.0 137.2C279.1 135.4 280.0 130.7 281.0 135.1C282.0 139.5 283.1 159.0 284.0 163.5C285.0 168.0 285.9 166.6 286.8 162.2C287.7 157.8 288.4 141.8 289.4 137.0C290.5 132.3 292.1 130.4 293.1 133.8C294.2 137.2 294.9 154.8 295.7 157.4C296.5 160.0 297.1 151.0 298.0 149.2C298.9 147.4 300.0 147.4 300.9 146.6C301.8 145.8 302.7 146.9 303.5 144.2C304.3 141.6 304.9 128.4 305.8 130.9C306.6 133.3 307.5 154.1 308.5 158.9C309.5 163.7 310.7 163.2 311.7 159.7C312.6 156.3 313.3 142.6 314.3 138.1C315.2 133.6 316.4 134.1 317.4 132.7C318.3 131.4 318.8 128.6 319.7 130.0C320.7 131.5 321.8 140.5 322.8 141.6C323.8 142.8 324.5 137.7 325.5 137.2C326.4 136.7 327.5 135.0 328.6 138.6C329.6 142.3 330.7 158.1 331.7 158.9C332.7 159.8 333.6 144.3 334.5 144.0C335.4 143.6 336.1 157.8 337.2 156.7C338.2 155.6 339.7 141.5 340.8 137.4C341.9 133.3 342.6 128.1 343.5 132.1C344.5 136.0 346.0 156.2 346.5 161.0" fill="none" stroke="#d89aa2" stroke-width="1.2" stroke-linejoin="round"/></svg>
<svg style="left:903px;top:268px" width="6" height="4"><path d="M0 0 H6 L3 3.5 Z" fill="#8a8a9a"/></svg>
<div class="t" style="left:910px;top:267.3px;font-size:7.1px;color:#333;">Trace 1</div>
<div class="b" style="left:955px;top:266px;width:8px;height:8px;border:1px solid #7a8ac8;background:linear-gradient(#f4f6ff,#d8def4)"></div>
<svg style="left:956px;top:267px" width="6" height="6"><path d="M0.8 3 L2.5 4.8 L5.5 1" fill="none" stroke="#3a4a9a" stroke-width="1"/></svg>
<div class="t" style="left:963px;top:267.3px;font-size:7.1px;color:#333;">Show</div>
<div class="t" style="left:983px;top:267.3px;font-size:7.1px;color:#333;">+Peak Normal</div>
<div class="b" style="left:1255px;top:265.5px;width:20px;height:9.5px;border:1px solid #9098c0;background:linear-gradient(#ffffff,#e8ecec)"></div>
<div class="t" style="left:1258px;top:267px;font-size:7.2px;color:#333;">Clear</div>
<svg style="left:856px;top:278px" width="5" height="4"><path d="M0 2 L2.5 0 L5 2 L2.5 4Z" fill="#555"/></svg>
<div class="t" style="left:863px;top:276.5px;font-size:7.4px;color:#333;">0.00</div>
<div class="b" style="left:862px;top:287.5px;width:34px;height:9.5px;background:#fff;border:1px solid #c8c8d0"></div>
<div class="t" style="left:865px;top:288.5px;font-size:7.4px;color:#333;">dBm</div>
<div class="b" style="left:888px;top:288.5px;width:7.5px;height:7.5px;border:1px solid #8a9ad0;background:#e4e8f8"></div>
<svg style="left:889.5px;top:291px" width="5" height="3"><path d="M0.3 0.3 L2.5 2.6 L4.7 0.3" fill="none" stroke="#3a4a8a" stroke-width="0.9"/></svg>
<svg style="left:856px;top:315px" width="5" height="4"><path d="M0 2 L2.5 0 L5 2 L2.5 4Z" fill="#555"/></svg>
<div class="t" style="left:861px;top:309px;font-size:7.4px;color:#333;">dB/div:</div>
<div class="t" style="left:863px;top:317px;font-size:7.4px;color:#333;">10.0 dB</div>
<svg style="left:856px;top:334px" width="5" height="4"><path d="M0 2 L2.5 0 L5 2 L2.5 4Z" fill="#555"/></svg>
<div class="t" style="left:861px;top:329px;font-size:7.4px;color:#333;">RBW:</div>
<div class="t" style="left:864px;top:337px;font-size:7.2px;color:#333;font-style:italic;">1.00 MHz</div>
<div class="b" style="left:857px;top:346.5px;width:7.5px;height:7.5px;border:1px solid #9aa0c8;background:linear-gradient(#fafbff,#e4e8f4)"></div>
<div class="t" style="left:866px;top:347.5px;font-size:7.4px;color:#333;">VBW:</div>
<div class="t" style="left:858px;top:369px;font-size:7.4px;color:#333;">Segments:</div>
<div class="t" style="left:860px;top:379px;font-size:7.4px;color:#333;">10</div>
<div class="b" style="left:857px;top:445.5px;width:36px;height:10.5px;border:1px solid #8088b8;background:linear-gradient(#fbfdfd,#e4eae8);border-radius:1px"></div>
<div class="t" style="left:861px;top:448px;font-size:7.2px;color:#222;">Autoscale</div>
<div class="t tr" style="left:860px;top:274.5px;width:56px;text-align:right;font-size:7.4px;color:#333">0.0</div>
<div class="b" style="left:918px;top:276.7px;width:2.5px;height:0.8px;background:#777"></div>
<div class="t tr" style="left:860px;top:290.9px;width:56px;text-align:right;font-size:7.4px;color:#333">-10.0</div>
<div class="b" style="left:918px;top:293.09999999999997px;width:2.5px;height:0.8px;background:#777"></div>
<div class="t tr" style="left:860px;top:307.3px;width:56px;text-align:right;font-size:7.4px;color:#333">-20.0</div>
<div class="b" style="left:918px;top:309.5px;width:2.5px;height:0.8px;background:#777"></div>
<div class="t tr" style="left:860px;top:323.7px;width:56px;text-align:right;font-size:7.4px;color:#333">-30.0</div>
<div class="b" style="left:918px;top:325.9px;width:2.5px;height:0.8px;background:#777"></div>
<div class="t tr" style="left:860px;top:340.1px;width:56px;text-align:right;font-size:7.4px;color:#333">-40.0</div>
<div class="b" style="left:918px;top:342.3px;width:2.5px;height:0.8px;background:#777"></div>
<div class="t tr" style="left:860px;top:356.5px;width:56px;text-align:right;font-size:7.4px;color:#333">-50.0</div>
<div class="b" style="left:918px;top:358.7px;width:2.5px;height:0.8px;background:#777"></div>
<div class="t tr" style="left:860px;top:372.9px;width:56px;text-align:right;font-size:7.4px;color:#333">-60.0</div>
<div class="b" style="left:918px;top:375.09999999999997px;width:2.5px;height:0.8px;background:#777"></div>
<div class="t tr" style="left:860px;top:389.3px;width:56px;text-align:right;font-size:7.4px;color:#333">-70.0</div>
<div class="b" style="left:918px;top:391.5px;width:2.5px;height:0.8px;background:#777"></div>
<div class="t tr" style="left:860px;top:405.7px;width:56px;text-align:right;font-size:7.4px;color:#333">-80.0</div>
<div class="b" style="left:918px;top:407.9px;width:2.5px;height:0.8px;background:#777"></div>
<div class="t tr" style="left:860px;top:422.1px;width:56px;text-align:right;font-size:7.4px;color:#333">-90.0</div>
<div class="b" style="left:918px;top:424.3px;width:2.5px;height:0.8px;background:#777"></div>
<div class="t tr" style="left:860px;top:438.5px;width:56px;text-align:right;font-size:7.4px;color:#333">-100.0</div>
<div class="b" style="left:918px;top:440.7px;width:2.5px;height:0.8px;background:#777"></div>
<svg style="left:926px;top:447px" width="5" height="4"><path d="M0 2 L2.5 0 L5 2 L2.5 4Z" fill="#555"/></svg>
<div class="t" style="left:933px;top:446.3px;font-size:7.4px;color:#333;">Start</div>
<div class="t" style="left:952px;top:446.3px;font-size:7.4px;color:#333;">950.000 MHz</div>
<svg style="left:1190px;top:447px" width="5" height="4"><path d="M0 2 L2.5 0 L5 2 L2.5 4Z" fill="#555"/></svg>
<div class="t" style="left:1198px;top:446.3px;font-size:7.4px;color:#333;">Stop</div>
<div class="t" style="left:1215.5px;top:446.3px;font-size:7.4px;color:#333;">1.05000 GHz</div>
<svg style="left:923px;top:277px" width="346.5" height="164"><rect width="346.5" height="164" fill="#000"/><path d="M34.50 0V164M0 16.50H346.5M69.50 0V164M0 32.50H346.5M103.50 0V164M0 49.50H346.5M138.50 0V164M0 65.50H346.5M173.50 0V164M0 82.50H346.5M207.50 0V164M0 98.50H346.5M242.50 0V164M0 114.50H346.5M277.50 0V164M0 131.50H346.5M311.50 0V164M0 147.50H346.5" stroke="#727272" stroke-width="1"/><path d="M168.25 155 L173.25 163 L178.25 155" fill="none" stroke="#ddd" stroke-width="0.9"/><path d="M0.0 133.3C0.5 133.4 1.8 133.8 2.8 133.8C3.8 133.7 5.0 134.1 6.0 133.0C7.0 131.9 7.9 128.2 8.9 127.1C9.8 126.0 10.6 126.1 11.5 126.6C12.5 127.0 13.6 129.4 14.6 129.8C15.6 130.3 16.6 130.0 17.6 129.3C18.5 128.6 19.3 126.4 20.2 125.7C21.1 125.1 21.9 124.4 22.9 125.7C23.9 126.9 25.1 132.7 26.1 133.3C27.1 133.9 27.7 129.7 28.6 129.4C29.6 129.2 30.8 131.6 31.8 131.7C32.8 131.8 33.7 131.0 34.7 129.9C35.7 128.8 36.8 124.9 37.9 125.1C38.9 125.3 39.9 130.3 41.0 130.9C42.0 131.5 43.0 129.1 44.1 128.7C45.1 128.2 46.2 129.0 47.3 128.2C48.4 127.4 49.5 124.3 50.6 123.8C51.7 123.2 52.7 124.4 53.8 124.9C54.8 125.3 56.0 126.8 57.0 126.6C57.9 126.3 58.5 122.4 59.4 123.2C60.2 123.9 61.2 130.2 62.1 130.9C63.0 131.6 64.0 128.8 64.8 127.5C65.7 126.1 66.5 123.5 67.3 122.8C68.1 122.1 68.8 122.0 69.6 123.1C70.5 124.2 71.6 128.3 72.5 129.4C73.4 130.5 74.3 130.1 75.1 129.8C75.9 129.4 76.6 130.0 77.5 127.1C78.3 124.1 79.4 118.2 80.4 112.2C81.5 106.2 82.5 97.4 83.6 91.0C84.7 84.5 86.0 78.2 87.0 73.6C88.1 69.0 89.0 66.5 90.0 63.5C91.0 60.5 91.8 58.0 92.8 55.6C93.9 53.3 95.1 50.7 96.1 49.5C97.2 48.2 98.4 49.0 99.3 48.2C100.3 47.4 101.1 46.2 102.1 44.7C103.0 43.3 104.0 40.9 105.0 39.5C105.9 38.1 106.9 37.1 107.8 36.4C108.7 35.6 109.4 35.3 110.3 35.1C111.2 34.9 112.2 35.3 113.2 35.0C114.2 34.7 115.6 33.9 116.6 33.2C117.6 32.5 118.4 31.6 119.3 31.0C120.3 30.3 121.3 29.4 122.2 29.1C123.2 28.8 124.2 29.1 125.1 29.4C126.0 29.7 126.8 30.8 127.7 30.9C128.5 31.1 129.2 30.4 130.0 30.2C130.9 30.0 131.9 29.5 132.7 29.6C133.6 29.7 134.1 30.3 135.1 30.8C136.0 31.2 137.4 32.6 138.4 32.4C139.5 32.3 140.4 30.1 141.4 29.7C142.4 29.3 143.5 30.3 144.5 30.1C145.5 29.9 146.4 28.6 147.3 28.4C148.2 28.3 148.9 29.3 149.8 29.4C150.8 29.5 151.9 28.8 152.8 29.2C153.8 29.6 154.6 31.6 155.6 31.9C156.6 32.2 157.7 31.5 158.7 30.8C159.8 30.1 160.8 28.0 161.9 27.9C162.9 27.8 164.0 29.7 165.0 30.1C166.1 30.5 167.3 30.2 168.2 30.1C169.2 29.9 169.9 29.5 170.8 29.3C171.8 29.1 172.8 28.7 173.8 28.9C174.8 29.0 175.7 29.8 176.7 30.1C177.7 30.4 178.8 30.2 179.8 30.5C180.8 30.8 181.8 32.2 182.7 31.9C183.6 31.6 184.2 28.9 185.0 28.6C185.9 28.4 186.7 30.4 187.5 30.5C188.3 30.6 189.0 28.9 189.8 29.2C190.6 29.5 191.5 32.2 192.4 32.1C193.2 32.1 194.0 28.7 194.9 28.8C195.8 28.8 196.9 32.0 198.0 32.6C199.1 33.2 200.3 32.7 201.3 32.4C202.4 32.1 203.1 30.7 204.1 30.7C205.1 30.7 206.2 32.2 207.3 32.4C208.3 32.6 209.4 32.5 210.5 32.0C211.5 31.5 212.5 29.4 213.5 29.6C214.5 29.8 215.5 33.0 216.4 33.3C217.4 33.7 218.4 32.2 219.5 31.8C220.5 31.3 221.6 30.6 222.5 30.5C223.4 30.5 224.0 31.5 224.9 31.5C225.7 31.4 226.8 30.2 227.8 30.2C228.8 30.2 229.8 30.6 230.8 31.5C231.8 32.4 232.8 34.8 233.9 35.7C234.9 36.5 236.1 35.8 237.1 36.7C238.2 37.5 239.1 39.9 240.1 40.8C241.0 41.7 242.0 42.0 242.9 42.3C243.8 42.5 244.4 41.7 245.4 42.6C246.3 43.5 247.7 46.8 248.6 47.6C249.5 48.5 250.1 46.9 250.9 47.8C251.6 48.7 252.3 51.6 253.2 53.2C254.1 54.8 255.1 55.2 256.1 57.5C257.1 59.8 258.1 64.2 259.1 67.1C260.0 69.9 260.9 70.4 261.9 74.8C262.9 79.3 264.0 87.7 265.1 93.7C266.1 99.8 267.2 105.2 268.2 111.2C269.2 117.1 270.2 127.2 271.0 129.4C271.8 131.5 272.5 124.8 273.3 124.1C274.1 123.5 274.9 124.5 275.7 125.6C276.5 126.6 277.4 130.4 278.2 130.5C279.0 130.5 279.8 126.0 280.6 125.7C281.3 125.4 282.0 128.2 282.9 128.6C283.8 129.1 285.1 127.7 286.0 128.3C286.9 129.0 287.4 132.2 288.3 132.6C289.2 132.9 290.5 131.1 291.4 130.4C292.4 129.8 292.8 128.6 293.7 128.7C294.7 128.7 296.0 130.1 296.9 130.6C297.8 131.1 298.4 132.3 299.3 131.7C300.1 131.1 301.2 127.7 302.0 126.9C302.9 126.2 303.4 126.9 304.3 127.2C305.2 127.5 306.4 128.0 307.3 129.0C308.3 130.0 309.1 133.2 310.0 133.4C310.9 133.7 311.8 130.4 312.8 130.4C313.8 130.4 314.9 132.8 315.8 133.4C316.7 134.0 317.4 133.8 318.2 133.9C319.1 133.9 320.1 134.2 321.0 133.7C321.9 133.1 322.9 130.8 323.8 130.7C324.7 130.6 325.5 132.9 326.4 132.8C327.4 132.8 328.8 131.1 329.7 130.6C330.7 130.1 331.2 129.9 332.1 129.9C333.0 129.9 334.1 131.1 335.2 130.8C336.2 130.5 337.4 127.4 338.4 128.1C339.5 128.7 340.5 134.4 341.5 134.8C342.4 135.3 343.7 131.6 344.1 131.0" fill="none" stroke="#90b4e4" stroke-width="1.3" stroke-linejoin="round"/></svg>
<svg style="left:903px;top:476px" width="6" height="4"><path d="M0 0 H6 L3 3.5 Z" fill="#8a8a9a"/></svg>
<div class="t" style="left:910px;top:475.3px;font-size:7.1px;color:#333;">Trace 1</div>
<div class="b" style="left:955px;top:474px;width:8px;height:8px;border:1px solid #7a8ac8;background:linear-gradient(#f4f6ff,#d8def4)"></div>
<svg style="left:956px;top:475px" width="6" height="6"><path d="M0.8 3 L2.5 4.8 L5.5 1" fill="none" stroke="#3a4a9a" stroke-width="1"/></svg>
<div class="t" style="left:963px;top:475.3px;font-size:7.1px;color:#333;">Show</div>
<div class="t" style="left:983px;top:475.3px;font-size:7.1px;color:#333;">+Peak Normal</div>
<div class="b" style="left:1255px;top:473.5px;width:20px;height:9.5px;border:1px solid #9098c0;background:linear-gradient(#ffffff,#e8ecec)"></div>
<div class="t" style="left:1258px;top:475px;font-size:7.2px;color:#333;">Clear</div>
<svg style="left:856px;top:486px" width="5" height="4"><path d="M0 2 L2.5 0 L5 2 L2.5 4Z" fill="#555"/></svg>
<div class="t" style="left:863px;top:484.5px;font-size:7.4px;color:#333;">0.00</div>
<div class="b" style="left:862px;top:495.5px;width:34px;height:9.5px;background:#fff;border:1px solid #c8c8d0"></div>
<div class="t" style="left:865px;top:496.5px;font-size:7.4px;color:#333;">dBm</div>
<div class="b" style="left:888px;top:496.5px;width:7.5px;height:7.5px;border:1px solid #8a9ad0;background:#e4e8f8"></div>
<svg style="left:889.5px;top:499px" width="5" height="3"><path d="M0.3 0.3 L2.5 2.6 L4.7 0.3" fill="none" stroke="#3a4a8a" stroke-width="0.9"/></svg>
<svg style="left:856px;top:523px" width="5" height="4"><path d="M0 2 L2.5 0 L5 2 L2.5 4Z" fill="#555"/></svg>
<div class="t" style="left:861px;top:517px;font-size:7.4px;color:#333;">dB/div:</div>
<div class="t" style="left:863px;top:525px;font-size:7.4px;color:#333;">10.0 dB</div>
<svg style="left:856px;top:542px" width="5" height="4"><path d="M0 2 L2.5 0 L5 2 L2.5 4Z" fill="#555"/></svg>
<div class="t" style="left:861px;top:537px;font-size:7.4px;color:#333;">RBW:</div>
<div class="t" style="left:864px;top:545px;font-size:7.2px;color:#333;font-style:italic;">1.00 MHz</div>
<div class="b" style="left:857px;top:554.5px;width:7.5px;height:7.5px;border:1px solid #9aa0c8;background:linear-gradient(#fafbff,#e4e8f4)"></div>
<div class="t" style="left:866px;top:555.5px;font-size:7.4px;color:#333;">VBW:</div>
<div class="t" style="left:858px;top:577px;font-size:7.4px;color:#333;">Segments:</div>
<div class="t" style="left:860px;top:587px;font-size:7.4px;color:#333;">5</div>
<div class="b" style="left:857px;top:653.5px;width:36px;height:10.5px;border:1px solid #8088b8;background:linear-gradient(#fbfdfd,#e4eae8);border-radius:1px"></div>
<div class="t" style="left:861px;top:656px;font-size:7.2px;color:#222;">Autoscale</div>
<div class="t tr" style="left:860px;top:482.5px;width:56px;text-align:right;font-size:7.4px;color:#333">0.0</div>
<div class="b" style="left:918px;top:484.7px;width:2.5px;height:0.8px;background:#777"></div>
<div class="t tr" style="left:860px;top:498.9px;width:56px;text-align:right;font-size:7.4px;color:#333">-10.0</div>
<div class="b" style="left:918px;top:501.09999999999997px;width:2.5px;height:0.8px;background:#777"></div>
<div class="t tr" style="left:860px;top:515.3px;width:56px;text-align:right;font-size:7.4px;color:#333">-20.0</div>
<div class="b" style="left:918px;top:517.5px;width:2.5px;height:0.8px;background:#777"></div>
<div class="t tr" style="left:860px;top:531.7px;width:56px;text-align:right;font-size:7.4px;color:#333">-30.0</div>
<div class="b" style="left:918px;top:533.9000000000001px;width:2.5px;height:0.8px;background:#777"></div>
<div class="t tr" style="left:860px;top:548.1px;width:56px;text-align:right;font-size:7.4px;color:#333">-40.0</div>
<div class="b" style="left:918px;top:550.3000000000001px;width:2.5px;height:0.8px;background:#777"></div>
<div class="t tr" style="left:860px;top:564.5px;width:56px;text-align:right;font-size:7.4px;color:#333">-50.0</div>
<div class="b" style="left:918px;top:566.7px;width:2.5px;height:0.8px;background:#777"></div>
<div class="t tr" style="left:860px;top:580.9px;width:56px;text-align:right;font-size:7.4px;color:#333">-60.0</div>
<div class="b" style="left:918px;top:583.1px;width:2.5px;height:0.8px;background:#777"></div>
<div class="t tr" style="left:860px;top:597.3px;width:56px;text-align:right;font-size:7.4px;color:#333">-70.0</div>
<div class="b" style="left:918px;top:599.5px;width:2.5px;height:0.8px;background:#777"></div>
<div class="t tr" style="left:860px;top:613.7px;width:56px;text-align:right;font-size:7.4px;color:#333">-80.0</div>
<div class="b" style="left:918px;top:615.9000000000001px;width:2.5px;height:0.8px;background:#777"></div>
<div class="t tr" style="left:860px;top:630.1px;width:56px;text-align:right;font-size:7.4px;color:#333">-90.0</div>
<div class="b" style="left:918px;top:632.3000000000001px;width:2.5px;height:0.8px;background:#777"></div>
<div class="t tr" style="left:860px;top:646.5px;width:56px;text-align:right;font-size:7.4px;color:#333">-100.0</div>
<div class="b" style="left:918px;top:648.7px;width:2.5px;height:0.8px;background:#777"></div>
<svg style="left:926px;top:655px" width="5" height="4"><path d="M0 2 L2.5 0 L5 2 L2.5 4Z" fill="#555"/></svg>
<div class="t" style="left:933px;top:654.3px;font-size:7.4px;color:#333;">Start</div>
<div class="t" style="left:952px;top:654.3px;font-size:7.4px;color:#333;">675.000 MHz</div>
<svg style="left:1190px;top:655px" width="5" height="4"><path d="M0 2 L2.5 0 L5 2 L2.5 4Z" fill="#555"/></svg>
<div class="t" style="left:1198px;top:654.3px;font-size:7.4px;color:#333;">Stop</div>
<div class="b" style="left:1212.8px;top:651.5px;width:59px;height:9.5px;background:#fff;border:1px solid #c0c4d8"></div>
<div class="t" style="left:1215.5px;top:654.3px;font-size:7.4px;color:#333;">825.000 MHz</div>
<svg style="left:923px;top:485px" width="346.5" height="164"><rect width="346.5" height="164" fill="#000"/><path d="M34.50 0V164M0 16.50H346.5M69.50 0V164M0 32.50H346.5M103.50 0V164M0 49.50H346.5M138.50 0V164M0 65.50H346.5M173.50 0V164M0 82.50H346.5M207.50 0V164M0 98.50H346.5M242.50 0V164M0 114.50H346.5M277.50 0V164M0 131.50H346.5M311.50 0V164M0 147.50H346.5" stroke="#727272" stroke-width="1"/><path d="M168.25 155 L173.25 163 L178.25 155" fill="none" stroke="#ddd" stroke-width="0.9"/><path d="M0.0 126.5C0.3 126.9 1.3 129.0 2.1 129.1C2.8 129.1 3.8 127.3 4.6 127.0C5.5 126.7 6.4 127.4 7.1 127.3C7.9 127.3 8.5 125.4 9.3 126.7C10.1 127.9 11.0 134.1 11.8 134.7C12.6 135.4 13.5 130.7 14.2 130.4C15.0 130.1 15.6 132.0 16.3 132.9C17.0 133.8 17.6 135.8 18.3 136.1C19.0 136.4 19.7 135.7 20.5 134.6C21.3 133.5 22.0 130.3 22.8 129.3C23.6 128.3 24.4 128.8 25.3 128.6C26.3 128.4 27.4 127.8 28.4 128.3C29.4 128.8 30.5 131.5 31.5 131.6C32.5 131.7 33.4 128.0 34.3 128.7C35.3 129.4 36.1 135.5 37.0 136.1C37.9 136.7 38.8 132.2 39.6 132.3C40.4 132.5 41.1 137.0 41.8 136.7C42.6 136.5 43.2 132.3 44.1 130.9C44.9 129.4 46.1 129.1 47.0 128.0C47.9 126.9 48.8 127.4 49.5 124.3C50.3 121.2 50.8 113.5 51.6 109.5C52.3 105.4 53.4 102.5 54.2 99.8C55.0 97.0 55.7 95.2 56.4 93.0C57.1 90.8 57.8 89.1 58.6 86.6C59.4 84.1 60.4 80.4 61.3 78.1C62.2 75.8 63.1 74.4 64.0 72.6C64.9 70.9 65.7 68.7 66.7 67.4C67.6 66.2 68.6 66.4 69.6 65.2C70.6 63.9 71.7 61.0 72.7 60.0C73.8 58.9 74.7 59.7 75.7 58.9C76.7 58.0 78.0 55.8 78.9 54.9C79.8 54.0 80.3 54.2 81.2 53.5C82.0 52.7 83.2 51.4 84.2 50.7C85.2 49.9 86.3 49.1 87.3 49.0C88.2 48.9 89.1 50.0 90.1 50.0C91.0 50.0 91.9 49.8 92.9 49.1C93.8 48.4 94.8 45.9 95.7 45.7C96.6 45.5 97.4 48.1 98.2 48.1C98.9 48.2 99.5 46.6 100.2 46.0C100.9 45.5 101.6 44.9 102.4 44.7C103.2 44.6 104.2 44.8 105.1 45.1C106.1 45.3 107.1 46.0 107.9 46.2C108.8 46.4 109.6 46.9 110.5 46.5C111.4 46.0 112.3 44.1 113.2 43.6C114.0 43.2 114.4 43.7 115.3 43.9C116.2 44.2 117.6 44.9 118.5 45.1C119.4 45.3 119.9 45.1 120.8 45.2C121.7 45.3 122.8 45.8 123.8 45.7C124.8 45.7 125.7 45.5 126.7 44.9C127.7 44.4 128.6 42.6 129.6 42.6C130.6 42.6 131.7 44.6 132.6 44.9C133.6 45.2 134.3 44.5 135.3 44.4C136.2 44.3 137.5 44.4 138.3 44.3C139.2 44.2 139.8 43.8 140.5 43.8C141.3 43.9 141.8 44.4 142.6 44.4C143.5 44.4 144.6 44.4 145.5 43.9C146.3 43.5 147.0 41.9 147.7 41.6C148.5 41.3 149.2 41.8 150.0 42.0C150.9 42.2 151.9 42.7 152.8 42.8C153.8 42.9 154.7 42.7 155.6 42.6C156.6 42.5 157.7 42.1 158.6 42.0C159.5 42.0 160.1 42.3 161.0 42.1C161.8 41.9 162.8 40.9 163.6 41.0C164.4 41.1 164.8 42.1 165.7 42.6C166.6 43.1 167.9 43.2 168.9 43.9C169.9 44.6 170.8 45.7 171.7 46.7C172.7 47.7 173.5 50.1 174.5 49.7C175.4 49.3 176.5 45.5 177.4 44.3C178.3 43.1 179.2 42.3 180.0 42.4C180.9 42.4 181.6 44.2 182.4 44.5C183.2 44.8 183.8 44.4 184.5 44.1C185.2 43.9 185.8 42.7 186.7 42.9C187.5 43.1 188.7 45.3 189.7 45.2C190.6 45.2 191.4 42.7 192.3 42.6C193.2 42.5 194.3 44.5 195.2 44.6C196.2 44.6 197.0 43.5 197.9 43.1C198.7 42.7 199.5 42.1 200.5 42.0C201.4 41.8 202.7 41.5 203.6 42.1C204.4 42.7 204.9 45.3 205.7 45.6C206.5 45.8 207.6 43.7 208.4 43.6C209.3 43.5 209.9 45.0 210.8 44.8C211.6 44.7 212.9 42.8 213.7 42.9C214.5 43.0 214.9 45.1 215.7 45.3C216.5 45.6 217.7 44.8 218.6 44.3C219.4 43.8 220.0 42.2 220.8 42.4C221.5 42.7 222.3 45.3 223.2 45.6C224.0 46.0 224.8 44.9 225.6 44.5C226.5 44.1 227.6 43.2 228.4 43.2C229.2 43.2 229.7 44.1 230.5 44.3C231.4 44.5 232.6 44.5 233.6 44.3C234.6 44.0 235.7 42.8 236.7 42.8C237.7 42.9 238.8 44.3 239.6 44.5C240.5 44.7 241.0 43.5 241.8 43.9C242.5 44.3 243.3 46.5 244.1 47.0C245.0 47.5 245.8 46.8 246.7 46.9C247.7 47.0 248.7 47.6 249.7 47.7C250.7 47.8 251.8 47.2 252.8 47.7C253.7 48.2 254.6 50.0 255.5 50.6C256.5 51.2 257.4 50.8 258.3 51.3C259.3 51.9 260.2 53.4 261.2 53.8C262.2 54.2 263.3 53.8 264.2 53.9C265.0 54.0 265.6 53.7 266.4 54.3C267.2 54.9 268.1 56.7 269.0 57.5C269.8 58.3 270.5 58.7 271.4 59.1C272.3 59.5 273.4 59.3 274.3 60.2C275.3 61.1 276.0 63.1 276.9 64.5C277.7 66.0 278.5 67.7 279.5 69.0C280.4 70.2 281.7 70.6 282.5 72.1C283.4 73.5 283.8 76.1 284.6 77.6C285.3 79.2 286.2 79.4 286.9 81.3C287.7 83.2 288.2 85.8 289.1 88.9C290.0 92.0 291.2 95.8 292.2 99.9C293.2 104.0 294.5 109.6 295.3 113.5C296.2 117.5 296.7 121.0 297.4 123.6C298.2 126.2 299.1 128.9 299.9 129.3C300.7 129.6 301.4 125.5 302.3 125.7C303.2 125.9 304.4 130.0 305.4 130.5C306.5 130.9 307.6 128.2 308.6 128.4C309.7 128.7 310.9 131.3 311.8 132.0C312.7 132.7 313.2 132.3 313.9 132.8C314.6 133.2 315.1 134.3 316.0 134.9C316.8 135.4 318.2 136.5 319.2 135.9C320.2 135.2 321.0 130.9 322.0 131.1C322.9 131.4 323.9 135.8 324.8 137.1C325.7 138.4 326.5 139.7 327.5 139.1C328.4 138.5 329.5 134.0 330.4 133.3C331.3 132.6 331.9 134.1 332.8 134.9C333.7 135.7 334.9 138.5 335.8 138.0C336.7 137.5 337.2 132.8 338.1 131.9C338.9 130.9 340.1 131.3 341.0 132.1C342.0 132.9 342.9 136.9 343.8 136.7C344.7 136.5 346.0 131.8 346.5 130.8" fill="none" stroke="#e4e03c" stroke-width="1.3" stroke-linejoin="round"/></svg>
<div class="b" style="left:0px;top:667px;width:1280px;height:18px;background:linear-gradient(#fbfcfc,#f4f8f8)"></div>
<div class="b" style="left:0px;top:684px;width:1280px;height:1.5px;background:#a8acd4"></div>
<div class="b" style="left:0px;top:685.5px;width:1280px;height:14.5px;background:linear-gradient(#f6faf8,#e8f0ee 60%,#d0d8dc)"></div>
<div class="t" style="left:2px;top:672px;font-size:8.4px;color:#333;">Spectrum</div>
<div class="t" style="left:58px;top:672px;font-size:8.4px;color:#333;">Frequency</div>
<div class="b" style="left:95px;top:668.5px;width:47px;height:13px;background:#fff;border:1px solid #d0d0d8"></div>
<div class="t" style="left:97.5px;top:672px;font-size:8.4px;color:#222;">1.00000 GHz</div>
<div class="t" style="left:411.5px;top:672px;font-size:8.4px;color:#333;">Ref Lev</div>
<div class="b" style="left:439px;top:669px;width:48px;height:12.5px;background:#fff;border:1px solid #d0d0d8"></div>
<div class="t" style="left:441.5px;top:672px;font-size:8.4px;color:#222;">0.00 dBm</div>
<div class="t" style="left:766px;top:672px;font-size:8.4px;color:#333;">Span</div>
<div class="b" style="left:784px;top:669px;width:48px;height:12.5px;background:#fff;border:1px solid #d0d0d8"></div>
<div class="t" style="left:786.5px;top:672px;font-size:8.4px;color:#222;">100.0 MHz</div>
<div class="t" style="left:1101px;top:672px;font-size:8.4px;color:#333;">Res BW</div>
<div class="b" style="left:1129px;top:669px;width:48px;height:12.5px;background:#fff;border:1px solid #d0d0d8"></div>
<div class="t" style="left:1131.5px;top:672px;font-size:8.4px;color:#222;font-style:italic;">1.00 MHz</div>
<div class="b" style="left:1203px;top:669px;width:30px;height:12.5px;border:1px solid #8a90c0;background:linear-gradient(#fff,#e8ecf0)"></div>
<div class="t" style="left:1205px;top:672px;font-size:8.4px;color:#222;">Markers</div>
<div class="b" style="left:1235px;top:669px;width:27px;height:12.5px;border:1px solid #8a90c0;background:linear-gradient(#fff,#e8ecf0)"></div>
<div class="t" style="left:1237px;top:672px;font-size:8.4px;color:#222;">Traces</div>
<div class="b" style="left:1263.5px;top:669px;width:14px;height:12.5px;border:1px solid #a8b0d8;background:#f4f6fa"></div>
<svg style="left:1264.5px;top:669.3px" width="12" height="12"><rect x="4.6" y="0.2" width="2.8" height="2.8" fill="#111" transform="rotate(0.0 6 6)"/><rect x="4.6" y="0.2" width="2.8" height="2.8" fill="#111" transform="rotate(51.4 6 6)"/><rect x="4.6" y="0.2" width="2.8" height="2.8" fill="#111" transform="rotate(102.9 6 6)"/><rect x="4.6" y="0.2" width="2.8" height="2.8" fill="#111" transform="rotate(154.3 6 6)"/><rect x="4.6" y="0.2" width="2.8" height="2.8" fill="#111" transform="rotate(205.7 6 6)"/><rect x="4.6" y="0.2" width="2.8" height="2.8" fill="#111" transform="rotate(257.1 6 6)"/><rect x="4.6" y="0.2" width="2.8" height="2.8" fill="#111" transform="rotate(308.6 6 6)"/><circle cx="6" cy="6" r="4" fill="#111"/><circle cx="6" cy="6" r="1.8" fill="#fff"/></svg>
<div class="b" style="left:48px;top:686px;width:1px;height:14px;background:#c0c8c8"></div>
<div class="b" style="left:188px;top:686px;width:1px;height:14px;background:#c0c8c8"></div>
<div class="b" style="left:221.5px;top:686px;width:1px;height:14px;background:#c0c8c8"></div>
<div class="b" style="left:274px;top:686px;width:1px;height:14px;background:#c0c8c8"></div>
<div class="b" style="left:309.7px;top:686px;width:1px;height:14px;background:#c0c8c8"></div>
<div class="b" style="left:349.6px;top:686px;width:1px;height:14px;background:#c0c8c8"></div>
<div class="b" style="left:389.4px;top:686px;width:1px;height:14px;background:#c0c8c8"></div>
<div class="b" style="left:416.7px;top:686px;width:1px;height:14px;background:#c0c8c8"></div>
<div class="t" style="left:4px;top:688.5px;font-size:7px;color:#333;">Stopped</div>
<div class="t" style="left:52px;top:688.5px;font-size:6.8px;color:#333;">Acq BW: 150.00 MHz, Acq Length: 123.750 us</div>
<div class="t" style="left:191px;top:688.5px;font-size:6.9px;color:#333;">Real Time</div>
<div class="t" style="left:224px;top:688.5px;font-size:6.9px;color:#333;">Free Run</div>
<svg style="left:1265px;top:688px" width="9" height="9"><path d="M1 8 Q1 2 8 1 Q8 7 1 8Z" fill="#4a9a4a"/><path d="M1 8 L6 3" stroke="#cde" stroke-width="0.6"/></svg>
<div class="b" style="left:0px;top:43px;width:2px;height:624px;background:#9a9a9a"></div>
<div class="b" style="left:1278px;top:43px;width:2px;height:624px;background:#b0b0b0"></div>
<svg style="left:504px;top:128px" width="136" height="20"><rect x="0" y="1" width="136" height="2" fill="#2a8060" opacity="0.4"/><rect x="0" y="5.7" width="136" height="10" fill="#6a3048" opacity="0.3"/><rect x="110" y="-8" width="21" height="27" fill="none" stroke="#2a8060" stroke-width="1" opacity="0.5"/></svg>
<svg style="left:428px;top:196px" width="72" height="16"><path d="M0.0 7.2 L3.7 14.8 L7.1 8.1 L10.8 3.0 L14.4 10.1 L18.8 1.5 L21.7 1.5 L26.1 11.1 L28.2 15.7 L33.1 10.5 L37.0 2.5 L39.0 8.5 L41.2 3.0 L43.9 0.5 L47.3 7.0 L51.8 8.3 L55.7 8.0 L59.7 7.3 L62.6 16.0 L67.6 13.4 L71.7 5.0" fill="none" stroke="#f0a8d8" stroke-width="1.2" opacity="0.3"/></svg>
<div class="b" style="left:440px;top:196px;width:55px;height:14px;background:#d8f8f8;opacity:0.3"></div>
<svg style="left:428px;top:622px" width="75" height="8"><path d="M0.0 3.8 L4.0 5.3 L6.4 0.1 L9.5 2.2 L14.0 5.5 L17.8 4.5 L21.7 1.2 L25.1 1.3 L29.8 0.5 L34.2 0.6 L38.3 2.7 L41.5 6.7 L43.6 0.5 L48.3 4.1 L50.6 7.9 L55.4 0.9 L58.7 1.1 L61.6 5.0 L64.1 5.6 L66.3 1.4 L70.7 3.2 L74.0 4.8" fill="none" stroke="#60d0d8" stroke-width="1.2" opacity="0.45"/></svg>
<svg style="left:510px;top:398px" width="118" height="18"><path d="M0.0 4.7 L4.1 12.3 L8.6 3.3 L11.3 2.6 L14.0 13.2 L16.4 9.6 L19.0 5.3 L22.3 15.1 L26.1 0.3 L29.0 2.6 L33.6 14.6 L38.0 14.9 L42.2 17.1 L46.6 4.6 L51.1 8.8 L55.4 10.2 L58.7 6.6 L62.0 5.6 L64.3 14.8 L68.7 17.7 L72.8 10.0 L77.1 2.4 L81.1 8.0 L83.6 3.6 L87.2 4.6 L90.6 10.9 L93.8 2.4 L97.2 4.2 L99.9 3.5 L103.0 1.3 L107.0 17.2 L110.2 12.9 L115.0 0.8 L117.4 14.5" fill="none" stroke="#a02848" stroke-width="1.2" opacity="0.35"/></svg>
<svg style="left:508px;top:300px" width="8" height="86"><path d="M2 0 V16 M3 36 V52 M6 68 V84" stroke="#a02848" stroke-width="1.5" opacity="0.5"/></svg>
<svg style="left:512px;top:430px" width="115" height="12"><path d="M0.0 1.3 L4.1 7.8 L8.9 3.3 L11.7 8.8 L15.7 3.6 L19.7 4.8 L24.1 1.4 L26.7 10.8 L29.8 3.1 L34.2 7.6 L36.7 6.6 L40.7 2.0 L44.6 1.5 L47.6 1.0 L50.2 11.7 L53.4 11.9 L56.8 7.3 L61.4 8.2 L63.7 7.1 L67.6 2.2 L69.9 10.5 L73.4 2.3 L76.8 2.6 L81.2 6.0 L83.5 9.8 L85.8 3.4 L87.9 8.9 L90.2 6.3 L92.5 5.8 L96.5 6.4 L99.9 5.8 L103.2 7.1 L105.5 5.7 L108.2 10.4 L113.0 0.8" fill="none" stroke="#e888c8" stroke-width="1.2" opacity="0.25"/></svg>
<svg style="left:384px;top:620px" width="36" height="20"><path d="M0 18 L6 12 L12 10 L18 7 L24 5 L30 4 L36 2" fill="none" stroke="#2a8a50" stroke-width="1.2" opacity="0.8"/></svg></body></html>
